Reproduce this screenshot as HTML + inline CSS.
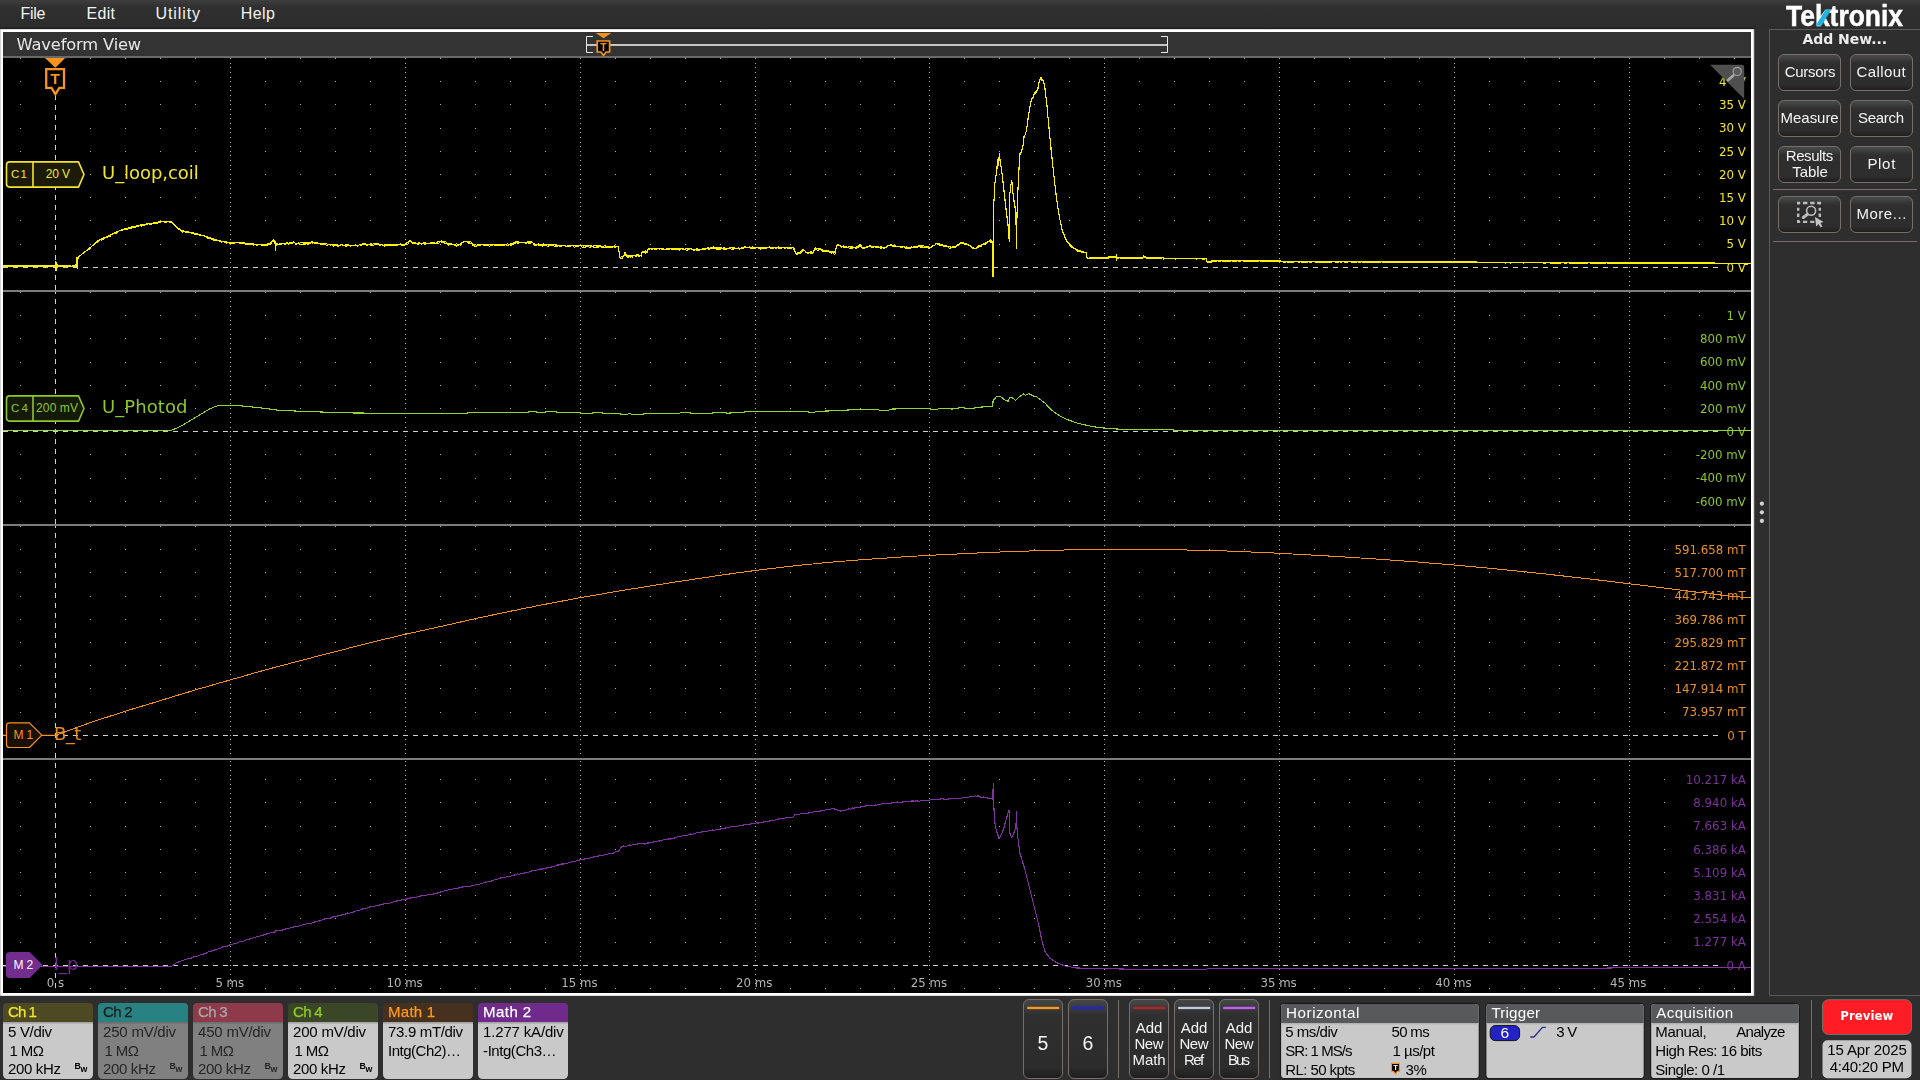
<!DOCTYPE html>
<html lang="en"><head><meta charset="utf-8"><title>Waveform View</title>
<style>
html,body{margin:0;padding:0;background:#2e2e2e;overflow:hidden}
body{width:1920px;height:1080px;font-family:"Liberation Sans",sans-serif}
svg{display:block;position:absolute;left:0;top:0}
text{white-space:pre}
</style></head><body>
<svg width="1920" height="1080" viewBox="0 0 1920 1080">
<defs>
<linearGradient id="menu" x1="0" y1="0" x2="0" y2="1"><stop offset="0" stop-color="#3e3e3e"/><stop offset="0.28" stop-color="#2f2f2f"/><stop offset="1" stop-color="#2d2d2d"/></linearGradient>
<linearGradient id="btn" x1="0" y1="0" x2="0" y2="1"><stop offset="0" stop-color="#474848"/><stop offset="0.08" stop-color="#424343"/><stop offset="0.24" stop-color="#2f2f2f"/><stop offset="0.84" stop-color="#2d2d2d"/><stop offset="1" stop-color="#1d1d1d"/></linearGradient>
<linearGradient id="tall" x1="0" y1="0" x2="0" y2="1"><stop offset="0" stop-color="#464747"/><stop offset="0.06" stop-color="#3f4040"/><stop offset="0.2" stop-color="#2f2f2f"/><stop offset="0.86" stop-color="#2c2c2c"/><stop offset="1" stop-color="#1d1d1d"/></linearGradient>
<filter id="gray" x="0" y="0" width="1920" height="1080" filterUnits="userSpaceOnUse" color-interpolation-filters="sRGB"><feOffset dx="0" dy="0"/></filter>
<clipPath id="grat"><rect x="3" y="58" width="1748" height="935"/></clipPath>
<clipPath id="s4"><rect x="3" y="760" width="1748" height="233"/></clipPath>
</defs>
<g filter="url(#gray)">
<rect x="0" y="0" width="1920" height="1080" fill="#2e2e2e"/>
<rect x="0" y="0" width="1920" height="28" fill="url(#menu)"/>
<rect x="0" y="27.6" width="1756" height="1.4" fill="#1f1f1f"/>
<text x="1786" y="25.6" font-size="29" font-weight="bold" fill="#ffffff" stroke="#ffffff" stroke-width="0.5" font-family='"Liberation Sans", sans-serif' textLength="117" lengthAdjust="spacingAndGlyphs">Tektronix</text>
<polygon points="1815.6,25.7 1821.6,25.7 1831.2,9.4 1825.6,9.4" fill="#1fb5e0"/>
<rect x="0" y="29" width="1754.3" height="967" fill="#b4b4b4"/>
<rect x="0.6" y="29.5" width="1752.8" height="966" fill="#ffffff"/>
<rect x="1753" y="32" width="0.9" height="961" fill="#dcdcdc"/>
<rect x="3" y="32" width="1748" height="24" fill="#333333"/>
<rect x="3" y="56" width="1748" height="2" fill="#696969"/>
<rect x="3" y="58" width="1748" height="935" fill="#000000"/>
<text x="16.6" y="49.8" font-size="16.3" fill="#e6e6e6" font-family='"DejaVu Sans", "Liberation Sans", sans-serif' textLength="124.6" lengthAdjust="spacing">Waveform View</text>
<path d="M593 36.5H586.5V52.5H593" fill="none" stroke="#e8e8e8" stroke-width="1"/>
<path d="M1161 36.5H1167.5V52.5H1161" fill="none" stroke="#e8e8e8" stroke-width="1"/>
<rect x="587" y="44" width="580" height="2" fill="#c4c4c4"/>
<polygon points="595.8,33 611.2,33 603.5,38.2" fill="#f7931e"/>
<path d="M597.2 41H609.6V52H606L603.5 55.4L601 52H597.2Z" fill="#000" stroke="#f7931e" stroke-width="1.7" stroke-linejoin="miter"/>
<text x="603.5" y="51.0" font-size="10.5" fill="#f7931e" font-family='"Liberation Sans", sans-serif' text-anchor="middle" font-weight="bold">T</text>
<g clip-path="url(#grat)" shape-rendering="crispEdges">
<path d="M20 58h1v1h-1zM20 81h1v1h-1zM20 104h1v1h-1zM20 128h1v1h-1zM20 151h1v1h-1zM20 174h1v1h-1zM20 197h1v1h-1zM20 220h1v1h-1zM20 244h1v1h-1zM20 292h1v1h-1zM20 315h1v1h-1zM20 338h1v1h-1zM20 362h1v1h-1zM20 385h1v1h-1zM20 408h1v1h-1zM20 454h1v1h-1zM20 478h1v1h-1zM20 501h1v1h-1zM20 526h1v1h-1zM20 549h1v1h-1zM20 572h1v1h-1zM20 596h1v1h-1zM20 619h1v1h-1zM20 642h1v1h-1zM20 665h1v1h-1zM20 688h1v1h-1zM20 712h1v1h-1zM20 779h1v1h-1zM20 802h1v1h-1zM20 826h1v1h-1zM20 849h1v1h-1zM20 872h1v1h-1zM20 895h1v1h-1zM20 918h1v1h-1zM20 942h1v1h-1zM20 988h1v1h-1zM90 58h1v1h-1zM90 81h1v1h-1zM90 104h1v1h-1zM90 128h1v1h-1zM90 151h1v1h-1zM90 174h1v1h-1zM90 197h1v1h-1zM90 220h1v1h-1zM90 244h1v1h-1zM90 292h1v1h-1zM90 315h1v1h-1zM90 338h1v1h-1zM90 362h1v1h-1zM90 385h1v1h-1zM90 408h1v1h-1zM90 454h1v1h-1zM90 478h1v1h-1zM90 501h1v1h-1zM90 526h1v1h-1zM90 549h1v1h-1zM90 572h1v1h-1zM90 596h1v1h-1zM90 619h1v1h-1zM90 642h1v1h-1zM90 665h1v1h-1zM90 688h1v1h-1zM90 712h1v1h-1zM90 779h1v1h-1zM90 802h1v1h-1zM90 826h1v1h-1zM90 849h1v1h-1zM90 872h1v1h-1zM90 895h1v1h-1zM90 918h1v1h-1zM90 942h1v1h-1zM90 988h1v1h-1zM125 58h1v1h-1zM125 81h1v1h-1zM125 104h1v1h-1zM125 128h1v1h-1zM125 151h1v1h-1zM125 174h1v1h-1zM125 197h1v1h-1zM125 220h1v1h-1zM125 244h1v1h-1zM125 292h1v1h-1zM125 315h1v1h-1zM125 338h1v1h-1zM125 362h1v1h-1zM125 385h1v1h-1zM125 408h1v1h-1zM125 454h1v1h-1zM125 478h1v1h-1zM125 501h1v1h-1zM125 526h1v1h-1zM125 549h1v1h-1zM125 572h1v1h-1zM125 596h1v1h-1zM125 619h1v1h-1zM125 642h1v1h-1zM125 665h1v1h-1zM125 688h1v1h-1zM125 712h1v1h-1zM125 779h1v1h-1zM125 802h1v1h-1zM125 826h1v1h-1zM125 849h1v1h-1zM125 872h1v1h-1zM125 895h1v1h-1zM125 918h1v1h-1zM125 942h1v1h-1zM125 988h1v1h-1zM160 58h1v1h-1zM160 81h1v1h-1zM160 104h1v1h-1zM160 128h1v1h-1zM160 151h1v1h-1zM160 174h1v1h-1zM160 197h1v1h-1zM160 220h1v1h-1zM160 244h1v1h-1zM160 292h1v1h-1zM160 315h1v1h-1zM160 338h1v1h-1zM160 362h1v1h-1zM160 385h1v1h-1zM160 408h1v1h-1zM160 454h1v1h-1zM160 478h1v1h-1zM160 501h1v1h-1zM160 526h1v1h-1zM160 549h1v1h-1zM160 572h1v1h-1zM160 596h1v1h-1zM160 619h1v1h-1zM160 642h1v1h-1zM160 665h1v1h-1zM160 688h1v1h-1zM160 712h1v1h-1zM160 779h1v1h-1zM160 802h1v1h-1zM160 826h1v1h-1zM160 849h1v1h-1zM160 872h1v1h-1zM160 895h1v1h-1zM160 918h1v1h-1zM160 942h1v1h-1zM160 988h1v1h-1zM195 58h1v1h-1zM195 81h1v1h-1zM195 104h1v1h-1zM195 128h1v1h-1zM195 151h1v1h-1zM195 174h1v1h-1zM195 197h1v1h-1zM195 220h1v1h-1zM195 244h1v1h-1zM195 292h1v1h-1zM195 315h1v1h-1zM195 338h1v1h-1zM195 362h1v1h-1zM195 385h1v1h-1zM195 408h1v1h-1zM195 454h1v1h-1zM195 478h1v1h-1zM195 501h1v1h-1zM195 526h1v1h-1zM195 549h1v1h-1zM195 572h1v1h-1zM195 596h1v1h-1zM195 619h1v1h-1zM195 642h1v1h-1zM195 665h1v1h-1zM195 688h1v1h-1zM195 712h1v1h-1zM195 779h1v1h-1zM195 802h1v1h-1zM195 826h1v1h-1zM195 849h1v1h-1zM195 872h1v1h-1zM195 895h1v1h-1zM195 918h1v1h-1zM195 942h1v1h-1zM195 988h1v1h-1zM230 58h1v1h-1zM230 63h1v1h-1zM230 67h1v1h-1zM230 72h1v1h-1zM230 77h1v1h-1zM230 81h1v1h-1zM230 86h1v1h-1zM230 90h1v1h-1zM230 95h1v1h-1zM230 100h1v1h-1zM230 104h1v1h-1zM230 109h1v1h-1zM230 114h1v1h-1zM230 118h1v1h-1zM230 123h1v1h-1zM230 128h1v1h-1zM230 132h1v1h-1zM230 137h1v1h-1zM230 142h1v1h-1zM230 146h1v1h-1zM230 151h1v1h-1zM230 155h1v1h-1zM230 160h1v1h-1zM230 165h1v1h-1zM230 169h1v1h-1zM230 174h1v1h-1zM230 179h1v1h-1zM230 183h1v1h-1zM230 188h1v1h-1zM230 193h1v1h-1zM230 197h1v1h-1zM230 202h1v1h-1zM230 206h1v1h-1zM230 211h1v1h-1zM230 216h1v1h-1zM230 220h1v1h-1zM230 225h1v1h-1zM230 230h1v1h-1zM230 234h1v1h-1zM230 239h1v1h-1zM230 244h1v1h-1zM230 248h1v1h-1zM230 253h1v1h-1zM230 258h1v1h-1zM230 262h1v1h-1zM230 267h1v1h-1zM230 271h1v1h-1zM230 276h1v1h-1zM230 281h1v1h-1zM230 285h1v1h-1zM230 292h1v1h-1zM230 297h1v1h-1zM230 301h1v1h-1zM230 306h1v1h-1zM230 311h1v1h-1zM230 315h1v1h-1zM230 320h1v1h-1zM230 324h1v1h-1zM230 329h1v1h-1zM230 334h1v1h-1zM230 338h1v1h-1zM230 343h1v1h-1zM230 348h1v1h-1zM230 352h1v1h-1zM230 357h1v1h-1zM230 362h1v1h-1zM230 366h1v1h-1zM230 371h1v1h-1zM230 376h1v1h-1zM230 380h1v1h-1zM230 385h1v1h-1zM230 389h1v1h-1zM230 394h1v1h-1zM230 399h1v1h-1zM230 403h1v1h-1zM230 408h1v1h-1zM230 413h1v1h-1zM230 417h1v1h-1zM230 422h1v1h-1zM230 427h1v1h-1zM230 431h1v1h-1zM230 436h1v1h-1zM230 440h1v1h-1zM230 445h1v1h-1zM230 450h1v1h-1zM230 454h1v1h-1zM230 459h1v1h-1zM230 464h1v1h-1zM230 468h1v1h-1zM230 473h1v1h-1zM230 478h1v1h-1zM230 482h1v1h-1zM230 487h1v1h-1zM230 492h1v1h-1zM230 496h1v1h-1zM230 501h1v1h-1zM230 505h1v1h-1zM230 510h1v1h-1zM230 515h1v1h-1zM230 519h1v1h-1zM230 526h1v1h-1zM230 531h1v1h-1zM230 535h1v1h-1zM230 540h1v1h-1zM230 545h1v1h-1zM230 549h1v1h-1zM230 554h1v1h-1zM230 558h1v1h-1zM230 563h1v1h-1zM230 568h1v1h-1zM230 572h1v1h-1zM230 577h1v1h-1zM230 582h1v1h-1zM230 586h1v1h-1zM230 591h1v1h-1zM230 596h1v1h-1zM230 600h1v1h-1zM230 605h1v1h-1zM230 610h1v1h-1zM230 614h1v1h-1zM230 619h1v1h-1zM230 623h1v1h-1zM230 628h1v1h-1zM230 633h1v1h-1zM230 637h1v1h-1zM230 642h1v1h-1zM230 647h1v1h-1zM230 651h1v1h-1zM230 656h1v1h-1zM230 661h1v1h-1zM230 665h1v1h-1zM230 670h1v1h-1zM230 674h1v1h-1zM230 679h1v1h-1zM230 684h1v1h-1zM230 688h1v1h-1zM230 693h1v1h-1zM230 698h1v1h-1zM230 702h1v1h-1zM230 707h1v1h-1zM230 712h1v1h-1zM230 716h1v1h-1zM230 721h1v1h-1zM230 726h1v1h-1zM230 730h1v1h-1zM230 735h1v1h-1zM230 739h1v1h-1zM230 744h1v1h-1zM230 749h1v1h-1zM230 753h1v1h-1zM230 761h1v1h-1zM230 765h1v1h-1zM230 770h1v1h-1zM230 775h1v1h-1zM230 779h1v1h-1zM230 784h1v1h-1zM230 788h1v1h-1zM230 793h1v1h-1zM230 798h1v1h-1zM230 802h1v1h-1zM230 807h1v1h-1zM230 812h1v1h-1zM230 816h1v1h-1zM230 821h1v1h-1zM230 826h1v1h-1zM230 830h1v1h-1zM230 835h1v1h-1zM230 840h1v1h-1zM230 844h1v1h-1zM230 849h1v1h-1zM230 853h1v1h-1zM230 858h1v1h-1zM230 863h1v1h-1zM230 867h1v1h-1zM230 872h1v1h-1zM230 877h1v1h-1zM230 881h1v1h-1zM230 886h1v1h-1zM230 891h1v1h-1zM230 895h1v1h-1zM230 900h1v1h-1zM230 904h1v1h-1zM230 909h1v1h-1zM230 914h1v1h-1zM230 918h1v1h-1zM230 923h1v1h-1zM230 928h1v1h-1zM230 932h1v1h-1zM230 937h1v1h-1zM230 942h1v1h-1zM230 946h1v1h-1zM230 951h1v1h-1zM230 956h1v1h-1zM230 960h1v1h-1zM230 965h1v1h-1zM230 969h1v1h-1zM230 974h1v1h-1zM230 979h1v1h-1zM230 983h1v1h-1zM230 988h1v1h-1zM265 58h1v1h-1zM265 81h1v1h-1zM265 104h1v1h-1zM265 128h1v1h-1zM265 151h1v1h-1zM265 174h1v1h-1zM265 197h1v1h-1zM265 220h1v1h-1zM265 244h1v1h-1zM265 292h1v1h-1zM265 315h1v1h-1zM265 338h1v1h-1zM265 362h1v1h-1zM265 385h1v1h-1zM265 408h1v1h-1zM265 454h1v1h-1zM265 478h1v1h-1zM265 501h1v1h-1zM265 526h1v1h-1zM265 549h1v1h-1zM265 572h1v1h-1zM265 596h1v1h-1zM265 619h1v1h-1zM265 642h1v1h-1zM265 665h1v1h-1zM265 688h1v1h-1zM265 712h1v1h-1zM265 779h1v1h-1zM265 802h1v1h-1zM265 826h1v1h-1zM265 849h1v1h-1zM265 872h1v1h-1zM265 895h1v1h-1zM265 918h1v1h-1zM265 942h1v1h-1zM265 988h1v1h-1zM300 58h1v1h-1zM300 81h1v1h-1zM300 104h1v1h-1zM300 128h1v1h-1zM300 151h1v1h-1zM300 174h1v1h-1zM300 197h1v1h-1zM300 220h1v1h-1zM300 244h1v1h-1zM300 292h1v1h-1zM300 315h1v1h-1zM300 338h1v1h-1zM300 362h1v1h-1zM300 385h1v1h-1zM300 408h1v1h-1zM300 454h1v1h-1zM300 478h1v1h-1zM300 501h1v1h-1zM300 526h1v1h-1zM300 549h1v1h-1zM300 572h1v1h-1zM300 596h1v1h-1zM300 619h1v1h-1zM300 642h1v1h-1zM300 665h1v1h-1zM300 688h1v1h-1zM300 712h1v1h-1zM300 779h1v1h-1zM300 802h1v1h-1zM300 826h1v1h-1zM300 849h1v1h-1zM300 872h1v1h-1zM300 895h1v1h-1zM300 918h1v1h-1zM300 942h1v1h-1zM300 988h1v1h-1zM335 58h1v1h-1zM335 81h1v1h-1zM335 104h1v1h-1zM335 128h1v1h-1zM335 151h1v1h-1zM335 174h1v1h-1zM335 197h1v1h-1zM335 220h1v1h-1zM335 244h1v1h-1zM335 292h1v1h-1zM335 315h1v1h-1zM335 338h1v1h-1zM335 362h1v1h-1zM335 385h1v1h-1zM335 408h1v1h-1zM335 454h1v1h-1zM335 478h1v1h-1zM335 501h1v1h-1zM335 526h1v1h-1zM335 549h1v1h-1zM335 572h1v1h-1zM335 596h1v1h-1zM335 619h1v1h-1zM335 642h1v1h-1zM335 665h1v1h-1zM335 688h1v1h-1zM335 712h1v1h-1zM335 779h1v1h-1zM335 802h1v1h-1zM335 826h1v1h-1zM335 849h1v1h-1zM335 872h1v1h-1zM335 895h1v1h-1zM335 918h1v1h-1zM335 942h1v1h-1zM335 988h1v1h-1zM370 58h1v1h-1zM370 81h1v1h-1zM370 104h1v1h-1zM370 128h1v1h-1zM370 151h1v1h-1zM370 174h1v1h-1zM370 197h1v1h-1zM370 220h1v1h-1zM370 244h1v1h-1zM370 292h1v1h-1zM370 315h1v1h-1zM370 338h1v1h-1zM370 362h1v1h-1zM370 385h1v1h-1zM370 408h1v1h-1zM370 454h1v1h-1zM370 478h1v1h-1zM370 501h1v1h-1zM370 526h1v1h-1zM370 549h1v1h-1zM370 572h1v1h-1zM370 596h1v1h-1zM370 619h1v1h-1zM370 642h1v1h-1zM370 665h1v1h-1zM370 688h1v1h-1zM370 712h1v1h-1zM370 779h1v1h-1zM370 802h1v1h-1zM370 826h1v1h-1zM370 849h1v1h-1zM370 872h1v1h-1zM370 895h1v1h-1zM370 918h1v1h-1zM370 942h1v1h-1zM370 988h1v1h-1zM405 58h1v1h-1zM405 63h1v1h-1zM405 67h1v1h-1zM405 72h1v1h-1zM405 77h1v1h-1zM405 81h1v1h-1zM405 86h1v1h-1zM405 90h1v1h-1zM405 95h1v1h-1zM405 100h1v1h-1zM405 104h1v1h-1zM405 109h1v1h-1zM405 114h1v1h-1zM405 118h1v1h-1zM405 123h1v1h-1zM405 128h1v1h-1zM405 132h1v1h-1zM405 137h1v1h-1zM405 142h1v1h-1zM405 146h1v1h-1zM405 151h1v1h-1zM405 155h1v1h-1zM405 160h1v1h-1zM405 165h1v1h-1zM405 169h1v1h-1zM405 174h1v1h-1zM405 179h1v1h-1zM405 183h1v1h-1zM405 188h1v1h-1zM405 193h1v1h-1zM405 197h1v1h-1zM405 202h1v1h-1zM405 206h1v1h-1zM405 211h1v1h-1zM405 216h1v1h-1zM405 220h1v1h-1zM405 225h1v1h-1zM405 230h1v1h-1zM405 234h1v1h-1zM405 239h1v1h-1zM405 244h1v1h-1zM405 248h1v1h-1zM405 253h1v1h-1zM405 258h1v1h-1zM405 262h1v1h-1zM405 267h1v1h-1zM405 271h1v1h-1zM405 276h1v1h-1zM405 281h1v1h-1zM405 285h1v1h-1zM405 292h1v1h-1zM405 297h1v1h-1zM405 301h1v1h-1zM405 306h1v1h-1zM405 311h1v1h-1zM405 315h1v1h-1zM405 320h1v1h-1zM405 324h1v1h-1zM405 329h1v1h-1zM405 334h1v1h-1zM405 338h1v1h-1zM405 343h1v1h-1zM405 348h1v1h-1zM405 352h1v1h-1zM405 357h1v1h-1zM405 362h1v1h-1zM405 366h1v1h-1zM405 371h1v1h-1zM405 376h1v1h-1zM405 380h1v1h-1zM405 385h1v1h-1zM405 389h1v1h-1zM405 394h1v1h-1zM405 399h1v1h-1zM405 403h1v1h-1zM405 408h1v1h-1zM405 413h1v1h-1zM405 417h1v1h-1zM405 422h1v1h-1zM405 427h1v1h-1zM405 431h1v1h-1zM405 436h1v1h-1zM405 440h1v1h-1zM405 445h1v1h-1zM405 450h1v1h-1zM405 454h1v1h-1zM405 459h1v1h-1zM405 464h1v1h-1zM405 468h1v1h-1zM405 473h1v1h-1zM405 478h1v1h-1zM405 482h1v1h-1zM405 487h1v1h-1zM405 492h1v1h-1zM405 496h1v1h-1zM405 501h1v1h-1zM405 505h1v1h-1zM405 510h1v1h-1zM405 515h1v1h-1zM405 519h1v1h-1zM405 526h1v1h-1zM405 531h1v1h-1zM405 535h1v1h-1zM405 540h1v1h-1zM405 545h1v1h-1zM405 549h1v1h-1zM405 554h1v1h-1zM405 558h1v1h-1zM405 563h1v1h-1zM405 568h1v1h-1zM405 572h1v1h-1zM405 577h1v1h-1zM405 582h1v1h-1zM405 586h1v1h-1zM405 591h1v1h-1zM405 596h1v1h-1zM405 600h1v1h-1zM405 605h1v1h-1zM405 610h1v1h-1zM405 614h1v1h-1zM405 619h1v1h-1zM405 623h1v1h-1zM405 628h1v1h-1zM405 633h1v1h-1zM405 637h1v1h-1zM405 642h1v1h-1zM405 647h1v1h-1zM405 651h1v1h-1zM405 656h1v1h-1zM405 661h1v1h-1zM405 665h1v1h-1zM405 670h1v1h-1zM405 674h1v1h-1zM405 679h1v1h-1zM405 684h1v1h-1zM405 688h1v1h-1zM405 693h1v1h-1zM405 698h1v1h-1zM405 702h1v1h-1zM405 707h1v1h-1zM405 712h1v1h-1zM405 716h1v1h-1zM405 721h1v1h-1zM405 726h1v1h-1zM405 730h1v1h-1zM405 735h1v1h-1zM405 739h1v1h-1zM405 744h1v1h-1zM405 749h1v1h-1zM405 753h1v1h-1zM405 761h1v1h-1zM405 765h1v1h-1zM405 770h1v1h-1zM405 775h1v1h-1zM405 779h1v1h-1zM405 784h1v1h-1zM405 788h1v1h-1zM405 793h1v1h-1zM405 798h1v1h-1zM405 802h1v1h-1zM405 807h1v1h-1zM405 812h1v1h-1zM405 816h1v1h-1zM405 821h1v1h-1zM405 826h1v1h-1zM405 830h1v1h-1zM405 835h1v1h-1zM405 840h1v1h-1zM405 844h1v1h-1zM405 849h1v1h-1zM405 853h1v1h-1zM405 858h1v1h-1zM405 863h1v1h-1zM405 867h1v1h-1zM405 872h1v1h-1zM405 877h1v1h-1zM405 881h1v1h-1zM405 886h1v1h-1zM405 891h1v1h-1zM405 895h1v1h-1zM405 900h1v1h-1zM405 904h1v1h-1zM405 909h1v1h-1zM405 914h1v1h-1zM405 918h1v1h-1zM405 923h1v1h-1zM405 928h1v1h-1zM405 932h1v1h-1zM405 937h1v1h-1zM405 942h1v1h-1zM405 946h1v1h-1zM405 951h1v1h-1zM405 956h1v1h-1zM405 960h1v1h-1zM405 965h1v1h-1zM405 969h1v1h-1zM405 974h1v1h-1zM405 979h1v1h-1zM405 983h1v1h-1zM405 988h1v1h-1zM440 58h1v1h-1zM440 81h1v1h-1zM440 104h1v1h-1zM440 128h1v1h-1zM440 151h1v1h-1zM440 174h1v1h-1zM440 197h1v1h-1zM440 220h1v1h-1zM440 244h1v1h-1zM440 292h1v1h-1zM440 315h1v1h-1zM440 338h1v1h-1zM440 362h1v1h-1zM440 385h1v1h-1zM440 408h1v1h-1zM440 454h1v1h-1zM440 478h1v1h-1zM440 501h1v1h-1zM440 526h1v1h-1zM440 549h1v1h-1zM440 572h1v1h-1zM440 596h1v1h-1zM440 619h1v1h-1zM440 642h1v1h-1zM440 665h1v1h-1zM440 688h1v1h-1zM440 712h1v1h-1zM440 779h1v1h-1zM440 802h1v1h-1zM440 826h1v1h-1zM440 849h1v1h-1zM440 872h1v1h-1zM440 895h1v1h-1zM440 918h1v1h-1zM440 942h1v1h-1zM440 988h1v1h-1zM475 58h1v1h-1zM475 81h1v1h-1zM475 104h1v1h-1zM475 128h1v1h-1zM475 151h1v1h-1zM475 174h1v1h-1zM475 197h1v1h-1zM475 220h1v1h-1zM475 244h1v1h-1zM475 292h1v1h-1zM475 315h1v1h-1zM475 338h1v1h-1zM475 362h1v1h-1zM475 385h1v1h-1zM475 408h1v1h-1zM475 454h1v1h-1zM475 478h1v1h-1zM475 501h1v1h-1zM475 526h1v1h-1zM475 549h1v1h-1zM475 572h1v1h-1zM475 596h1v1h-1zM475 619h1v1h-1zM475 642h1v1h-1zM475 665h1v1h-1zM475 688h1v1h-1zM475 712h1v1h-1zM475 779h1v1h-1zM475 802h1v1h-1zM475 826h1v1h-1zM475 849h1v1h-1zM475 872h1v1h-1zM475 895h1v1h-1zM475 918h1v1h-1zM475 942h1v1h-1zM475 988h1v1h-1zM510 58h1v1h-1zM510 81h1v1h-1zM510 104h1v1h-1zM510 128h1v1h-1zM510 151h1v1h-1zM510 174h1v1h-1zM510 197h1v1h-1zM510 220h1v1h-1zM510 244h1v1h-1zM510 292h1v1h-1zM510 315h1v1h-1zM510 338h1v1h-1zM510 362h1v1h-1zM510 385h1v1h-1zM510 408h1v1h-1zM510 454h1v1h-1zM510 478h1v1h-1zM510 501h1v1h-1zM510 526h1v1h-1zM510 549h1v1h-1zM510 572h1v1h-1zM510 596h1v1h-1zM510 619h1v1h-1zM510 642h1v1h-1zM510 665h1v1h-1zM510 688h1v1h-1zM510 712h1v1h-1zM510 779h1v1h-1zM510 802h1v1h-1zM510 826h1v1h-1zM510 849h1v1h-1zM510 872h1v1h-1zM510 895h1v1h-1zM510 918h1v1h-1zM510 942h1v1h-1zM510 988h1v1h-1zM545 58h1v1h-1zM545 81h1v1h-1zM545 104h1v1h-1zM545 128h1v1h-1zM545 151h1v1h-1zM545 174h1v1h-1zM545 197h1v1h-1zM545 220h1v1h-1zM545 244h1v1h-1zM545 292h1v1h-1zM545 315h1v1h-1zM545 338h1v1h-1zM545 362h1v1h-1zM545 385h1v1h-1zM545 408h1v1h-1zM545 454h1v1h-1zM545 478h1v1h-1zM545 501h1v1h-1zM545 526h1v1h-1zM545 549h1v1h-1zM545 572h1v1h-1zM545 596h1v1h-1zM545 619h1v1h-1zM545 642h1v1h-1zM545 665h1v1h-1zM545 688h1v1h-1zM545 712h1v1h-1zM545 779h1v1h-1zM545 802h1v1h-1zM545 826h1v1h-1zM545 849h1v1h-1zM545 872h1v1h-1zM545 895h1v1h-1zM545 918h1v1h-1zM545 942h1v1h-1zM545 988h1v1h-1zM580 58h1v1h-1zM580 63h1v1h-1zM580 67h1v1h-1zM580 72h1v1h-1zM580 77h1v1h-1zM580 81h1v1h-1zM580 86h1v1h-1zM580 90h1v1h-1zM580 95h1v1h-1zM580 100h1v1h-1zM580 104h1v1h-1zM580 109h1v1h-1zM580 114h1v1h-1zM580 118h1v1h-1zM580 123h1v1h-1zM580 128h1v1h-1zM580 132h1v1h-1zM580 137h1v1h-1zM580 142h1v1h-1zM580 146h1v1h-1zM580 151h1v1h-1zM580 155h1v1h-1zM580 160h1v1h-1zM580 165h1v1h-1zM580 169h1v1h-1zM580 174h1v1h-1zM580 179h1v1h-1zM580 183h1v1h-1zM580 188h1v1h-1zM580 193h1v1h-1zM580 197h1v1h-1zM580 202h1v1h-1zM580 206h1v1h-1zM580 211h1v1h-1zM580 216h1v1h-1zM580 220h1v1h-1zM580 225h1v1h-1zM580 230h1v1h-1zM580 234h1v1h-1zM580 239h1v1h-1zM580 244h1v1h-1zM580 248h1v1h-1zM580 253h1v1h-1zM580 258h1v1h-1zM580 262h1v1h-1zM580 267h1v1h-1zM580 271h1v1h-1zM580 276h1v1h-1zM580 281h1v1h-1zM580 285h1v1h-1zM580 292h1v1h-1zM580 297h1v1h-1zM580 301h1v1h-1zM580 306h1v1h-1zM580 311h1v1h-1zM580 315h1v1h-1zM580 320h1v1h-1zM580 324h1v1h-1zM580 329h1v1h-1zM580 334h1v1h-1zM580 338h1v1h-1zM580 343h1v1h-1zM580 348h1v1h-1zM580 352h1v1h-1zM580 357h1v1h-1zM580 362h1v1h-1zM580 366h1v1h-1zM580 371h1v1h-1zM580 376h1v1h-1zM580 380h1v1h-1zM580 385h1v1h-1zM580 389h1v1h-1zM580 394h1v1h-1zM580 399h1v1h-1zM580 403h1v1h-1zM580 408h1v1h-1zM580 413h1v1h-1zM580 417h1v1h-1zM580 422h1v1h-1zM580 427h1v1h-1zM580 431h1v1h-1zM580 436h1v1h-1zM580 440h1v1h-1zM580 445h1v1h-1zM580 450h1v1h-1zM580 454h1v1h-1zM580 459h1v1h-1zM580 464h1v1h-1zM580 468h1v1h-1zM580 473h1v1h-1zM580 478h1v1h-1zM580 482h1v1h-1zM580 487h1v1h-1zM580 492h1v1h-1zM580 496h1v1h-1zM580 501h1v1h-1zM580 505h1v1h-1zM580 510h1v1h-1zM580 515h1v1h-1zM580 519h1v1h-1zM580 526h1v1h-1zM580 531h1v1h-1zM580 535h1v1h-1zM580 540h1v1h-1zM580 545h1v1h-1zM580 549h1v1h-1zM580 554h1v1h-1zM580 558h1v1h-1zM580 563h1v1h-1zM580 568h1v1h-1zM580 572h1v1h-1zM580 577h1v1h-1zM580 582h1v1h-1zM580 586h1v1h-1zM580 591h1v1h-1zM580 596h1v1h-1zM580 600h1v1h-1zM580 605h1v1h-1zM580 610h1v1h-1zM580 614h1v1h-1zM580 619h1v1h-1zM580 623h1v1h-1zM580 628h1v1h-1zM580 633h1v1h-1zM580 637h1v1h-1zM580 642h1v1h-1zM580 647h1v1h-1zM580 651h1v1h-1zM580 656h1v1h-1zM580 661h1v1h-1zM580 665h1v1h-1zM580 670h1v1h-1zM580 674h1v1h-1zM580 679h1v1h-1zM580 684h1v1h-1zM580 688h1v1h-1zM580 693h1v1h-1zM580 698h1v1h-1zM580 702h1v1h-1zM580 707h1v1h-1zM580 712h1v1h-1zM580 716h1v1h-1zM580 721h1v1h-1zM580 726h1v1h-1zM580 730h1v1h-1zM580 735h1v1h-1zM580 739h1v1h-1zM580 744h1v1h-1zM580 749h1v1h-1zM580 753h1v1h-1zM580 761h1v1h-1zM580 765h1v1h-1zM580 770h1v1h-1zM580 775h1v1h-1zM580 779h1v1h-1zM580 784h1v1h-1zM580 788h1v1h-1zM580 793h1v1h-1zM580 798h1v1h-1zM580 802h1v1h-1zM580 807h1v1h-1zM580 812h1v1h-1zM580 816h1v1h-1zM580 821h1v1h-1zM580 826h1v1h-1zM580 830h1v1h-1zM580 835h1v1h-1zM580 840h1v1h-1zM580 844h1v1h-1zM580 849h1v1h-1zM580 853h1v1h-1zM580 858h1v1h-1zM580 863h1v1h-1zM580 867h1v1h-1zM580 872h1v1h-1zM580 877h1v1h-1zM580 881h1v1h-1zM580 886h1v1h-1zM580 891h1v1h-1zM580 895h1v1h-1zM580 900h1v1h-1zM580 904h1v1h-1zM580 909h1v1h-1zM580 914h1v1h-1zM580 918h1v1h-1zM580 923h1v1h-1zM580 928h1v1h-1zM580 932h1v1h-1zM580 937h1v1h-1zM580 942h1v1h-1zM580 946h1v1h-1zM580 951h1v1h-1zM580 956h1v1h-1zM580 960h1v1h-1zM580 965h1v1h-1zM580 969h1v1h-1zM580 974h1v1h-1zM580 979h1v1h-1zM580 983h1v1h-1zM580 988h1v1h-1zM615 58h1v1h-1zM615 81h1v1h-1zM615 104h1v1h-1zM615 128h1v1h-1zM615 151h1v1h-1zM615 174h1v1h-1zM615 197h1v1h-1zM615 220h1v1h-1zM615 244h1v1h-1zM615 292h1v1h-1zM615 315h1v1h-1zM615 338h1v1h-1zM615 362h1v1h-1zM615 385h1v1h-1zM615 408h1v1h-1zM615 454h1v1h-1zM615 478h1v1h-1zM615 501h1v1h-1zM615 526h1v1h-1zM615 549h1v1h-1zM615 572h1v1h-1zM615 596h1v1h-1zM615 619h1v1h-1zM615 642h1v1h-1zM615 665h1v1h-1zM615 688h1v1h-1zM615 712h1v1h-1zM615 779h1v1h-1zM615 802h1v1h-1zM615 826h1v1h-1zM615 849h1v1h-1zM615 872h1v1h-1zM615 895h1v1h-1zM615 918h1v1h-1zM615 942h1v1h-1zM615 988h1v1h-1zM650 58h1v1h-1zM650 81h1v1h-1zM650 104h1v1h-1zM650 128h1v1h-1zM650 151h1v1h-1zM650 174h1v1h-1zM650 197h1v1h-1zM650 220h1v1h-1zM650 244h1v1h-1zM650 292h1v1h-1zM650 315h1v1h-1zM650 338h1v1h-1zM650 362h1v1h-1zM650 385h1v1h-1zM650 408h1v1h-1zM650 454h1v1h-1zM650 478h1v1h-1zM650 501h1v1h-1zM650 526h1v1h-1zM650 549h1v1h-1zM650 572h1v1h-1zM650 596h1v1h-1zM650 619h1v1h-1zM650 642h1v1h-1zM650 665h1v1h-1zM650 688h1v1h-1zM650 712h1v1h-1zM650 779h1v1h-1zM650 802h1v1h-1zM650 826h1v1h-1zM650 849h1v1h-1zM650 872h1v1h-1zM650 895h1v1h-1zM650 918h1v1h-1zM650 942h1v1h-1zM650 988h1v1h-1zM685 58h1v1h-1zM685 81h1v1h-1zM685 104h1v1h-1zM685 128h1v1h-1zM685 151h1v1h-1zM685 174h1v1h-1zM685 197h1v1h-1zM685 220h1v1h-1zM685 244h1v1h-1zM685 292h1v1h-1zM685 315h1v1h-1zM685 338h1v1h-1zM685 362h1v1h-1zM685 385h1v1h-1zM685 408h1v1h-1zM685 454h1v1h-1zM685 478h1v1h-1zM685 501h1v1h-1zM685 526h1v1h-1zM685 549h1v1h-1zM685 572h1v1h-1zM685 596h1v1h-1zM685 619h1v1h-1zM685 642h1v1h-1zM685 665h1v1h-1zM685 688h1v1h-1zM685 712h1v1h-1zM685 779h1v1h-1zM685 802h1v1h-1zM685 826h1v1h-1zM685 849h1v1h-1zM685 872h1v1h-1zM685 895h1v1h-1zM685 918h1v1h-1zM685 942h1v1h-1zM685 988h1v1h-1zM720 58h1v1h-1zM720 81h1v1h-1zM720 104h1v1h-1zM720 128h1v1h-1zM720 151h1v1h-1zM720 174h1v1h-1zM720 197h1v1h-1zM720 220h1v1h-1zM720 244h1v1h-1zM720 292h1v1h-1zM720 315h1v1h-1zM720 338h1v1h-1zM720 362h1v1h-1zM720 385h1v1h-1zM720 408h1v1h-1zM720 454h1v1h-1zM720 478h1v1h-1zM720 501h1v1h-1zM720 526h1v1h-1zM720 549h1v1h-1zM720 572h1v1h-1zM720 596h1v1h-1zM720 619h1v1h-1zM720 642h1v1h-1zM720 665h1v1h-1zM720 688h1v1h-1zM720 712h1v1h-1zM720 779h1v1h-1zM720 802h1v1h-1zM720 826h1v1h-1zM720 849h1v1h-1zM720 872h1v1h-1zM720 895h1v1h-1zM720 918h1v1h-1zM720 942h1v1h-1zM720 988h1v1h-1zM755 58h1v1h-1zM755 63h1v1h-1zM755 67h1v1h-1zM755 72h1v1h-1zM755 77h1v1h-1zM755 81h1v1h-1zM755 86h1v1h-1zM755 90h1v1h-1zM755 95h1v1h-1zM755 100h1v1h-1zM755 104h1v1h-1zM755 109h1v1h-1zM755 114h1v1h-1zM755 118h1v1h-1zM755 123h1v1h-1zM755 128h1v1h-1zM755 132h1v1h-1zM755 137h1v1h-1zM755 142h1v1h-1zM755 146h1v1h-1zM755 151h1v1h-1zM755 155h1v1h-1zM755 160h1v1h-1zM755 165h1v1h-1zM755 169h1v1h-1zM755 174h1v1h-1zM755 179h1v1h-1zM755 183h1v1h-1zM755 188h1v1h-1zM755 193h1v1h-1zM755 197h1v1h-1zM755 202h1v1h-1zM755 206h1v1h-1zM755 211h1v1h-1zM755 216h1v1h-1zM755 220h1v1h-1zM755 225h1v1h-1zM755 230h1v1h-1zM755 234h1v1h-1zM755 239h1v1h-1zM755 244h1v1h-1zM755 248h1v1h-1zM755 253h1v1h-1zM755 258h1v1h-1zM755 262h1v1h-1zM755 267h1v1h-1zM755 271h1v1h-1zM755 276h1v1h-1zM755 281h1v1h-1zM755 285h1v1h-1zM755 292h1v1h-1zM755 297h1v1h-1zM755 301h1v1h-1zM755 306h1v1h-1zM755 311h1v1h-1zM755 315h1v1h-1zM755 320h1v1h-1zM755 324h1v1h-1zM755 329h1v1h-1zM755 334h1v1h-1zM755 338h1v1h-1zM755 343h1v1h-1zM755 348h1v1h-1zM755 352h1v1h-1zM755 357h1v1h-1zM755 362h1v1h-1zM755 366h1v1h-1zM755 371h1v1h-1zM755 376h1v1h-1zM755 380h1v1h-1zM755 385h1v1h-1zM755 389h1v1h-1zM755 394h1v1h-1zM755 399h1v1h-1zM755 403h1v1h-1zM755 408h1v1h-1zM755 413h1v1h-1zM755 417h1v1h-1zM755 422h1v1h-1zM755 427h1v1h-1zM755 431h1v1h-1zM755 436h1v1h-1zM755 440h1v1h-1zM755 445h1v1h-1zM755 450h1v1h-1zM755 454h1v1h-1zM755 459h1v1h-1zM755 464h1v1h-1zM755 468h1v1h-1zM755 473h1v1h-1zM755 478h1v1h-1zM755 482h1v1h-1zM755 487h1v1h-1zM755 492h1v1h-1zM755 496h1v1h-1zM755 501h1v1h-1zM755 505h1v1h-1zM755 510h1v1h-1zM755 515h1v1h-1zM755 519h1v1h-1zM755 526h1v1h-1zM755 531h1v1h-1zM755 535h1v1h-1zM755 540h1v1h-1zM755 545h1v1h-1zM755 549h1v1h-1zM755 554h1v1h-1zM755 558h1v1h-1zM755 563h1v1h-1zM755 568h1v1h-1zM755 572h1v1h-1zM755 577h1v1h-1zM755 582h1v1h-1zM755 586h1v1h-1zM755 591h1v1h-1zM755 596h1v1h-1zM755 600h1v1h-1zM755 605h1v1h-1zM755 610h1v1h-1zM755 614h1v1h-1zM755 619h1v1h-1zM755 623h1v1h-1zM755 628h1v1h-1zM755 633h1v1h-1zM755 637h1v1h-1zM755 642h1v1h-1zM755 647h1v1h-1zM755 651h1v1h-1zM755 656h1v1h-1zM755 661h1v1h-1zM755 665h1v1h-1zM755 670h1v1h-1zM755 674h1v1h-1zM755 679h1v1h-1zM755 684h1v1h-1zM755 688h1v1h-1zM755 693h1v1h-1zM755 698h1v1h-1zM755 702h1v1h-1zM755 707h1v1h-1zM755 712h1v1h-1zM755 716h1v1h-1zM755 721h1v1h-1zM755 726h1v1h-1zM755 730h1v1h-1zM755 735h1v1h-1zM755 739h1v1h-1zM755 744h1v1h-1zM755 749h1v1h-1zM755 753h1v1h-1zM755 761h1v1h-1zM755 765h1v1h-1zM755 770h1v1h-1zM755 775h1v1h-1zM755 779h1v1h-1zM755 784h1v1h-1zM755 788h1v1h-1zM755 793h1v1h-1zM755 798h1v1h-1zM755 802h1v1h-1zM755 807h1v1h-1zM755 812h1v1h-1zM755 816h1v1h-1zM755 821h1v1h-1zM755 826h1v1h-1zM755 830h1v1h-1zM755 835h1v1h-1zM755 840h1v1h-1zM755 844h1v1h-1zM755 849h1v1h-1zM755 853h1v1h-1zM755 858h1v1h-1zM755 863h1v1h-1zM755 867h1v1h-1zM755 872h1v1h-1zM755 877h1v1h-1zM755 881h1v1h-1zM755 886h1v1h-1zM755 891h1v1h-1zM755 895h1v1h-1zM755 900h1v1h-1zM755 904h1v1h-1zM755 909h1v1h-1zM755 914h1v1h-1zM755 918h1v1h-1zM755 923h1v1h-1zM755 928h1v1h-1zM755 932h1v1h-1zM755 937h1v1h-1zM755 942h1v1h-1zM755 946h1v1h-1zM755 951h1v1h-1zM755 956h1v1h-1zM755 960h1v1h-1zM755 965h1v1h-1zM755 969h1v1h-1zM755 974h1v1h-1zM755 979h1v1h-1zM755 983h1v1h-1zM755 988h1v1h-1zM790 58h1v1h-1zM790 81h1v1h-1zM790 104h1v1h-1zM790 128h1v1h-1zM790 151h1v1h-1zM790 174h1v1h-1zM790 197h1v1h-1zM790 220h1v1h-1zM790 244h1v1h-1zM790 292h1v1h-1zM790 315h1v1h-1zM790 338h1v1h-1zM790 362h1v1h-1zM790 385h1v1h-1zM790 408h1v1h-1zM790 454h1v1h-1zM790 478h1v1h-1zM790 501h1v1h-1zM790 526h1v1h-1zM790 549h1v1h-1zM790 572h1v1h-1zM790 596h1v1h-1zM790 619h1v1h-1zM790 642h1v1h-1zM790 665h1v1h-1zM790 688h1v1h-1zM790 712h1v1h-1zM790 779h1v1h-1zM790 802h1v1h-1zM790 826h1v1h-1zM790 849h1v1h-1zM790 872h1v1h-1zM790 895h1v1h-1zM790 918h1v1h-1zM790 942h1v1h-1zM790 988h1v1h-1zM825 58h1v1h-1zM825 81h1v1h-1zM825 104h1v1h-1zM825 128h1v1h-1zM825 151h1v1h-1zM825 174h1v1h-1zM825 197h1v1h-1zM825 220h1v1h-1zM825 244h1v1h-1zM825 292h1v1h-1zM825 315h1v1h-1zM825 338h1v1h-1zM825 362h1v1h-1zM825 385h1v1h-1zM825 408h1v1h-1zM825 454h1v1h-1zM825 478h1v1h-1zM825 501h1v1h-1zM825 526h1v1h-1zM825 549h1v1h-1zM825 572h1v1h-1zM825 596h1v1h-1zM825 619h1v1h-1zM825 642h1v1h-1zM825 665h1v1h-1zM825 688h1v1h-1zM825 712h1v1h-1zM825 779h1v1h-1zM825 802h1v1h-1zM825 826h1v1h-1zM825 849h1v1h-1zM825 872h1v1h-1zM825 895h1v1h-1zM825 918h1v1h-1zM825 942h1v1h-1zM825 988h1v1h-1zM860 58h1v1h-1zM860 81h1v1h-1zM860 104h1v1h-1zM860 128h1v1h-1zM860 151h1v1h-1zM860 174h1v1h-1zM860 197h1v1h-1zM860 220h1v1h-1zM860 244h1v1h-1zM860 292h1v1h-1zM860 315h1v1h-1zM860 338h1v1h-1zM860 362h1v1h-1zM860 385h1v1h-1zM860 408h1v1h-1zM860 454h1v1h-1zM860 478h1v1h-1zM860 501h1v1h-1zM860 526h1v1h-1zM860 549h1v1h-1zM860 572h1v1h-1zM860 596h1v1h-1zM860 619h1v1h-1zM860 642h1v1h-1zM860 665h1v1h-1zM860 688h1v1h-1zM860 712h1v1h-1zM860 779h1v1h-1zM860 802h1v1h-1zM860 826h1v1h-1zM860 849h1v1h-1zM860 872h1v1h-1zM860 895h1v1h-1zM860 918h1v1h-1zM860 942h1v1h-1zM860 988h1v1h-1zM894 58h1v1h-1zM894 81h1v1h-1zM894 104h1v1h-1zM894 128h1v1h-1zM894 151h1v1h-1zM894 174h1v1h-1zM894 197h1v1h-1zM894 220h1v1h-1zM894 244h1v1h-1zM894 292h1v1h-1zM894 315h1v1h-1zM894 338h1v1h-1zM894 362h1v1h-1zM894 385h1v1h-1zM894 408h1v1h-1zM894 454h1v1h-1zM894 478h1v1h-1zM894 501h1v1h-1zM894 526h1v1h-1zM894 549h1v1h-1zM894 572h1v1h-1zM894 596h1v1h-1zM894 619h1v1h-1zM894 642h1v1h-1zM894 665h1v1h-1zM894 688h1v1h-1zM894 712h1v1h-1zM894 779h1v1h-1zM894 802h1v1h-1zM894 826h1v1h-1zM894 849h1v1h-1zM894 872h1v1h-1zM894 895h1v1h-1zM894 918h1v1h-1zM894 942h1v1h-1zM894 988h1v1h-1zM929 58h1v1h-1zM929 63h1v1h-1zM929 67h1v1h-1zM929 72h1v1h-1zM929 77h1v1h-1zM929 81h1v1h-1zM929 86h1v1h-1zM929 90h1v1h-1zM929 95h1v1h-1zM929 100h1v1h-1zM929 104h1v1h-1zM929 109h1v1h-1zM929 114h1v1h-1zM929 118h1v1h-1zM929 123h1v1h-1zM929 128h1v1h-1zM929 132h1v1h-1zM929 137h1v1h-1zM929 142h1v1h-1zM929 146h1v1h-1zM929 151h1v1h-1zM929 155h1v1h-1zM929 160h1v1h-1zM929 165h1v1h-1zM929 169h1v1h-1zM929 174h1v1h-1zM929 179h1v1h-1zM929 183h1v1h-1zM929 188h1v1h-1zM929 193h1v1h-1zM929 197h1v1h-1zM929 202h1v1h-1zM929 206h1v1h-1zM929 211h1v1h-1zM929 216h1v1h-1zM929 220h1v1h-1zM929 225h1v1h-1zM929 230h1v1h-1zM929 234h1v1h-1zM929 239h1v1h-1zM929 244h1v1h-1zM929 248h1v1h-1zM929 253h1v1h-1zM929 258h1v1h-1zM929 262h1v1h-1zM929 267h1v1h-1zM929 271h1v1h-1zM929 276h1v1h-1zM929 281h1v1h-1zM929 285h1v1h-1zM929 292h1v1h-1zM929 297h1v1h-1zM929 301h1v1h-1zM929 306h1v1h-1zM929 311h1v1h-1zM929 315h1v1h-1zM929 320h1v1h-1zM929 324h1v1h-1zM929 329h1v1h-1zM929 334h1v1h-1zM929 338h1v1h-1zM929 343h1v1h-1zM929 348h1v1h-1zM929 352h1v1h-1zM929 357h1v1h-1zM929 362h1v1h-1zM929 366h1v1h-1zM929 371h1v1h-1zM929 376h1v1h-1zM929 380h1v1h-1zM929 385h1v1h-1zM929 389h1v1h-1zM929 394h1v1h-1zM929 399h1v1h-1zM929 403h1v1h-1zM929 408h1v1h-1zM929 413h1v1h-1zM929 417h1v1h-1zM929 422h1v1h-1zM929 427h1v1h-1zM929 431h1v1h-1zM929 436h1v1h-1zM929 440h1v1h-1zM929 445h1v1h-1zM929 450h1v1h-1zM929 454h1v1h-1zM929 459h1v1h-1zM929 464h1v1h-1zM929 468h1v1h-1zM929 473h1v1h-1zM929 478h1v1h-1zM929 482h1v1h-1zM929 487h1v1h-1zM929 492h1v1h-1zM929 496h1v1h-1zM929 501h1v1h-1zM929 505h1v1h-1zM929 510h1v1h-1zM929 515h1v1h-1zM929 519h1v1h-1zM929 526h1v1h-1zM929 531h1v1h-1zM929 535h1v1h-1zM929 540h1v1h-1zM929 545h1v1h-1zM929 549h1v1h-1zM929 554h1v1h-1zM929 558h1v1h-1zM929 563h1v1h-1zM929 568h1v1h-1zM929 572h1v1h-1zM929 577h1v1h-1zM929 582h1v1h-1zM929 586h1v1h-1zM929 591h1v1h-1zM929 596h1v1h-1zM929 600h1v1h-1zM929 605h1v1h-1zM929 610h1v1h-1zM929 614h1v1h-1zM929 619h1v1h-1zM929 623h1v1h-1zM929 628h1v1h-1zM929 633h1v1h-1zM929 637h1v1h-1zM929 642h1v1h-1zM929 647h1v1h-1zM929 651h1v1h-1zM929 656h1v1h-1zM929 661h1v1h-1zM929 665h1v1h-1zM929 670h1v1h-1zM929 674h1v1h-1zM929 679h1v1h-1zM929 684h1v1h-1zM929 688h1v1h-1zM929 693h1v1h-1zM929 698h1v1h-1zM929 702h1v1h-1zM929 707h1v1h-1zM929 712h1v1h-1zM929 716h1v1h-1zM929 721h1v1h-1zM929 726h1v1h-1zM929 730h1v1h-1zM929 735h1v1h-1zM929 739h1v1h-1zM929 744h1v1h-1zM929 749h1v1h-1zM929 753h1v1h-1zM929 761h1v1h-1zM929 765h1v1h-1zM929 770h1v1h-1zM929 775h1v1h-1zM929 779h1v1h-1zM929 784h1v1h-1zM929 788h1v1h-1zM929 793h1v1h-1zM929 798h1v1h-1zM929 802h1v1h-1zM929 807h1v1h-1zM929 812h1v1h-1zM929 816h1v1h-1zM929 821h1v1h-1zM929 826h1v1h-1zM929 830h1v1h-1zM929 835h1v1h-1zM929 840h1v1h-1zM929 844h1v1h-1zM929 849h1v1h-1zM929 853h1v1h-1zM929 858h1v1h-1zM929 863h1v1h-1zM929 867h1v1h-1zM929 872h1v1h-1zM929 877h1v1h-1zM929 881h1v1h-1zM929 886h1v1h-1zM929 891h1v1h-1zM929 895h1v1h-1zM929 900h1v1h-1zM929 904h1v1h-1zM929 909h1v1h-1zM929 914h1v1h-1zM929 918h1v1h-1zM929 923h1v1h-1zM929 928h1v1h-1zM929 932h1v1h-1zM929 937h1v1h-1zM929 942h1v1h-1zM929 946h1v1h-1zM929 951h1v1h-1zM929 956h1v1h-1zM929 960h1v1h-1zM929 965h1v1h-1zM929 969h1v1h-1zM929 974h1v1h-1zM929 979h1v1h-1zM929 983h1v1h-1zM929 988h1v1h-1zM964 58h1v1h-1zM964 81h1v1h-1zM964 104h1v1h-1zM964 128h1v1h-1zM964 151h1v1h-1zM964 174h1v1h-1zM964 197h1v1h-1zM964 220h1v1h-1zM964 244h1v1h-1zM964 292h1v1h-1zM964 315h1v1h-1zM964 338h1v1h-1zM964 362h1v1h-1zM964 385h1v1h-1zM964 408h1v1h-1zM964 454h1v1h-1zM964 478h1v1h-1zM964 501h1v1h-1zM964 526h1v1h-1zM964 549h1v1h-1zM964 572h1v1h-1zM964 596h1v1h-1zM964 619h1v1h-1zM964 642h1v1h-1zM964 665h1v1h-1zM964 688h1v1h-1zM964 712h1v1h-1zM964 779h1v1h-1zM964 802h1v1h-1zM964 826h1v1h-1zM964 849h1v1h-1zM964 872h1v1h-1zM964 895h1v1h-1zM964 918h1v1h-1zM964 942h1v1h-1zM964 988h1v1h-1zM999 58h1v1h-1zM999 81h1v1h-1zM999 104h1v1h-1zM999 128h1v1h-1zM999 151h1v1h-1zM999 174h1v1h-1zM999 197h1v1h-1zM999 220h1v1h-1zM999 244h1v1h-1zM999 292h1v1h-1zM999 315h1v1h-1zM999 338h1v1h-1zM999 362h1v1h-1zM999 385h1v1h-1zM999 408h1v1h-1zM999 454h1v1h-1zM999 478h1v1h-1zM999 501h1v1h-1zM999 526h1v1h-1zM999 549h1v1h-1zM999 572h1v1h-1zM999 596h1v1h-1zM999 619h1v1h-1zM999 642h1v1h-1zM999 665h1v1h-1zM999 688h1v1h-1zM999 712h1v1h-1zM999 779h1v1h-1zM999 802h1v1h-1zM999 826h1v1h-1zM999 849h1v1h-1zM999 872h1v1h-1zM999 895h1v1h-1zM999 918h1v1h-1zM999 942h1v1h-1zM999 988h1v1h-1zM1034 58h1v1h-1zM1034 81h1v1h-1zM1034 104h1v1h-1zM1034 128h1v1h-1zM1034 151h1v1h-1zM1034 174h1v1h-1zM1034 197h1v1h-1zM1034 220h1v1h-1zM1034 244h1v1h-1zM1034 292h1v1h-1zM1034 315h1v1h-1zM1034 338h1v1h-1zM1034 362h1v1h-1zM1034 385h1v1h-1zM1034 408h1v1h-1zM1034 454h1v1h-1zM1034 478h1v1h-1zM1034 501h1v1h-1zM1034 526h1v1h-1zM1034 549h1v1h-1zM1034 572h1v1h-1zM1034 596h1v1h-1zM1034 619h1v1h-1zM1034 642h1v1h-1zM1034 665h1v1h-1zM1034 688h1v1h-1zM1034 712h1v1h-1zM1034 779h1v1h-1zM1034 802h1v1h-1zM1034 826h1v1h-1zM1034 849h1v1h-1zM1034 872h1v1h-1zM1034 895h1v1h-1zM1034 918h1v1h-1zM1034 942h1v1h-1zM1034 988h1v1h-1zM1069 58h1v1h-1zM1069 81h1v1h-1zM1069 104h1v1h-1zM1069 128h1v1h-1zM1069 151h1v1h-1zM1069 174h1v1h-1zM1069 197h1v1h-1zM1069 220h1v1h-1zM1069 244h1v1h-1zM1069 292h1v1h-1zM1069 315h1v1h-1zM1069 338h1v1h-1zM1069 362h1v1h-1zM1069 385h1v1h-1zM1069 408h1v1h-1zM1069 454h1v1h-1zM1069 478h1v1h-1zM1069 501h1v1h-1zM1069 526h1v1h-1zM1069 549h1v1h-1zM1069 572h1v1h-1zM1069 596h1v1h-1zM1069 619h1v1h-1zM1069 642h1v1h-1zM1069 665h1v1h-1zM1069 688h1v1h-1zM1069 712h1v1h-1zM1069 779h1v1h-1zM1069 802h1v1h-1zM1069 826h1v1h-1zM1069 849h1v1h-1zM1069 872h1v1h-1zM1069 895h1v1h-1zM1069 918h1v1h-1zM1069 942h1v1h-1zM1069 988h1v1h-1zM1104 58h1v1h-1zM1104 63h1v1h-1zM1104 67h1v1h-1zM1104 72h1v1h-1zM1104 77h1v1h-1zM1104 81h1v1h-1zM1104 86h1v1h-1zM1104 90h1v1h-1zM1104 95h1v1h-1zM1104 100h1v1h-1zM1104 104h1v1h-1zM1104 109h1v1h-1zM1104 114h1v1h-1zM1104 118h1v1h-1zM1104 123h1v1h-1zM1104 128h1v1h-1zM1104 132h1v1h-1zM1104 137h1v1h-1zM1104 142h1v1h-1zM1104 146h1v1h-1zM1104 151h1v1h-1zM1104 155h1v1h-1zM1104 160h1v1h-1zM1104 165h1v1h-1zM1104 169h1v1h-1zM1104 174h1v1h-1zM1104 179h1v1h-1zM1104 183h1v1h-1zM1104 188h1v1h-1zM1104 193h1v1h-1zM1104 197h1v1h-1zM1104 202h1v1h-1zM1104 206h1v1h-1zM1104 211h1v1h-1zM1104 216h1v1h-1zM1104 220h1v1h-1zM1104 225h1v1h-1zM1104 230h1v1h-1zM1104 234h1v1h-1zM1104 239h1v1h-1zM1104 244h1v1h-1zM1104 248h1v1h-1zM1104 253h1v1h-1zM1104 258h1v1h-1zM1104 262h1v1h-1zM1104 267h1v1h-1zM1104 271h1v1h-1zM1104 276h1v1h-1zM1104 281h1v1h-1zM1104 285h1v1h-1zM1104 292h1v1h-1zM1104 297h1v1h-1zM1104 301h1v1h-1zM1104 306h1v1h-1zM1104 311h1v1h-1zM1104 315h1v1h-1zM1104 320h1v1h-1zM1104 324h1v1h-1zM1104 329h1v1h-1zM1104 334h1v1h-1zM1104 338h1v1h-1zM1104 343h1v1h-1zM1104 348h1v1h-1zM1104 352h1v1h-1zM1104 357h1v1h-1zM1104 362h1v1h-1zM1104 366h1v1h-1zM1104 371h1v1h-1zM1104 376h1v1h-1zM1104 380h1v1h-1zM1104 385h1v1h-1zM1104 389h1v1h-1zM1104 394h1v1h-1zM1104 399h1v1h-1zM1104 403h1v1h-1zM1104 408h1v1h-1zM1104 413h1v1h-1zM1104 417h1v1h-1zM1104 422h1v1h-1zM1104 427h1v1h-1zM1104 431h1v1h-1zM1104 436h1v1h-1zM1104 440h1v1h-1zM1104 445h1v1h-1zM1104 450h1v1h-1zM1104 454h1v1h-1zM1104 459h1v1h-1zM1104 464h1v1h-1zM1104 468h1v1h-1zM1104 473h1v1h-1zM1104 478h1v1h-1zM1104 482h1v1h-1zM1104 487h1v1h-1zM1104 492h1v1h-1zM1104 496h1v1h-1zM1104 501h1v1h-1zM1104 505h1v1h-1zM1104 510h1v1h-1zM1104 515h1v1h-1zM1104 519h1v1h-1zM1104 526h1v1h-1zM1104 531h1v1h-1zM1104 535h1v1h-1zM1104 540h1v1h-1zM1104 545h1v1h-1zM1104 549h1v1h-1zM1104 554h1v1h-1zM1104 558h1v1h-1zM1104 563h1v1h-1zM1104 568h1v1h-1zM1104 572h1v1h-1zM1104 577h1v1h-1zM1104 582h1v1h-1zM1104 586h1v1h-1zM1104 591h1v1h-1zM1104 596h1v1h-1zM1104 600h1v1h-1zM1104 605h1v1h-1zM1104 610h1v1h-1zM1104 614h1v1h-1zM1104 619h1v1h-1zM1104 623h1v1h-1zM1104 628h1v1h-1zM1104 633h1v1h-1zM1104 637h1v1h-1zM1104 642h1v1h-1zM1104 647h1v1h-1zM1104 651h1v1h-1zM1104 656h1v1h-1zM1104 661h1v1h-1zM1104 665h1v1h-1zM1104 670h1v1h-1zM1104 674h1v1h-1zM1104 679h1v1h-1zM1104 684h1v1h-1zM1104 688h1v1h-1zM1104 693h1v1h-1zM1104 698h1v1h-1zM1104 702h1v1h-1zM1104 707h1v1h-1zM1104 712h1v1h-1zM1104 716h1v1h-1zM1104 721h1v1h-1zM1104 726h1v1h-1zM1104 730h1v1h-1zM1104 735h1v1h-1zM1104 739h1v1h-1zM1104 744h1v1h-1zM1104 749h1v1h-1zM1104 753h1v1h-1zM1104 761h1v1h-1zM1104 765h1v1h-1zM1104 770h1v1h-1zM1104 775h1v1h-1zM1104 779h1v1h-1zM1104 784h1v1h-1zM1104 788h1v1h-1zM1104 793h1v1h-1zM1104 798h1v1h-1zM1104 802h1v1h-1zM1104 807h1v1h-1zM1104 812h1v1h-1zM1104 816h1v1h-1zM1104 821h1v1h-1zM1104 826h1v1h-1zM1104 830h1v1h-1zM1104 835h1v1h-1zM1104 840h1v1h-1zM1104 844h1v1h-1zM1104 849h1v1h-1zM1104 853h1v1h-1zM1104 858h1v1h-1zM1104 863h1v1h-1zM1104 867h1v1h-1zM1104 872h1v1h-1zM1104 877h1v1h-1zM1104 881h1v1h-1zM1104 886h1v1h-1zM1104 891h1v1h-1zM1104 895h1v1h-1zM1104 900h1v1h-1zM1104 904h1v1h-1zM1104 909h1v1h-1zM1104 914h1v1h-1zM1104 918h1v1h-1zM1104 923h1v1h-1zM1104 928h1v1h-1zM1104 932h1v1h-1zM1104 937h1v1h-1zM1104 942h1v1h-1zM1104 946h1v1h-1zM1104 951h1v1h-1zM1104 956h1v1h-1zM1104 960h1v1h-1zM1104 965h1v1h-1zM1104 969h1v1h-1zM1104 974h1v1h-1zM1104 979h1v1h-1zM1104 983h1v1h-1zM1104 988h1v1h-1zM1139 58h1v1h-1zM1139 81h1v1h-1zM1139 104h1v1h-1zM1139 128h1v1h-1zM1139 151h1v1h-1zM1139 174h1v1h-1zM1139 197h1v1h-1zM1139 220h1v1h-1zM1139 244h1v1h-1zM1139 292h1v1h-1zM1139 315h1v1h-1zM1139 338h1v1h-1zM1139 362h1v1h-1zM1139 385h1v1h-1zM1139 408h1v1h-1zM1139 454h1v1h-1zM1139 478h1v1h-1zM1139 501h1v1h-1zM1139 526h1v1h-1zM1139 549h1v1h-1zM1139 572h1v1h-1zM1139 596h1v1h-1zM1139 619h1v1h-1zM1139 642h1v1h-1zM1139 665h1v1h-1zM1139 688h1v1h-1zM1139 712h1v1h-1zM1139 779h1v1h-1zM1139 802h1v1h-1zM1139 826h1v1h-1zM1139 849h1v1h-1zM1139 872h1v1h-1zM1139 895h1v1h-1zM1139 918h1v1h-1zM1139 942h1v1h-1zM1139 988h1v1h-1zM1174 58h1v1h-1zM1174 81h1v1h-1zM1174 104h1v1h-1zM1174 128h1v1h-1zM1174 151h1v1h-1zM1174 174h1v1h-1zM1174 197h1v1h-1zM1174 220h1v1h-1zM1174 244h1v1h-1zM1174 292h1v1h-1zM1174 315h1v1h-1zM1174 338h1v1h-1zM1174 362h1v1h-1zM1174 385h1v1h-1zM1174 408h1v1h-1zM1174 454h1v1h-1zM1174 478h1v1h-1zM1174 501h1v1h-1zM1174 526h1v1h-1zM1174 549h1v1h-1zM1174 572h1v1h-1zM1174 596h1v1h-1zM1174 619h1v1h-1zM1174 642h1v1h-1zM1174 665h1v1h-1zM1174 688h1v1h-1zM1174 712h1v1h-1zM1174 779h1v1h-1zM1174 802h1v1h-1zM1174 826h1v1h-1zM1174 849h1v1h-1zM1174 872h1v1h-1zM1174 895h1v1h-1zM1174 918h1v1h-1zM1174 942h1v1h-1zM1174 988h1v1h-1zM1209 58h1v1h-1zM1209 81h1v1h-1zM1209 104h1v1h-1zM1209 128h1v1h-1zM1209 151h1v1h-1zM1209 174h1v1h-1zM1209 197h1v1h-1zM1209 220h1v1h-1zM1209 244h1v1h-1zM1209 292h1v1h-1zM1209 315h1v1h-1zM1209 338h1v1h-1zM1209 362h1v1h-1zM1209 385h1v1h-1zM1209 408h1v1h-1zM1209 454h1v1h-1zM1209 478h1v1h-1zM1209 501h1v1h-1zM1209 526h1v1h-1zM1209 549h1v1h-1zM1209 572h1v1h-1zM1209 596h1v1h-1zM1209 619h1v1h-1zM1209 642h1v1h-1zM1209 665h1v1h-1zM1209 688h1v1h-1zM1209 712h1v1h-1zM1209 779h1v1h-1zM1209 802h1v1h-1zM1209 826h1v1h-1zM1209 849h1v1h-1zM1209 872h1v1h-1zM1209 895h1v1h-1zM1209 918h1v1h-1zM1209 942h1v1h-1zM1209 988h1v1h-1zM1244 58h1v1h-1zM1244 81h1v1h-1zM1244 104h1v1h-1zM1244 128h1v1h-1zM1244 151h1v1h-1zM1244 174h1v1h-1zM1244 197h1v1h-1zM1244 220h1v1h-1zM1244 244h1v1h-1zM1244 292h1v1h-1zM1244 315h1v1h-1zM1244 338h1v1h-1zM1244 362h1v1h-1zM1244 385h1v1h-1zM1244 408h1v1h-1zM1244 454h1v1h-1zM1244 478h1v1h-1zM1244 501h1v1h-1zM1244 526h1v1h-1zM1244 549h1v1h-1zM1244 572h1v1h-1zM1244 596h1v1h-1zM1244 619h1v1h-1zM1244 642h1v1h-1zM1244 665h1v1h-1zM1244 688h1v1h-1zM1244 712h1v1h-1zM1244 779h1v1h-1zM1244 802h1v1h-1zM1244 826h1v1h-1zM1244 849h1v1h-1zM1244 872h1v1h-1zM1244 895h1v1h-1zM1244 918h1v1h-1zM1244 942h1v1h-1zM1244 988h1v1h-1zM1279 58h1v1h-1zM1279 63h1v1h-1zM1279 67h1v1h-1zM1279 72h1v1h-1zM1279 77h1v1h-1zM1279 81h1v1h-1zM1279 86h1v1h-1zM1279 90h1v1h-1zM1279 95h1v1h-1zM1279 100h1v1h-1zM1279 104h1v1h-1zM1279 109h1v1h-1zM1279 114h1v1h-1zM1279 118h1v1h-1zM1279 123h1v1h-1zM1279 128h1v1h-1zM1279 132h1v1h-1zM1279 137h1v1h-1zM1279 142h1v1h-1zM1279 146h1v1h-1zM1279 151h1v1h-1zM1279 155h1v1h-1zM1279 160h1v1h-1zM1279 165h1v1h-1zM1279 169h1v1h-1zM1279 174h1v1h-1zM1279 179h1v1h-1zM1279 183h1v1h-1zM1279 188h1v1h-1zM1279 193h1v1h-1zM1279 197h1v1h-1zM1279 202h1v1h-1zM1279 206h1v1h-1zM1279 211h1v1h-1zM1279 216h1v1h-1zM1279 220h1v1h-1zM1279 225h1v1h-1zM1279 230h1v1h-1zM1279 234h1v1h-1zM1279 239h1v1h-1zM1279 244h1v1h-1zM1279 248h1v1h-1zM1279 253h1v1h-1zM1279 258h1v1h-1zM1279 262h1v1h-1zM1279 267h1v1h-1zM1279 271h1v1h-1zM1279 276h1v1h-1zM1279 281h1v1h-1zM1279 285h1v1h-1zM1279 292h1v1h-1zM1279 297h1v1h-1zM1279 301h1v1h-1zM1279 306h1v1h-1zM1279 311h1v1h-1zM1279 315h1v1h-1zM1279 320h1v1h-1zM1279 324h1v1h-1zM1279 329h1v1h-1zM1279 334h1v1h-1zM1279 338h1v1h-1zM1279 343h1v1h-1zM1279 348h1v1h-1zM1279 352h1v1h-1zM1279 357h1v1h-1zM1279 362h1v1h-1zM1279 366h1v1h-1zM1279 371h1v1h-1zM1279 376h1v1h-1zM1279 380h1v1h-1zM1279 385h1v1h-1zM1279 389h1v1h-1zM1279 394h1v1h-1zM1279 399h1v1h-1zM1279 403h1v1h-1zM1279 408h1v1h-1zM1279 413h1v1h-1zM1279 417h1v1h-1zM1279 422h1v1h-1zM1279 427h1v1h-1zM1279 431h1v1h-1zM1279 436h1v1h-1zM1279 440h1v1h-1zM1279 445h1v1h-1zM1279 450h1v1h-1zM1279 454h1v1h-1zM1279 459h1v1h-1zM1279 464h1v1h-1zM1279 468h1v1h-1zM1279 473h1v1h-1zM1279 478h1v1h-1zM1279 482h1v1h-1zM1279 487h1v1h-1zM1279 492h1v1h-1zM1279 496h1v1h-1zM1279 501h1v1h-1zM1279 505h1v1h-1zM1279 510h1v1h-1zM1279 515h1v1h-1zM1279 519h1v1h-1zM1279 526h1v1h-1zM1279 531h1v1h-1zM1279 535h1v1h-1zM1279 540h1v1h-1zM1279 545h1v1h-1zM1279 549h1v1h-1zM1279 554h1v1h-1zM1279 558h1v1h-1zM1279 563h1v1h-1zM1279 568h1v1h-1zM1279 572h1v1h-1zM1279 577h1v1h-1zM1279 582h1v1h-1zM1279 586h1v1h-1zM1279 591h1v1h-1zM1279 596h1v1h-1zM1279 600h1v1h-1zM1279 605h1v1h-1zM1279 610h1v1h-1zM1279 614h1v1h-1zM1279 619h1v1h-1zM1279 623h1v1h-1zM1279 628h1v1h-1zM1279 633h1v1h-1zM1279 637h1v1h-1zM1279 642h1v1h-1zM1279 647h1v1h-1zM1279 651h1v1h-1zM1279 656h1v1h-1zM1279 661h1v1h-1zM1279 665h1v1h-1zM1279 670h1v1h-1zM1279 674h1v1h-1zM1279 679h1v1h-1zM1279 684h1v1h-1zM1279 688h1v1h-1zM1279 693h1v1h-1zM1279 698h1v1h-1zM1279 702h1v1h-1zM1279 707h1v1h-1zM1279 712h1v1h-1zM1279 716h1v1h-1zM1279 721h1v1h-1zM1279 726h1v1h-1zM1279 730h1v1h-1zM1279 735h1v1h-1zM1279 739h1v1h-1zM1279 744h1v1h-1zM1279 749h1v1h-1zM1279 753h1v1h-1zM1279 761h1v1h-1zM1279 765h1v1h-1zM1279 770h1v1h-1zM1279 775h1v1h-1zM1279 779h1v1h-1zM1279 784h1v1h-1zM1279 788h1v1h-1zM1279 793h1v1h-1zM1279 798h1v1h-1zM1279 802h1v1h-1zM1279 807h1v1h-1zM1279 812h1v1h-1zM1279 816h1v1h-1zM1279 821h1v1h-1zM1279 826h1v1h-1zM1279 830h1v1h-1zM1279 835h1v1h-1zM1279 840h1v1h-1zM1279 844h1v1h-1zM1279 849h1v1h-1zM1279 853h1v1h-1zM1279 858h1v1h-1zM1279 863h1v1h-1zM1279 867h1v1h-1zM1279 872h1v1h-1zM1279 877h1v1h-1zM1279 881h1v1h-1zM1279 886h1v1h-1zM1279 891h1v1h-1zM1279 895h1v1h-1zM1279 900h1v1h-1zM1279 904h1v1h-1zM1279 909h1v1h-1zM1279 914h1v1h-1zM1279 918h1v1h-1zM1279 923h1v1h-1zM1279 928h1v1h-1zM1279 932h1v1h-1zM1279 937h1v1h-1zM1279 942h1v1h-1zM1279 946h1v1h-1zM1279 951h1v1h-1zM1279 956h1v1h-1zM1279 960h1v1h-1zM1279 965h1v1h-1zM1279 969h1v1h-1zM1279 974h1v1h-1zM1279 979h1v1h-1zM1279 983h1v1h-1zM1279 988h1v1h-1zM1314 58h1v1h-1zM1314 81h1v1h-1zM1314 104h1v1h-1zM1314 128h1v1h-1zM1314 151h1v1h-1zM1314 174h1v1h-1zM1314 197h1v1h-1zM1314 220h1v1h-1zM1314 244h1v1h-1zM1314 292h1v1h-1zM1314 315h1v1h-1zM1314 338h1v1h-1zM1314 362h1v1h-1zM1314 385h1v1h-1zM1314 408h1v1h-1zM1314 454h1v1h-1zM1314 478h1v1h-1zM1314 501h1v1h-1zM1314 526h1v1h-1zM1314 549h1v1h-1zM1314 572h1v1h-1zM1314 596h1v1h-1zM1314 619h1v1h-1zM1314 642h1v1h-1zM1314 665h1v1h-1zM1314 688h1v1h-1zM1314 712h1v1h-1zM1314 779h1v1h-1zM1314 802h1v1h-1zM1314 826h1v1h-1zM1314 849h1v1h-1zM1314 872h1v1h-1zM1314 895h1v1h-1zM1314 918h1v1h-1zM1314 942h1v1h-1zM1314 988h1v1h-1zM1349 58h1v1h-1zM1349 81h1v1h-1zM1349 104h1v1h-1zM1349 128h1v1h-1zM1349 151h1v1h-1zM1349 174h1v1h-1zM1349 197h1v1h-1zM1349 220h1v1h-1zM1349 244h1v1h-1zM1349 292h1v1h-1zM1349 315h1v1h-1zM1349 338h1v1h-1zM1349 362h1v1h-1zM1349 385h1v1h-1zM1349 408h1v1h-1zM1349 454h1v1h-1zM1349 478h1v1h-1zM1349 501h1v1h-1zM1349 526h1v1h-1zM1349 549h1v1h-1zM1349 572h1v1h-1zM1349 596h1v1h-1zM1349 619h1v1h-1zM1349 642h1v1h-1zM1349 665h1v1h-1zM1349 688h1v1h-1zM1349 712h1v1h-1zM1349 779h1v1h-1zM1349 802h1v1h-1zM1349 826h1v1h-1zM1349 849h1v1h-1zM1349 872h1v1h-1zM1349 895h1v1h-1zM1349 918h1v1h-1zM1349 942h1v1h-1zM1349 988h1v1h-1zM1384 58h1v1h-1zM1384 81h1v1h-1zM1384 104h1v1h-1zM1384 128h1v1h-1zM1384 151h1v1h-1zM1384 174h1v1h-1zM1384 197h1v1h-1zM1384 220h1v1h-1zM1384 244h1v1h-1zM1384 292h1v1h-1zM1384 315h1v1h-1zM1384 338h1v1h-1zM1384 362h1v1h-1zM1384 385h1v1h-1zM1384 408h1v1h-1zM1384 454h1v1h-1zM1384 478h1v1h-1zM1384 501h1v1h-1zM1384 526h1v1h-1zM1384 549h1v1h-1zM1384 572h1v1h-1zM1384 596h1v1h-1zM1384 619h1v1h-1zM1384 642h1v1h-1zM1384 665h1v1h-1zM1384 688h1v1h-1zM1384 712h1v1h-1zM1384 779h1v1h-1zM1384 802h1v1h-1zM1384 826h1v1h-1zM1384 849h1v1h-1zM1384 872h1v1h-1zM1384 895h1v1h-1zM1384 918h1v1h-1zM1384 942h1v1h-1zM1384 988h1v1h-1zM1419 58h1v1h-1zM1419 81h1v1h-1zM1419 104h1v1h-1zM1419 128h1v1h-1zM1419 151h1v1h-1zM1419 174h1v1h-1zM1419 197h1v1h-1zM1419 220h1v1h-1zM1419 244h1v1h-1zM1419 292h1v1h-1zM1419 315h1v1h-1zM1419 338h1v1h-1zM1419 362h1v1h-1zM1419 385h1v1h-1zM1419 408h1v1h-1zM1419 454h1v1h-1zM1419 478h1v1h-1zM1419 501h1v1h-1zM1419 526h1v1h-1zM1419 549h1v1h-1zM1419 572h1v1h-1zM1419 596h1v1h-1zM1419 619h1v1h-1zM1419 642h1v1h-1zM1419 665h1v1h-1zM1419 688h1v1h-1zM1419 712h1v1h-1zM1419 779h1v1h-1zM1419 802h1v1h-1zM1419 826h1v1h-1zM1419 849h1v1h-1zM1419 872h1v1h-1zM1419 895h1v1h-1zM1419 918h1v1h-1zM1419 942h1v1h-1zM1419 988h1v1h-1zM1454 58h1v1h-1zM1454 63h1v1h-1zM1454 67h1v1h-1zM1454 72h1v1h-1zM1454 77h1v1h-1zM1454 81h1v1h-1zM1454 86h1v1h-1zM1454 90h1v1h-1zM1454 95h1v1h-1zM1454 100h1v1h-1zM1454 104h1v1h-1zM1454 109h1v1h-1zM1454 114h1v1h-1zM1454 118h1v1h-1zM1454 123h1v1h-1zM1454 128h1v1h-1zM1454 132h1v1h-1zM1454 137h1v1h-1zM1454 142h1v1h-1zM1454 146h1v1h-1zM1454 151h1v1h-1zM1454 155h1v1h-1zM1454 160h1v1h-1zM1454 165h1v1h-1zM1454 169h1v1h-1zM1454 174h1v1h-1zM1454 179h1v1h-1zM1454 183h1v1h-1zM1454 188h1v1h-1zM1454 193h1v1h-1zM1454 197h1v1h-1zM1454 202h1v1h-1zM1454 206h1v1h-1zM1454 211h1v1h-1zM1454 216h1v1h-1zM1454 220h1v1h-1zM1454 225h1v1h-1zM1454 230h1v1h-1zM1454 234h1v1h-1zM1454 239h1v1h-1zM1454 244h1v1h-1zM1454 248h1v1h-1zM1454 253h1v1h-1zM1454 258h1v1h-1zM1454 262h1v1h-1zM1454 267h1v1h-1zM1454 271h1v1h-1zM1454 276h1v1h-1zM1454 281h1v1h-1zM1454 285h1v1h-1zM1454 292h1v1h-1zM1454 297h1v1h-1zM1454 301h1v1h-1zM1454 306h1v1h-1zM1454 311h1v1h-1zM1454 315h1v1h-1zM1454 320h1v1h-1zM1454 324h1v1h-1zM1454 329h1v1h-1zM1454 334h1v1h-1zM1454 338h1v1h-1zM1454 343h1v1h-1zM1454 348h1v1h-1zM1454 352h1v1h-1zM1454 357h1v1h-1zM1454 362h1v1h-1zM1454 366h1v1h-1zM1454 371h1v1h-1zM1454 376h1v1h-1zM1454 380h1v1h-1zM1454 385h1v1h-1zM1454 389h1v1h-1zM1454 394h1v1h-1zM1454 399h1v1h-1zM1454 403h1v1h-1zM1454 408h1v1h-1zM1454 413h1v1h-1zM1454 417h1v1h-1zM1454 422h1v1h-1zM1454 427h1v1h-1zM1454 431h1v1h-1zM1454 436h1v1h-1zM1454 440h1v1h-1zM1454 445h1v1h-1zM1454 450h1v1h-1zM1454 454h1v1h-1zM1454 459h1v1h-1zM1454 464h1v1h-1zM1454 468h1v1h-1zM1454 473h1v1h-1zM1454 478h1v1h-1zM1454 482h1v1h-1zM1454 487h1v1h-1zM1454 492h1v1h-1zM1454 496h1v1h-1zM1454 501h1v1h-1zM1454 505h1v1h-1zM1454 510h1v1h-1zM1454 515h1v1h-1zM1454 519h1v1h-1zM1454 526h1v1h-1zM1454 531h1v1h-1zM1454 535h1v1h-1zM1454 540h1v1h-1zM1454 545h1v1h-1zM1454 549h1v1h-1zM1454 554h1v1h-1zM1454 558h1v1h-1zM1454 563h1v1h-1zM1454 568h1v1h-1zM1454 572h1v1h-1zM1454 577h1v1h-1zM1454 582h1v1h-1zM1454 586h1v1h-1zM1454 591h1v1h-1zM1454 596h1v1h-1zM1454 600h1v1h-1zM1454 605h1v1h-1zM1454 610h1v1h-1zM1454 614h1v1h-1zM1454 619h1v1h-1zM1454 623h1v1h-1zM1454 628h1v1h-1zM1454 633h1v1h-1zM1454 637h1v1h-1zM1454 642h1v1h-1zM1454 647h1v1h-1zM1454 651h1v1h-1zM1454 656h1v1h-1zM1454 661h1v1h-1zM1454 665h1v1h-1zM1454 670h1v1h-1zM1454 674h1v1h-1zM1454 679h1v1h-1zM1454 684h1v1h-1zM1454 688h1v1h-1zM1454 693h1v1h-1zM1454 698h1v1h-1zM1454 702h1v1h-1zM1454 707h1v1h-1zM1454 712h1v1h-1zM1454 716h1v1h-1zM1454 721h1v1h-1zM1454 726h1v1h-1zM1454 730h1v1h-1zM1454 735h1v1h-1zM1454 739h1v1h-1zM1454 744h1v1h-1zM1454 749h1v1h-1zM1454 753h1v1h-1zM1454 761h1v1h-1zM1454 765h1v1h-1zM1454 770h1v1h-1zM1454 775h1v1h-1zM1454 779h1v1h-1zM1454 784h1v1h-1zM1454 788h1v1h-1zM1454 793h1v1h-1zM1454 798h1v1h-1zM1454 802h1v1h-1zM1454 807h1v1h-1zM1454 812h1v1h-1zM1454 816h1v1h-1zM1454 821h1v1h-1zM1454 826h1v1h-1zM1454 830h1v1h-1zM1454 835h1v1h-1zM1454 840h1v1h-1zM1454 844h1v1h-1zM1454 849h1v1h-1zM1454 853h1v1h-1zM1454 858h1v1h-1zM1454 863h1v1h-1zM1454 867h1v1h-1zM1454 872h1v1h-1zM1454 877h1v1h-1zM1454 881h1v1h-1zM1454 886h1v1h-1zM1454 891h1v1h-1zM1454 895h1v1h-1zM1454 900h1v1h-1zM1454 904h1v1h-1zM1454 909h1v1h-1zM1454 914h1v1h-1zM1454 918h1v1h-1zM1454 923h1v1h-1zM1454 928h1v1h-1zM1454 932h1v1h-1zM1454 937h1v1h-1zM1454 942h1v1h-1zM1454 946h1v1h-1zM1454 951h1v1h-1zM1454 956h1v1h-1zM1454 960h1v1h-1zM1454 965h1v1h-1zM1454 969h1v1h-1zM1454 974h1v1h-1zM1454 979h1v1h-1zM1454 983h1v1h-1zM1454 988h1v1h-1zM1489 58h1v1h-1zM1489 81h1v1h-1zM1489 104h1v1h-1zM1489 128h1v1h-1zM1489 151h1v1h-1zM1489 174h1v1h-1zM1489 197h1v1h-1zM1489 220h1v1h-1zM1489 244h1v1h-1zM1489 292h1v1h-1zM1489 315h1v1h-1zM1489 338h1v1h-1zM1489 362h1v1h-1zM1489 385h1v1h-1zM1489 408h1v1h-1zM1489 454h1v1h-1zM1489 478h1v1h-1zM1489 501h1v1h-1zM1489 526h1v1h-1zM1489 549h1v1h-1zM1489 572h1v1h-1zM1489 596h1v1h-1zM1489 619h1v1h-1zM1489 642h1v1h-1zM1489 665h1v1h-1zM1489 688h1v1h-1zM1489 712h1v1h-1zM1489 779h1v1h-1zM1489 802h1v1h-1zM1489 826h1v1h-1zM1489 849h1v1h-1zM1489 872h1v1h-1zM1489 895h1v1h-1zM1489 918h1v1h-1zM1489 942h1v1h-1zM1489 988h1v1h-1zM1524 58h1v1h-1zM1524 81h1v1h-1zM1524 104h1v1h-1zM1524 128h1v1h-1zM1524 151h1v1h-1zM1524 174h1v1h-1zM1524 197h1v1h-1zM1524 220h1v1h-1zM1524 244h1v1h-1zM1524 292h1v1h-1zM1524 315h1v1h-1zM1524 338h1v1h-1zM1524 362h1v1h-1zM1524 385h1v1h-1zM1524 408h1v1h-1zM1524 454h1v1h-1zM1524 478h1v1h-1zM1524 501h1v1h-1zM1524 526h1v1h-1zM1524 549h1v1h-1zM1524 572h1v1h-1zM1524 596h1v1h-1zM1524 619h1v1h-1zM1524 642h1v1h-1zM1524 665h1v1h-1zM1524 688h1v1h-1zM1524 712h1v1h-1zM1524 779h1v1h-1zM1524 802h1v1h-1zM1524 826h1v1h-1zM1524 849h1v1h-1zM1524 872h1v1h-1zM1524 895h1v1h-1zM1524 918h1v1h-1zM1524 942h1v1h-1zM1524 988h1v1h-1zM1559 58h1v1h-1zM1559 81h1v1h-1zM1559 104h1v1h-1zM1559 128h1v1h-1zM1559 151h1v1h-1zM1559 174h1v1h-1zM1559 197h1v1h-1zM1559 220h1v1h-1zM1559 244h1v1h-1zM1559 292h1v1h-1zM1559 315h1v1h-1zM1559 338h1v1h-1zM1559 362h1v1h-1zM1559 385h1v1h-1zM1559 408h1v1h-1zM1559 454h1v1h-1zM1559 478h1v1h-1zM1559 501h1v1h-1zM1559 526h1v1h-1zM1559 549h1v1h-1zM1559 572h1v1h-1zM1559 596h1v1h-1zM1559 619h1v1h-1zM1559 642h1v1h-1zM1559 665h1v1h-1zM1559 688h1v1h-1zM1559 712h1v1h-1zM1559 779h1v1h-1zM1559 802h1v1h-1zM1559 826h1v1h-1zM1559 849h1v1h-1zM1559 872h1v1h-1zM1559 895h1v1h-1zM1559 918h1v1h-1zM1559 942h1v1h-1zM1559 988h1v1h-1zM1594 58h1v1h-1zM1594 81h1v1h-1zM1594 104h1v1h-1zM1594 128h1v1h-1zM1594 151h1v1h-1zM1594 174h1v1h-1zM1594 197h1v1h-1zM1594 220h1v1h-1zM1594 244h1v1h-1zM1594 292h1v1h-1zM1594 315h1v1h-1zM1594 338h1v1h-1zM1594 362h1v1h-1zM1594 385h1v1h-1zM1594 408h1v1h-1zM1594 454h1v1h-1zM1594 478h1v1h-1zM1594 501h1v1h-1zM1594 526h1v1h-1zM1594 549h1v1h-1zM1594 572h1v1h-1zM1594 596h1v1h-1zM1594 619h1v1h-1zM1594 642h1v1h-1zM1594 665h1v1h-1zM1594 688h1v1h-1zM1594 712h1v1h-1zM1594 779h1v1h-1zM1594 802h1v1h-1zM1594 826h1v1h-1zM1594 849h1v1h-1zM1594 872h1v1h-1zM1594 895h1v1h-1zM1594 918h1v1h-1zM1594 942h1v1h-1zM1594 988h1v1h-1zM1629 58h1v1h-1zM1629 63h1v1h-1zM1629 67h1v1h-1zM1629 72h1v1h-1zM1629 77h1v1h-1zM1629 81h1v1h-1zM1629 86h1v1h-1zM1629 90h1v1h-1zM1629 95h1v1h-1zM1629 100h1v1h-1zM1629 104h1v1h-1zM1629 109h1v1h-1zM1629 114h1v1h-1zM1629 118h1v1h-1zM1629 123h1v1h-1zM1629 128h1v1h-1zM1629 132h1v1h-1zM1629 137h1v1h-1zM1629 142h1v1h-1zM1629 146h1v1h-1zM1629 151h1v1h-1zM1629 155h1v1h-1zM1629 160h1v1h-1zM1629 165h1v1h-1zM1629 169h1v1h-1zM1629 174h1v1h-1zM1629 179h1v1h-1zM1629 183h1v1h-1zM1629 188h1v1h-1zM1629 193h1v1h-1zM1629 197h1v1h-1zM1629 202h1v1h-1zM1629 206h1v1h-1zM1629 211h1v1h-1zM1629 216h1v1h-1zM1629 220h1v1h-1zM1629 225h1v1h-1zM1629 230h1v1h-1zM1629 234h1v1h-1zM1629 239h1v1h-1zM1629 244h1v1h-1zM1629 248h1v1h-1zM1629 253h1v1h-1zM1629 258h1v1h-1zM1629 262h1v1h-1zM1629 267h1v1h-1zM1629 271h1v1h-1zM1629 276h1v1h-1zM1629 281h1v1h-1zM1629 285h1v1h-1zM1629 292h1v1h-1zM1629 297h1v1h-1zM1629 301h1v1h-1zM1629 306h1v1h-1zM1629 311h1v1h-1zM1629 315h1v1h-1zM1629 320h1v1h-1zM1629 324h1v1h-1zM1629 329h1v1h-1zM1629 334h1v1h-1zM1629 338h1v1h-1zM1629 343h1v1h-1zM1629 348h1v1h-1zM1629 352h1v1h-1zM1629 357h1v1h-1zM1629 362h1v1h-1zM1629 366h1v1h-1zM1629 371h1v1h-1zM1629 376h1v1h-1zM1629 380h1v1h-1zM1629 385h1v1h-1zM1629 389h1v1h-1zM1629 394h1v1h-1zM1629 399h1v1h-1zM1629 403h1v1h-1zM1629 408h1v1h-1zM1629 413h1v1h-1zM1629 417h1v1h-1zM1629 422h1v1h-1zM1629 427h1v1h-1zM1629 431h1v1h-1zM1629 436h1v1h-1zM1629 440h1v1h-1zM1629 445h1v1h-1zM1629 450h1v1h-1zM1629 454h1v1h-1zM1629 459h1v1h-1zM1629 464h1v1h-1zM1629 468h1v1h-1zM1629 473h1v1h-1zM1629 478h1v1h-1zM1629 482h1v1h-1zM1629 487h1v1h-1zM1629 492h1v1h-1zM1629 496h1v1h-1zM1629 501h1v1h-1zM1629 505h1v1h-1zM1629 510h1v1h-1zM1629 515h1v1h-1zM1629 519h1v1h-1zM1629 526h1v1h-1zM1629 531h1v1h-1zM1629 535h1v1h-1zM1629 540h1v1h-1zM1629 545h1v1h-1zM1629 549h1v1h-1zM1629 554h1v1h-1zM1629 558h1v1h-1zM1629 563h1v1h-1zM1629 568h1v1h-1zM1629 572h1v1h-1zM1629 577h1v1h-1zM1629 582h1v1h-1zM1629 586h1v1h-1zM1629 591h1v1h-1zM1629 596h1v1h-1zM1629 600h1v1h-1zM1629 605h1v1h-1zM1629 610h1v1h-1zM1629 614h1v1h-1zM1629 619h1v1h-1zM1629 623h1v1h-1zM1629 628h1v1h-1zM1629 633h1v1h-1zM1629 637h1v1h-1zM1629 642h1v1h-1zM1629 647h1v1h-1zM1629 651h1v1h-1zM1629 656h1v1h-1zM1629 661h1v1h-1zM1629 665h1v1h-1zM1629 670h1v1h-1zM1629 674h1v1h-1zM1629 679h1v1h-1zM1629 684h1v1h-1zM1629 688h1v1h-1zM1629 693h1v1h-1zM1629 698h1v1h-1zM1629 702h1v1h-1zM1629 707h1v1h-1zM1629 712h1v1h-1zM1629 716h1v1h-1zM1629 721h1v1h-1zM1629 726h1v1h-1zM1629 730h1v1h-1zM1629 735h1v1h-1zM1629 739h1v1h-1zM1629 744h1v1h-1zM1629 749h1v1h-1zM1629 753h1v1h-1zM1629 761h1v1h-1zM1629 765h1v1h-1zM1629 770h1v1h-1zM1629 775h1v1h-1zM1629 779h1v1h-1zM1629 784h1v1h-1zM1629 788h1v1h-1zM1629 793h1v1h-1zM1629 798h1v1h-1zM1629 802h1v1h-1zM1629 807h1v1h-1zM1629 812h1v1h-1zM1629 816h1v1h-1zM1629 821h1v1h-1zM1629 826h1v1h-1zM1629 830h1v1h-1zM1629 835h1v1h-1zM1629 840h1v1h-1zM1629 844h1v1h-1zM1629 849h1v1h-1zM1629 853h1v1h-1zM1629 858h1v1h-1zM1629 863h1v1h-1zM1629 867h1v1h-1zM1629 872h1v1h-1zM1629 877h1v1h-1zM1629 881h1v1h-1zM1629 886h1v1h-1zM1629 891h1v1h-1zM1629 895h1v1h-1zM1629 900h1v1h-1zM1629 904h1v1h-1zM1629 909h1v1h-1zM1629 914h1v1h-1zM1629 918h1v1h-1zM1629 923h1v1h-1zM1629 928h1v1h-1zM1629 932h1v1h-1zM1629 937h1v1h-1zM1629 942h1v1h-1zM1629 946h1v1h-1zM1629 951h1v1h-1zM1629 956h1v1h-1zM1629 960h1v1h-1zM1629 965h1v1h-1zM1629 969h1v1h-1zM1629 974h1v1h-1zM1629 979h1v1h-1zM1629 983h1v1h-1zM1629 988h1v1h-1zM1664 58h1v1h-1zM1664 81h1v1h-1zM1664 104h1v1h-1zM1664 128h1v1h-1zM1664 151h1v1h-1zM1664 174h1v1h-1zM1664 197h1v1h-1zM1664 220h1v1h-1zM1664 244h1v1h-1zM1664 292h1v1h-1zM1664 315h1v1h-1zM1664 338h1v1h-1zM1664 362h1v1h-1zM1664 385h1v1h-1zM1664 408h1v1h-1zM1664 454h1v1h-1zM1664 478h1v1h-1zM1664 501h1v1h-1zM1664 526h1v1h-1zM1664 549h1v1h-1zM1664 572h1v1h-1zM1664 596h1v1h-1zM1664 619h1v1h-1zM1664 642h1v1h-1zM1664 665h1v1h-1zM1664 688h1v1h-1zM1664 712h1v1h-1zM1664 779h1v1h-1zM1664 802h1v1h-1zM1664 826h1v1h-1zM1664 849h1v1h-1zM1664 872h1v1h-1zM1664 895h1v1h-1zM1664 918h1v1h-1zM1664 942h1v1h-1zM1664 988h1v1h-1zM1699 58h1v1h-1zM1699 81h1v1h-1zM1699 104h1v1h-1zM1699 128h1v1h-1zM1699 151h1v1h-1zM1699 174h1v1h-1zM1699 197h1v1h-1zM1699 220h1v1h-1zM1699 244h1v1h-1zM1699 292h1v1h-1zM1699 315h1v1h-1zM1699 338h1v1h-1zM1699 362h1v1h-1zM1699 385h1v1h-1zM1699 408h1v1h-1zM1699 454h1v1h-1zM1699 478h1v1h-1zM1699 501h1v1h-1zM1699 526h1v1h-1zM1699 549h1v1h-1zM1699 572h1v1h-1zM1699 596h1v1h-1zM1699 619h1v1h-1zM1699 642h1v1h-1zM1699 665h1v1h-1zM1699 688h1v1h-1zM1699 712h1v1h-1zM1699 779h1v1h-1zM1699 802h1v1h-1zM1699 826h1v1h-1zM1699 849h1v1h-1zM1699 872h1v1h-1zM1699 895h1v1h-1zM1699 918h1v1h-1zM1699 942h1v1h-1zM1699 988h1v1h-1zM1734 58h1v1h-1zM1734 81h1v1h-1zM1734 104h1v1h-1zM1734 128h1v1h-1zM1734 151h1v1h-1zM1734 174h1v1h-1zM1734 197h1v1h-1zM1734 220h1v1h-1zM1734 244h1v1h-1zM1734 292h1v1h-1zM1734 315h1v1h-1zM1734 338h1v1h-1zM1734 362h1v1h-1zM1734 385h1v1h-1zM1734 408h1v1h-1zM1734 454h1v1h-1zM1734 478h1v1h-1zM1734 501h1v1h-1zM1734 526h1v1h-1zM1734 549h1v1h-1zM1734 572h1v1h-1zM1734 596h1v1h-1zM1734 619h1v1h-1zM1734 642h1v1h-1zM1734 665h1v1h-1zM1734 688h1v1h-1zM1734 712h1v1h-1zM1734 779h1v1h-1zM1734 802h1v1h-1zM1734 826h1v1h-1zM1734 849h1v1h-1zM1734 872h1v1h-1zM1734 895h1v1h-1zM1734 918h1v1h-1zM1734 942h1v1h-1zM1734 988h1v1h-1z" fill="#b4b4b4"/>
<rect x="3" y="290" width="1748" height="2" fill="#7c7c7c"/>
<rect x="3" y="524" width="1748" height="2" fill="#7c7c7c"/>
<rect x="3" y="758" width="1748" height="2" fill="#7c7c7c"/>
</g>
<rect x="1717" y="75" width="32" height="14" fill="#000000"/>
<rect x="1717" y="98" width="32" height="14" fill="#000000"/>
<rect x="1717" y="121" width="32" height="14" fill="#000000"/>
<rect x="1717" y="144" width="32" height="14" fill="#000000"/>
<rect x="1717" y="168" width="32" height="14" fill="#000000"/>
<rect x="1717" y="191" width="32" height="14" fill="#000000"/>
<rect x="1717" y="214" width="32" height="14" fill="#000000"/>
<rect x="1724" y="237" width="24" height="14" fill="#000000"/>
<rect x="1724" y="260" width="24" height="14" fill="#000000"/>
<rect x="1724" y="309" width="24" height="14" fill="#000000"/>
<rect x="1698" y="332" width="51" height="14" fill="#000000"/>
<rect x="1698" y="355" width="51" height="14" fill="#000000"/>
<rect x="1698" y="378" width="51" height="14" fill="#000000"/>
<rect x="1698" y="402" width="51" height="14" fill="#000000"/>
<rect x="1724" y="425" width="24" height="14" fill="#000000"/>
<rect x="1693" y="448" width="55" height="14" fill="#000000"/>
<rect x="1693" y="471" width="55" height="14" fill="#000000"/>
<rect x="1693" y="494" width="55" height="14" fill="#000000"/>
<rect x="1672" y="543" width="76" height="14" fill="#000000"/>
<rect x="1672" y="566" width="76" height="14" fill="#000000"/>
<rect x="1672" y="589" width="76" height="14" fill="#000000"/>
<rect x="1672" y="612" width="76" height="14" fill="#000000"/>
<rect x="1672" y="636" width="76" height="14" fill="#000000"/>
<rect x="1672" y="659" width="76" height="14" fill="#000000"/>
<rect x="1672" y="682" width="76" height="14" fill="#000000"/>
<rect x="1680" y="705" width="69" height="14" fill="#000000"/>
<rect x="1725" y="728" width="23" height="14" fill="#000000"/>
<rect x="1684" y="773" width="65" height="14" fill="#000000"/>
<rect x="1691" y="796" width="57" height="14" fill="#000000"/>
<rect x="1691" y="819" width="57" height="14" fill="#000000"/>
<rect x="1691" y="842" width="57" height="14" fill="#000000"/>
<rect x="1691" y="866" width="57" height="14" fill="#000000"/>
<rect x="1691" y="889" width="57" height="14" fill="#000000"/>
<rect x="1691" y="912" width="57" height="14" fill="#000000"/>
<rect x="1691" y="935" width="57" height="14" fill="#000000"/>
<rect x="1724" y="958" width="24" height="14" fill="#000000"/>
<path d="M55 95h1v5h-1zM55 105h1v5h-1zM55 115h1v5h-1zM55 125h1v5h-1zM55 135h1v5h-1zM55 145h1v5h-1zM55 155h1v5h-1zM55 165h1v5h-1zM55 175h1v5h-1zM55 185h1v5h-1zM55 195h1v5h-1zM55 205h1v5h-1zM55 215h1v5h-1zM55 225h1v5h-1zM55 235h1v5h-1zM55 245h1v5h-1zM55 255h1v5h-1zM55 265h1v5h-1zM55 275h1v5h-1zM55 285h1v5h-1zM55 292h1v2h-1zM55 299h1v5h-1zM55 309h1v5h-1zM55 319h1v5h-1zM55 329h1v5h-1zM55 339h1v5h-1zM55 349h1v5h-1zM55 359h1v5h-1zM55 369h1v5h-1zM55 379h1v5h-1zM55 389h1v5h-1zM55 399h1v5h-1zM55 409h1v5h-1zM55 419h1v5h-1zM55 429h1v5h-1zM55 439h1v5h-1zM55 449h1v5h-1zM55 459h1v5h-1zM55 469h1v5h-1zM55 479h1v5h-1zM55 489h1v5h-1zM55 499h1v5h-1zM55 509h1v5h-1zM55 519h1v5h-1zM55 526h1v2h-1zM55 533h1v5h-1zM55 543h1v5h-1zM55 553h1v5h-1zM55 563h1v5h-1zM55 573h1v5h-1zM55 583h1v5h-1zM55 593h1v5h-1zM55 603h1v5h-1zM55 613h1v5h-1zM55 623h1v5h-1zM55 633h1v5h-1zM55 643h1v5h-1zM55 653h1v5h-1zM55 663h1v5h-1zM55 673h1v5h-1zM55 683h1v5h-1zM55 693h1v5h-1zM55 703h1v5h-1zM55 713h1v5h-1zM55 723h1v5h-1zM55 733h1v5h-1zM55 743h1v5h-1zM55 753h1v5h-1zM55 763h1v5h-1zM55 773h1v5h-1zM55 783h1v5h-1zM55 793h1v5h-1zM55 803h1v5h-1zM55 813h1v5h-1zM55 823h1v5h-1zM55 833h1v5h-1zM55 843h1v5h-1zM55 853h1v5h-1zM55 863h1v5h-1zM55 873h1v5h-1zM55 883h1v5h-1zM55 893h1v5h-1zM55 903h1v5h-1zM55 913h1v5h-1zM55 923h1v5h-1zM55 933h1v5h-1zM55 943h1v5h-1zM55 953h1v5h-1zM55 963h1v5h-1zM55 973h1v5h-1zM55 983h1v5h-1z" fill="#d0d0d0" shape-rendering="crispEdges"/>
<path d="M3 267.5H1719" stroke="#d0d0d0" stroke-width="1" stroke-dasharray="5 5" fill="none" shape-rendering="crispEdges"/>
<path d="M3 431.5H1719" stroke="#d0d0d0" stroke-width="1" stroke-dasharray="5 5" fill="none" shape-rendering="crispEdges"/>
<path d="M3 735.5H1719" stroke="#d0d0d0" stroke-width="1" stroke-dasharray="5 5" fill="none" shape-rendering="crispEdges"/>
<path d="M3 965.5H1718" stroke="#d0d0d0" stroke-width="1" stroke-dasharray="5 5" fill="none" shape-rendering="crispEdges"/>
<text x="1745.8" y="86.0" font-size="11.8" fill="#f3e62c" font-family='"DejaVu Sans", "Liberation Sans", sans-serif' text-anchor="end">4  V</text>
<text x="1745.8" y="109.2" font-size="11.8" fill="#f3e62c" font-family='"DejaVu Sans", "Liberation Sans", sans-serif' text-anchor="end">35 V</text>
<text x="1745.8" y="132.4" font-size="11.8" fill="#f3e62c" font-family='"DejaVu Sans", "Liberation Sans", sans-serif' text-anchor="end">30 V</text>
<text x="1745.8" y="155.6" font-size="11.8" fill="#f3e62c" font-family='"DejaVu Sans", "Liberation Sans", sans-serif' text-anchor="end">25 V</text>
<text x="1745.8" y="178.8" font-size="11.8" fill="#f3e62c" font-family='"DejaVu Sans", "Liberation Sans", sans-serif' text-anchor="end">20 V</text>
<text x="1745.8" y="202.0" font-size="11.8" fill="#f3e62c" font-family='"DejaVu Sans", "Liberation Sans", sans-serif' text-anchor="end">15 V</text>
<text x="1745.8" y="225.2" font-size="11.8" fill="#f3e62c" font-family='"DejaVu Sans", "Liberation Sans", sans-serif' text-anchor="end">10 V</text>
<text x="1745.8" y="248.4" font-size="11.8" fill="#f3e62c" font-family='"DejaVu Sans", "Liberation Sans", sans-serif' text-anchor="end">5 V</text>
<text x="1745.8" y="271.6" font-size="11.8" fill="#f3e62c" font-family='"DejaVu Sans", "Liberation Sans", sans-serif' text-anchor="end">0 V</text>
<text x="1745.8" y="320.0" font-size="11.8" fill="#8fc62e" font-family='"DejaVu Sans", "Liberation Sans", sans-serif' text-anchor="end">1 V</text>
<text x="1745.8" y="343.2" font-size="11.8" fill="#8fc62e" font-family='"DejaVu Sans", "Liberation Sans", sans-serif' text-anchor="end">800 mV</text>
<text x="1745.8" y="366.4" font-size="11.8" fill="#8fc62e" font-family='"DejaVu Sans", "Liberation Sans", sans-serif' text-anchor="end">600 mV</text>
<text x="1745.8" y="389.6" font-size="11.8" fill="#8fc62e" font-family='"DejaVu Sans", "Liberation Sans", sans-serif' text-anchor="end">400 mV</text>
<text x="1745.8" y="412.8" font-size="11.8" fill="#8fc62e" font-family='"DejaVu Sans", "Liberation Sans", sans-serif' text-anchor="end">200 mV</text>
<text x="1745.8" y="436.0" font-size="11.8" fill="#8fc62e" font-family='"DejaVu Sans", "Liberation Sans", sans-serif' text-anchor="end">0 V</text>
<text x="1745.8" y="459.2" font-size="11.8" fill="#8fc62e" font-family='"DejaVu Sans", "Liberation Sans", sans-serif' text-anchor="end">-200 mV</text>
<text x="1745.8" y="482.4" font-size="11.8" fill="#8fc62e" font-family='"DejaVu Sans", "Liberation Sans", sans-serif' text-anchor="end">-400 mV</text>
<text x="1745.8" y="505.6" font-size="11.8" fill="#8fc62e" font-family='"DejaVu Sans", "Liberation Sans", sans-serif' text-anchor="end">-600 mV</text>
<text x="1745.8" y="554.0" font-size="11.8" fill="#e8912a" font-family='"DejaVu Sans", "Liberation Sans", sans-serif' text-anchor="end">591.658 mT</text>
<text x="1745.8" y="577.2" font-size="11.8" fill="#e8912a" font-family='"DejaVu Sans", "Liberation Sans", sans-serif' text-anchor="end">517.700 mT</text>
<text x="1745.8" y="600.4" font-size="11.8" fill="#e8912a" font-family='"DejaVu Sans", "Liberation Sans", sans-serif' text-anchor="end">443.743 mT</text>
<text x="1745.8" y="623.6" font-size="11.8" fill="#e8912a" font-family='"DejaVu Sans", "Liberation Sans", sans-serif' text-anchor="end">369.786 mT</text>
<text x="1745.8" y="646.8" font-size="11.8" fill="#e8912a" font-family='"DejaVu Sans", "Liberation Sans", sans-serif' text-anchor="end">295.829 mT</text>
<text x="1745.8" y="670.0" font-size="11.8" fill="#e8912a" font-family='"DejaVu Sans", "Liberation Sans", sans-serif' text-anchor="end">221.872 mT</text>
<text x="1745.8" y="693.2" font-size="11.8" fill="#e8912a" font-family='"DejaVu Sans", "Liberation Sans", sans-serif' text-anchor="end">147.914 mT</text>
<text x="1745.8" y="716.4" font-size="11.8" fill="#e8912a" font-family='"DejaVu Sans", "Liberation Sans", sans-serif' text-anchor="end">73.957 mT</text>
<text x="1745.8" y="739.6" font-size="11.8" fill="#e8912a" font-family='"DejaVu Sans", "Liberation Sans", sans-serif' text-anchor="end">0 T</text>
<text x="1745.8" y="784.0" font-size="11.8" fill="#7d3399" font-family='"DejaVu Sans", "Liberation Sans", sans-serif' text-anchor="end">10.217 kA</text>
<text x="1745.8" y="807.2" font-size="11.8" fill="#7d3399" font-family='"DejaVu Sans", "Liberation Sans", sans-serif' text-anchor="end">8.940 kA</text>
<text x="1745.8" y="830.4" font-size="11.8" fill="#7d3399" font-family='"DejaVu Sans", "Liberation Sans", sans-serif' text-anchor="end">7.663 kA</text>
<text x="1745.8" y="853.6" font-size="11.8" fill="#7d3399" font-family='"DejaVu Sans", "Liberation Sans", sans-serif' text-anchor="end">6.386 kA</text>
<text x="1745.8" y="876.8" font-size="11.8" fill="#7d3399" font-family='"DejaVu Sans", "Liberation Sans", sans-serif' text-anchor="end">5.109 kA</text>
<text x="1745.8" y="900.0" font-size="11.8" fill="#7d3399" font-family='"DejaVu Sans", "Liberation Sans", sans-serif' text-anchor="end">3.831 kA</text>
<text x="1745.8" y="923.2" font-size="11.8" fill="#7d3399" font-family='"DejaVu Sans", "Liberation Sans", sans-serif' text-anchor="end">2.554 kA</text>
<text x="1745.8" y="946.4" font-size="11.8" fill="#7d3399" font-family='"DejaVu Sans", "Liberation Sans", sans-serif' text-anchor="end">1.277 kA</text>
<text x="1745.8" y="969.6" font-size="11.8" fill="#7d3399" font-family='"DejaVu Sans", "Liberation Sans", sans-serif' text-anchor="end">0 A</text>
<g clip-path="url(#grat)" fill="none" stroke-linejoin="round" shape-rendering="crispEdges">
<path d="M3.0 735.5 L5.0 735.5 L7.0 735.5 L9.0 735.5 L11.0 735.5 L13.0 735.5 L15.0 735.5 L17.0 735.5 L19.0 735.5 L21.0 735.5 L23.0 735.5 L25.0 735.5 L27.0 735.5 L29.0 735.5 L31.0 735.5 L33.0 735.5 L35.0 735.5 L37.0 735.5 L39.0 735.5 L41.0 735.5 L43.0 735.5 L45.0 735.5 L47.0 735.5 L49.0 735.5 L51.0 735.5 L53.0 735.5 L55.0 735.5 L57.1 734.7 L59.1 734.0 L61.2 733.2 L63.2 732.5 L65.3 731.7 L67.4 731.0 L69.4 730.2 L71.5 729.5 L73.5 728.7 L75.6 728.0 L77.6 727.2 L79.7 726.5 L81.8 725.7 L83.8 725.0 L85.9 724.2 L87.9 723.5 L90.0 722.7 L92.1 722.0 L94.1 721.4 L96.2 720.7 L98.2 720.0 L100.3 719.3 L102.4 718.7 L104.4 718.0 L106.5 717.3 L108.5 716.7 L110.6 716.0 L112.6 715.3 L114.7 714.7 L116.8 714.0 L118.8 713.3 L120.9 712.6 L122.9 712.0 L125.0 711.3 L127.1 710.7 L129.1 710.1 L131.2 709.4 L133.2 708.8 L135.3 708.2 L137.4 707.6 L139.4 706.9 L141.5 706.3 L143.5 705.7 L145.6 705.1 L147.6 704.4 L149.7 703.8 L151.8 703.2 L153.8 702.6 L155.9 701.9 L157.9 701.3 L160.0 700.7 L162.1 700.1 L164.1 699.4 L166.2 698.8 L168.2 698.2 L170.3 697.6 L172.4 696.9 L174.4 696.3 L176.5 695.7 L178.5 695.0 L180.6 694.4 L182.6 693.8 L184.7 693.1 L186.8 692.5 L188.8 691.9 L190.9 691.3 L192.9 690.6 L195.0 690.0 L197.1 689.4 L199.1 688.8 L201.2 688.2 L203.2 687.6 L205.3 687.1 L207.4 686.5 L209.4 685.9 L211.5 685.3 L213.5 684.7 L215.6 684.1 L217.6 683.5 L219.7 682.9 L221.8 682.4 L223.8 681.8 L225.9 681.2 L227.9 680.6 L230.0 680.0 L232.1 679.4 L234.1 678.8 L236.2 678.2 L238.2 677.6 L240.3 677.1 L242.4 676.5 L244.4 675.9 L246.5 675.3 L248.5 674.7 L250.6 674.1 L252.6 673.5 L254.7 672.9 L256.8 672.4 L258.8 671.8 L260.9 671.2 L262.9 670.6 L265.0 670.0 L267.1 669.5 L269.1 668.9 L271.2 668.4 L273.2 667.8 L275.3 667.3 L277.4 666.7 L279.4 666.2 L281.5 665.6 L283.5 665.1 L285.6 664.5 L287.6 664.0 L289.7 663.4 L291.8 662.9 L293.8 662.3 L295.9 661.8 L297.9 661.2 L300.0 660.7 L302.1 660.2 L304.1 659.6 L306.2 659.1 L308.2 658.6 L310.3 658.1 L312.4 657.5 L314.4 657.0 L316.5 656.5 L318.5 655.9 L320.6 655.4 L322.6 654.9 L324.7 654.3 L326.8 653.8 L328.8 653.3 L330.9 652.8 L332.9 652.2 L335.0 651.7 L337.1 651.2 L339.1 650.6 L341.2 650.1 L343.2 649.6 L345.3 649.1 L347.4 648.5 L349.4 648.0 L351.5 647.5 L353.5 646.9 L355.6 646.4 L357.6 645.9 L359.7 645.3 L361.8 644.8 L363.8 644.3 L365.9 643.8 L367.9 643.2 L370.0 642.7 L372.1 642.2 L374.1 641.7 L376.2 641.2 L378.2 640.7 L380.3 640.2 L382.4 639.7 L384.4 639.2 L386.5 638.7 L388.5 638.3 L390.6 637.8 L392.6 637.3 L394.7 636.8 L396.8 636.3 L398.8 635.8 L400.9 635.3 L402.9 634.8 L405.0 634.3 L407.1 633.9 L409.1 633.4 L411.2 633.0 L413.2 632.5 L415.3 632.1 L417.4 631.6 L419.4 631.2 L421.5 630.7 L423.5 630.3 L425.6 629.8 L427.6 629.4 L429.7 628.9 L431.8 628.5 L433.8 628.0 L435.9 627.6 L437.9 627.1 L440.0 626.7 L442.1 626.2 L444.1 625.8 L446.2 625.3 L448.2 624.8 L450.3 624.3 L452.4 623.9 L454.4 623.4 L456.5 622.9 L458.5 622.5 L460.6 622.0 L462.6 621.5 L464.7 621.1 L466.8 620.6 L468.8 620.1 L470.9 619.6 L472.9 619.2 L475.0 618.7 L477.1 618.3 L479.1 617.8 L481.2 617.4 L483.2 617.0 L485.3 616.5 L487.4 616.1 L489.4 615.7 L491.5 615.2 L493.5 614.8 L495.6 614.3 L497.6 613.9 L499.7 613.5 L501.8 613.0 L503.8 612.6 L505.9 612.2 L507.9 611.7 L510.0 611.3 L512.1 610.9 L514.1 610.5 L516.2 610.1 L518.2 609.7 L520.3 609.2 L522.4 608.8 L524.4 608.4 L526.5 608.0 L528.5 607.6 L530.6 607.2 L532.6 606.8 L534.7 606.4 L536.8 605.9 L538.8 605.5 L540.9 605.1 L542.9 604.7 L545.0 604.3 L547.1 603.9 L549.1 603.5 L551.2 603.1 L553.2 602.7 L555.3 602.4 L557.4 602.0 L559.4 601.6 L561.5 601.2 L563.5 600.8 L565.6 600.4 L567.6 600.0 L569.7 599.6 L571.8 599.3 L573.8 598.9 L575.9 598.5 L577.9 598.1 L580.0 597.7 L582.1 597.3 L584.1 597.0 L586.2 596.6 L588.2 596.3 L590.3 595.9 L592.4 595.6 L594.4 595.2 L596.5 594.9 L598.5 594.5 L600.6 594.2 L602.6 593.8 L604.7 593.5 L606.8 593.1 L608.8 592.8 L610.9 592.4 L612.9 592.1 L615.0 591.7 L617.1 591.4 L619.1 591.0 L621.2 590.7 L623.2 590.4 L625.3 590.0 L627.4 589.7 L629.4 589.4 L631.5 589.0 L633.5 588.7 L635.6 588.3 L637.6 588.0 L639.7 587.7 L641.8 587.3 L643.8 587.0 L645.9 586.7 L647.9 586.3 L650.0 586.0 L652.0 585.7 L654.0 585.4 L656.0 585.1 L658.0 584.7 L660.0 584.4 L662.0 584.1 L664.0 583.8 L666.0 583.5 L668.0 583.2 L670.0 582.9 L672.0 582.6 L674.0 582.2 L676.0 581.9 L678.0 581.6 L680.0 581.3 L682.0 581.0 L684.0 580.7 L686.0 580.4 L688.0 580.1 L690.0 579.8 L692.0 579.5 L694.0 579.2 L696.0 578.9 L698.0 578.6 L700.0 578.3 L702.0 578.0 L704.0 577.7 L706.0 577.4 L708.0 577.1 L710.0 576.8 L712.0 576.5 L714.0 576.2 L716.0 575.9 L718.0 575.6 L720.0 575.3 L722.1 575.0 L724.1 574.7 L726.2 574.5 L728.2 574.2 L730.3 573.9 L732.4 573.6 L734.4 573.3 L736.5 573.0 L738.5 572.8 L740.6 572.5 L742.6 572.2 L744.7 571.9 L746.8 571.6 L748.8 571.3 L750.9 571.1 L752.9 570.8 L755.0 570.5 L757.1 570.3 L759.1 570.0 L761.2 569.8 L763.2 569.5 L765.3 569.3 L767.4 569.0 L769.4 568.8 L771.5 568.5 L773.5 568.3 L775.6 568.0 L777.6 567.8 L779.7 567.5 L781.8 567.3 L783.8 567.0 L785.9 566.8 L787.9 566.5 L790.0 566.3 L792.1 566.1 L794.1 565.9 L796.2 565.7 L798.2 565.5 L800.3 565.2 L802.4 565.0 L804.4 564.8 L806.5 564.6 L808.5 564.4 L810.6 564.2 L812.6 564.0 L814.7 563.8 L816.8 563.5 L818.8 563.3 L820.9 563.1 L822.9 562.9 L825.0 562.7 L827.1 562.5 L829.1 562.4 L831.2 562.2 L833.2 562.0 L835.3 561.8 L837.4 561.7 L839.4 561.5 L841.5 561.3 L843.5 561.2 L845.6 561.0 L847.6 560.8 L849.7 560.7 L851.8 560.5 L853.8 560.3 L855.9 560.1 L857.9 560.0 L860.0 559.8 L862.1 559.7 L864.1 559.5 L866.2 559.4 L868.2 559.2 L870.3 559.1 L872.4 559.0 L874.4 558.8 L876.5 558.7 L878.5 558.5 L880.6 558.4 L882.6 558.2 L884.7 558.1 L886.8 558.0 L888.8 557.8 L890.9 557.7 L892.9 557.5 L895.0 557.4 L897.1 557.3 L899.1 557.2 L901.2 557.0 L903.2 556.9 L905.3 556.8 L907.4 556.7 L909.4 556.5 L911.5 556.4 L913.5 556.3 L915.6 556.2 L917.6 556.0 L919.7 555.9 L921.8 555.8 L923.8 555.7 L925.9 555.5 L927.9 555.4 L930.0 555.3 L932.1 555.2 L934.1 555.1 L936.2 555.0 L938.2 554.9 L940.3 554.8 L942.4 554.7 L944.4 554.6 L946.5 554.5 L948.5 554.4 L950.6 554.3 L952.6 554.2 L954.7 554.1 L956.8 554.0 L958.8 553.9 L960.9 553.8 L962.9 553.7 L965.0 553.6 L967.1 553.5 L969.1 553.4 L971.2 553.3 L973.2 553.2 L975.3 553.1 L977.4 553.0 L979.4 552.9 L981.5 552.8 L983.5 552.8 L985.6 552.7 L987.6 552.6 L989.7 552.5 L991.8 552.4 L993.8 552.3 L995.9 552.2 L997.9 552.1 L1000.0 552.0 L1002.1 551.9 L1004.1 551.9 L1006.2 551.8 L1008.2 551.7 L1010.3 551.6 L1012.4 551.6 L1014.4 551.5 L1016.5 551.4 L1018.5 551.4 L1020.6 551.3 L1022.6 551.2 L1024.7 551.2 L1026.8 551.1 L1028.8 551.0 L1030.9 550.9 L1032.9 550.9 L1035.0 550.8 L1037.1 550.7 L1039.1 550.7 L1041.2 550.6 L1043.2 550.6 L1045.3 550.5 L1047.4 550.4 L1049.4 550.4 L1051.5 550.3 L1053.5 550.3 L1055.6 550.2 L1057.6 550.2 L1059.7 550.1 L1061.8 550.0 L1063.8 550.0 L1065.9 549.9 L1067.9 549.9 L1070.0 549.8 L1072.1 549.8 L1074.1 549.7 L1076.2 549.7 L1078.2 549.7 L1080.3 549.7 L1082.4 549.6 L1084.4 549.6 L1086.5 549.6 L1088.5 549.5 L1090.6 549.5 L1092.6 549.5 L1094.7 549.4 L1096.8 549.4 L1098.8 549.4 L1100.9 549.4 L1102.9 549.3 L1105.0 549.3 L1107.1 549.3 L1109.1 549.3 L1111.2 549.3 L1113.2 549.3 L1115.3 549.3 L1117.4 549.3 L1119.4 549.3 L1121.5 549.3 L1123.5 549.3 L1125.6 549.3 L1127.6 549.3 L1129.7 549.3 L1131.8 549.3 L1133.8 549.3 L1135.9 549.3 L1137.9 549.3 L1140.0 549.3 L1142.1 549.3 L1144.1 549.3 L1146.2 549.4 L1148.2 549.4 L1150.3 549.4 L1152.4 549.5 L1154.4 549.5 L1156.5 549.5 L1158.6 549.5 L1160.6 549.5 L1162.7 549.6 L1164.8 549.6 L1166.8 549.6 L1168.9 549.7 L1170.9 549.7 L1173.0 549.7 L1175.1 549.7 L1177.1 549.8 L1179.2 549.8 L1181.2 549.9 L1183.3 549.9 L1185.3 549.9 L1187.4 550.0 L1189.4 550.0 L1191.5 550.0 L1193.6 550.1 L1195.6 550.1 L1197.7 550.2 L1199.7 550.2 L1201.8 550.2 L1203.8 550.3 L1205.9 550.3 L1207.9 550.4 L1210.0 550.4 L1212.1 550.5 L1214.1 550.6 L1216.2 550.6 L1218.2 550.7 L1220.3 550.8 L1222.4 550.9 L1224.4 550.9 L1226.5 551.0 L1228.5 551.1 L1230.6 551.2 L1232.6 551.2 L1234.7 551.3 L1236.8 551.4 L1238.8 551.5 L1240.9 551.5 L1242.9 551.6 L1245.0 551.7 L1247.1 551.8 L1249.1 551.9 L1251.2 552.0 L1253.2 552.1 L1255.3 552.2 L1257.4 552.3 L1259.4 552.4 L1261.5 552.5 L1263.5 552.5 L1265.6 552.6 L1267.6 552.7 L1269.7 552.8 L1271.8 552.9 L1273.8 553.0 L1275.9 553.1 L1277.9 553.2 L1280.0 553.3 L1282.1 553.4 L1284.1 553.5 L1286.2 553.6 L1288.2 553.7 L1290.3 553.9 L1292.4 554.0 L1294.4 554.1 L1296.5 554.2 L1298.5 554.3 L1300.6 554.4 L1302.6 554.5 L1304.7 554.6 L1306.8 554.8 L1308.8 554.9 L1310.9 555.0 L1312.9 555.1 L1315.0 555.2 L1317.1 555.3 L1319.1 555.4 L1321.2 555.6 L1323.2 555.7 L1325.3 555.8 L1327.4 555.9 L1329.4 556.1 L1331.5 556.2 L1333.5 556.3 L1335.6 556.4 L1337.6 556.6 L1339.7 556.7 L1341.8 556.8 L1343.8 556.9 L1345.9 557.1 L1347.9 557.2 L1350.0 557.3 L1352.1 557.4 L1354.1 557.6 L1356.2 557.7 L1358.2 557.8 L1360.3 558.0 L1362.4 558.1 L1364.4 558.2 L1366.5 558.4 L1368.5 558.5 L1370.6 558.7 L1372.6 558.8 L1374.7 558.9 L1376.8 559.1 L1378.8 559.2 L1380.9 559.3 L1382.9 559.5 L1385.0 559.6 L1387.1 559.8 L1389.1 559.9 L1391.2 560.1 L1393.2 560.2 L1395.3 560.4 L1397.4 560.5 L1399.4 560.7 L1401.5 560.8 L1403.5 561.0 L1405.6 561.1 L1407.6 561.3 L1409.7 561.4 L1411.8 561.6 L1413.8 561.7 L1415.9 561.9 L1417.9 562.0 L1420.0 562.2 L1422.1 562.4 L1424.1 562.5 L1426.2 562.7 L1428.2 562.9 L1430.3 563.1 L1432.4 563.2 L1434.4 563.4 L1436.5 563.6 L1438.5 563.7 L1440.6 563.9 L1442.6 564.1 L1444.7 564.2 L1446.8 564.4 L1448.8 564.6 L1450.9 564.8 L1452.9 564.9 L1455.0 565.1 L1457.1 565.3 L1459.1 565.5 L1461.2 565.7 L1463.2 565.9 L1465.3 566.0 L1467.4 566.2 L1469.4 566.4 L1471.5 566.6 L1473.5 566.8 L1475.6 567.0 L1477.6 567.2 L1479.7 567.4 L1481.8 567.5 L1483.8 567.7 L1485.9 567.9 L1487.9 568.1 L1490.0 568.3 L1492.1 568.5 L1494.1 568.7 L1496.2 568.9 L1498.2 569.1 L1500.3 569.3 L1502.4 569.5 L1504.4 569.7 L1506.5 569.9 L1508.5 570.2 L1510.6 570.4 L1512.6 570.6 L1514.7 570.8 L1516.8 571.0 L1518.8 571.2 L1520.9 571.4 L1522.9 571.6 L1525.0 571.8 L1527.1 572.0 L1529.1 572.2 L1531.2 572.5 L1533.2 572.7 L1535.3 572.9 L1537.4 573.1 L1539.4 573.4 L1541.5 573.6 L1543.5 573.8 L1545.6 574.0 L1547.6 574.3 L1549.7 574.5 L1551.8 574.7 L1553.8 574.9 L1555.9 575.2 L1557.9 575.4 L1560.0 575.6 L1562.1 575.8 L1564.1 576.1 L1566.2 576.3 L1568.2 576.5 L1570.3 576.8 L1572.4 577.0 L1574.4 577.2 L1576.5 577.5 L1578.5 577.7 L1580.6 578.0 L1582.6 578.2 L1584.7 578.4 L1586.8 578.7 L1588.8 578.9 L1590.9 579.1 L1592.9 579.4 L1595.0 579.6 L1597.1 579.8 L1599.1 580.1 L1601.2 580.3 L1603.2 580.6 L1605.3 580.8 L1607.4 581.1 L1609.4 581.3 L1611.5 581.6 L1613.5 581.8 L1615.6 582.1 L1617.6 582.3 L1619.7 582.6 L1621.8 582.8 L1623.8 583.1 L1625.9 583.3 L1627.9 583.6 L1630.0 583.8 L1632.1 584.1 L1634.1 584.3 L1636.2 584.6 L1638.2 584.8 L1640.3 585.1 L1642.4 585.3 L1644.4 585.6 L1646.5 585.8 L1648.5 586.1 L1650.6 586.3 L1652.6 586.6 L1654.7 586.8 L1656.8 587.1 L1658.8 587.3 L1660.9 587.6 L1662.9 587.8 L1665.0 588.1 L1667.1 588.4 L1669.1 588.6 L1671.2 588.9 L1673.2 589.1 L1675.3 589.4 L1677.4 589.7 L1679.4 589.9 L1681.5 590.2 L1683.5 590.4 L1685.6 590.7 L1687.6 590.9 L1689.7 591.2 L1691.8 591.5 L1693.8 591.7 L1695.9 592.0 L1697.9 592.2 L1700.0 592.5 L1702.1 592.8 L1704.2 593.0 L1706.2 593.3 L1708.3 593.5 L1710.4 593.8 L1712.5 594.0 L1714.6 594.3 L1716.7 594.6 L1718.8 594.8 L1720.8 595.1 L1722.9 595.3 L1725.0 595.6 L1727.0 595.8 L1729.0 596.0 L1731.0 596.2 L1733.0 596.3 L1735.0 596.5 L1737.0 596.7 L1739.0 596.9 L1741.0 597.1 L1743.0 597.3 L1745.0 597.4 L1747.0 597.6 L1749.0 597.8 L1751.0 598.0" stroke="#f3901f" stroke-width="1.0"/>
<path d="M3.0 966.5 L171.7 966.5 L171.7 966.3 L173.4 964.9 L175.0 964.1 L176.7 962.3 L178.2 962.2 L179.8 961.6 L181.3 960.8 L182.8 960.7 L184.3 959.8 L185.8 959.6 L187.4 958.8 L188.9 958.3 L190.4 958.1 L191.9 958.0 L193.5 956.9 L195.0 956.5 L196.5 956.3 L198.0 956.1 L199.6 955.2 L201.1 954.6 L202.6 954.6 L204.1 953.2 L205.7 953.5 L207.2 952.4 L208.7 951.8 L210.2 951.3 L211.7 950.9 L213.3 950.9 L214.8 949.8 L216.3 949.7 L217.8 949.2 L219.3 948.4 L220.9 948.1 L222.4 947.1 L223.9 946.6 L225.4 946.3 L227.0 946.2 L228.5 945.4 L230.0 944.8 L231.5 944.6 L233.0 944.0 L234.6 943.4 L236.1 943.4 L237.6 942.9 L239.1 942.0 L240.7 941.8 L242.2 941.3 L243.7 941.2 L245.2 940.6 L246.7 939.7 L248.3 939.8 L249.8 938.6 L251.3 938.4 L252.8 938.3 L254.3 937.2 L255.9 937.1 L257.4 936.2 L258.9 936.3 L260.4 935.9 L262.0 935.3 L263.5 935.1 L265.0 934.1 L266.7 934.0 L268.3 933.5 L270.0 933.0 L271.7 932.4 L273.3 932.3 L275.0 931.9 L276.0 930.2 L277.0 931.1 L278.5 930.3 L280.1 930.5 L281.6 930.1 L283.1 930.0 L284.7 929.5 L286.2 928.7 L287.7 928.4 L289.3 928.3 L290.8 927.4 L292.3 927.4 L293.9 926.8 L295.4 926.4 L296.9 926.0 L298.5 926.3 L300.0 925.4 L301.5 925.1 L303.0 924.8 L304.6 924.9 L306.1 923.8 L307.6 923.7 L309.1 923.4 L310.7 923.3 L312.2 922.9 L313.7 922.5 L315.2 921.6 L316.7 921.3 L318.3 920.9 L319.8 921.0 L321.3 920.6 L322.8 919.5 L324.3 919.1 L325.9 918.8 L327.4 918.4 L328.9 918.3 L330.4 918.0 L332.0 917.3 L333.5 916.6 L335.0 916.6 L336.5 916.2 L338.0 915.9 L339.6 915.9 L341.1 915.2 L342.6 914.7 L344.1 914.4 L345.7 914.0 L347.2 913.0 L348.7 913.4 L350.2 912.9 L351.7 912.5 L353.3 912.1 L354.8 911.3 L356.3 910.9 L357.8 910.2 L359.3 910.3 L360.9 909.4 L362.4 909.0 L363.9 908.7 L365.4 908.2 L367.0 908.0 L368.5 907.3 L370.0 906.9 L371.5 906.6 L373.0 906.2 L374.6 906.1 L376.1 905.5 L377.6 905.9 L379.1 905.3 L380.7 904.5 L382.2 904.3 L383.7 904.0 L385.2 903.7 L386.7 903.1 L388.3 903.4 L389.8 903.2 L391.3 902.4 L392.8 902.1 L394.3 901.4 L395.9 901.0 L397.4 900.9 L398.9 900.5 L400.4 900.6 L402.0 899.7 L403.5 899.2 L405.0 899.7 L406.5 899.0 L408.0 898.4 L409.6 898.4 L411.1 897.7 L412.6 897.8 L414.1 897.9 L415.7 897.5 L417.2 897.0 L418.7 896.3 L420.2 896.1 L421.7 895.7 L423.3 895.9 L424.8 895.4 L426.3 895.3 L427.8 894.6 L429.3 894.2 L430.9 894.4 L432.4 894.3 L433.9 893.8 L435.4 893.5 L437.0 893.2 L438.5 892.8 L440.0 892.1 L441.5 891.9 L443.0 891.4 L444.5 890.7 L446.0 890.3 L447.5 890.1 L449.0 889.7 L450.5 889.7 L452.0 889.5 L453.5 888.7 L455.0 888.7 L456.5 888.5 L458.0 888.3 L459.5 887.5 L461.0 887.2 L462.5 887.0 L464.0 886.8 L465.5 886.6 L467.0 886.7 L468.5 886.8 L470.0 886.5 L471.5 885.8 L473.1 885.6 L474.6 885.3 L476.2 884.3 L477.7 884.4 L479.2 884.2 L480.8 883.7 L482.3 883.3 L483.8 882.6 L485.4 882.0 L486.9 882.1 L488.5 881.3 L490.0 881.4 L491.5 881.1 L493.1 880.2 L494.6 879.8 L496.2 879.9 L497.7 879.3 L499.2 878.4 L500.8 878.0 L502.3 877.6 L503.8 877.9 L505.4 877.5 L506.9 876.5 L508.5 876.7 L510.0 876.4 L511.5 875.8 L513.0 875.2 L514.6 875.0 L516.1 874.3 L517.6 873.9 L519.1 874.4 L520.7 873.8 L522.2 873.3 L523.7 873.4 L525.2 872.6 L526.7 872.7 L528.3 872.3 L529.8 871.4 L531.3 871.1 L532.8 870.8 L534.3 870.4 L535.9 870.4 L537.4 869.8 L538.9 869.6 L540.4 869.0 L542.0 869.3 L543.5 868.5 L545.0 868.3 L546.5 868.0 L548.0 867.9 L549.6 867.1 L551.1 867.2 L552.6 866.5 L554.1 866.2 L555.7 865.8 L557.2 865.0 L558.7 865.0 L560.2 864.4 L561.7 863.9 L563.3 864.2 L564.8 863.3 L566.3 863.2 L567.8 863.1 L569.3 862.6 L570.9 862.0 L572.4 861.8 L573.9 861.5 L575.4 861.3 L577.0 860.4 L578.5 860.4 L580.0 859.8 L581.5 859.5 L583.1 859.6 L584.6 859.0 L586.1 858.7 L587.7 858.6 L589.2 858.4 L590.7 857.6 L592.3 857.4 L593.8 857.0 L595.3 856.7 L596.9 856.5 L598.4 856.0 L599.9 855.7 L601.4 855.3 L603.0 855.4 L604.5 854.9 L606.0 854.7 L607.6 854.4 L609.1 853.5 L610.6 853.4 L612.2 853.4 L613.7 853.0 L615.2 852.0 L616.8 851.7 L618.3 851.6 L620.0 848.8 L621.7 846.5 L623.2 846.0 L624.8 846.3 L626.3 846.1 L627.8 845.9 L629.3 845.0 L630.9 845.2 L632.4 844.9 L633.9 844.1 L635.4 844.5 L637.0 844.3 L638.5 843.3 L640.0 843.7 L641.5 843.3 L643.0 843.4 L644.5 844.0 L646.0 843.9 L647.6 843.0 L649.1 843.0 L650.7 842.7 L652.2 842.3 L653.8 841.9 L655.3 841.7 L656.9 841.8 L658.4 840.9 L660.0 841.0 L661.5 840.6 L663.1 839.9 L664.6 839.8 L666.2 839.8 L667.7 839.3 L669.2 838.6 L670.8 839.1 L672.3 838.6 L673.8 838.4 L675.4 837.3 L676.9 837.1 L678.5 836.6 L680.0 836.9 L681.5 836.1 L683.1 835.6 L684.6 835.6 L686.2 835.7 L687.7 835.3 L689.2 834.4 L690.8 834.0 L692.3 834.4 L693.8 833.7 L695.4 833.5 L696.9 832.6 L698.5 832.2 L700.0 832.5 L701.5 832.0 L703.1 831.4 L704.6 831.9 L706.1 831.4 L707.6 831.3 L709.2 830.4 L710.7 830.9 L712.2 829.9 L713.8 830.4 L715.3 829.8 L716.8 829.4 L718.3 829.3 L719.9 829.4 L721.4 828.6 L722.9 828.2 L724.4 828.3 L726.0 827.8 L727.5 827.4 L729.0 827.2 L730.6 826.9 L732.1 826.8 L733.6 826.6 L735.1 826.4 L736.7 826.5 L738.2 825.9 L739.7 825.8 L741.2 825.3 L742.8 825.2 L744.3 824.6 L745.8 824.6 L747.4 824.1 L748.9 824.5 L750.4 824.1 L751.9 823.5 L753.5 823.5 L755.0 823.7 L756.5 822.7 L758.1 823.1 L759.6 822.4 L761.1 822.2 L762.7 822.3 L764.2 821.6 L765.7 821.5 L767.3 821.4 L768.8 821.4 L770.3 820.5 L771.9 820.7 L773.4 820.3 L774.9 820.0 L776.4 819.5 L778.0 819.2 L779.5 818.7 L781.0 818.5 L782.6 818.2 L784.1 818.5 L785.6 817.8 L787.2 817.5 L788.7 817.1 L790.2 817.5 L791.8 817.3 L793.3 816.9 L795.0 814.6 L796.5 814.3 L798.1 814.1 L799.6 814.1 L801.1 813.6 L802.7 813.6 L804.2 813.2 L805.7 813.6 L807.3 813.4 L808.8 812.8 L810.3 812.3 L811.9 812.7 L813.4 811.8 L814.9 811.7 L816.4 811.1 L818.0 811.2 L819.5 811.1 L821.0 810.9 L822.6 810.4 L824.1 810.4 L825.6 809.7 L827.2 809.7 L828.7 809.3 L830.2 809.4 L831.8 808.8 L833.3 808.6 L835.0 809.3 L836.6 809.8 L838.3 810.6 L840.0 811.0 L841.5 810.9 L843.1 810.5 L844.6 810.2 L846.2 810.0 L847.7 809.2 L849.2 808.9 L850.8 809.1 L852.3 808.0 L853.8 808.2 L855.4 807.8 L856.9 807.0 L858.5 807.3 L860.0 807.1 L861.5 806.6 L863.0 806.5 L864.5 806.4 L866.1 805.6 L867.6 805.8 L869.1 805.6 L870.6 805.7 L872.1 805.5 L873.6 805.4 L875.1 805.0 L876.6 805.1 L878.2 804.7 L879.7 804.5 L881.2 803.9 L882.7 803.6 L884.2 803.5 L885.7 803.5 L887.2 803.1 L888.8 803.5 L890.3 803.1 L891.8 803.0 L893.3 802.8 L894.8 802.8 L896.4 802.5 L897.9 801.9 L899.4 802.5 L900.9 802.4 L902.5 802.0 L904.0 801.9 L905.5 801.9 L907.1 801.3 L908.6 801.8 L910.1 801.2 L911.6 801.0 L913.2 801.0 L914.7 801.3 L916.2 800.7 L917.8 801.1 L919.3 801.2 L920.8 800.7 L922.4 800.5 L923.9 800.4 L925.4 800.5 L926.9 800.5 L928.5 800.2 L930.0 800.1 L931.5 799.5 L933.0 799.5 L934.5 799.5 L936.0 799.9 L937.5 799.4 L939.0 799.6 L940.5 799.0 L942.0 798.9 L943.5 799.0 L945.0 799.3 L946.5 799.2 L948.0 799.1 L949.5 798.7 L951.0 798.8 L952.5 798.7 L954.0 798.6 L955.5 798.2 L957.0 798.8 L958.5 798.1 L960.0 798.7 L961.5 798.5 L963.0 797.4 L964.6 797.6 L966.1 797.8 L967.6 797.7 L969.1 797.0 L970.6 796.6 L972.1 796.4 L973.7 796.8 L975.2 795.9 L976.7 796.1 L978.4 796.0 L980.0 796.7 L981.7 797.4 L983.3 796.9 L985.0 797.9 L986.7 797.8 L988.4 798.3 L990.0 798.3 L991.7 798.1 L992.6 799.0 L993.3 783.3 L994.3 820.0 L996.0 829.0 L999.0 839.0 L1001.0 835.0 L1003.3 830.0 L1006.0 820.0 L1008.5 811.0 L1009.0 810.0 L1009.6 826.0 L1010.0 833.3 L1011.7 837.7 L1013.5 834.0 L1015.0 830.0 L1016.0 826.0 L1016.3 811.7 L1016.8 826.0 L1017.7 836.7 L1020.0 853.3 L1025.0 870.0 L1030.0 890.0 L1035.0 910.0 L1038.3 923.3 L1041.7 940.0 L1045.0 951.7 L1050.0 958.3 L1056.7 962.7 L1065.0 966.0 L1076.7 968.0 L1100.0 968.5 L1143.0 969.5 L1206.7 969.5 L1207.5 968.5 L1300.0 968.5 L1590.0 968.5 L1630.0 967.5 L1751.0 967.5" stroke="#8233a3" stroke-width="1.1"/>
<path d="M3.0 430.5 L170.8 430.5 L176.1 428.4 L183.2 424.8 L192.1 419.5 L200.9 414.2 L209.8 408.9 L215.1 406.6 L218.6 405.5 L238.1 405.5 L250.5 406.8 L266.5 408.6 L277.1 410.1 L294.8 411.0 L317.8 411.9 L355.0 413.0 L401.0 413.3 L418.7 413.9 L425.0 413.9 L430.0 413.3 L440.0 413.3 L467.0 413.3 L467.5 412.6 L528.0 412.6 L529.0 411.8 L536.0 411.8 L537.0 412.6 L545.0 412.6 L546.0 411.6 L556.0 411.6 L557.0 412.7 L580.0 412.7 L581.0 413.4 L592.0 413.4 L593.0 412.4 L602.0 412.4 L603.0 413.2 L620.0 413.4 L621.0 414.2 L628.0 414.2 L629.0 413.4 L632.0 414.3 L643.0 414.3 L644.0 413.2 L680.0 413.2 L681.0 412.3 L690.0 412.3 L691.0 413.3 L712.0 413.3 L713.0 412.4 L726.0 412.4 L727.0 413.2 L744.0 412.2 L745.0 411.6 L780.0 411.6 L808.0 411.6 L809.0 412.6 L815.0 412.2 L816.0 411.3 L838.4 410.7 L857.9 409.3 L878.0 409.2 L879.0 410.2 L889.0 410.2 L890.0 409.1 L921.7 408.4 L930.0 408.4 L931.0 409.2 L938.0 409.2 L939.0 408.2 L950.0 408.3 L952.0 409.2 L955.0 408.3 L963.0 407.6 L968.0 408.6 L974.8 408.0 L977.0 407.2 L987.2 406.8 L992.9 406.3 L993.0 401.0 L993.7 400.0 L996.0 397.0 L1000.5 396.5 L1004.9 400.0 L1008.4 401.3 L1009.2 398.0 L1010.2 397.8 L1012.0 397.4 L1015.5 400.4 L1019.0 397.0 L1023.5 393.9 L1025.3 395.3 L1028.8 393.5 L1033.2 396.0 L1036.8 396.9 L1042.1 400.9 L1045.6 403.6 L1049.2 408.0 L1054.5 412.4 L1059.8 416.0 L1066.9 419.5 L1077.5 423.1 L1088.1 425.7 L1098.7 427.5 L1107.6 428.4 L1120.0 429.2 L1172.0 429.9 L1180.0 430.5 L1751.0 430.5" stroke="#92d632" stroke-width="1.1"/>
<path d="M3.0 265.5 L54.0 265.5 L55.0 265.5 L55.5 261.3 L56.0 270.0 L56.5 263.0 L57.5 265.8 L58.0 265.4 L60.0 266.1 L62.0 266.1 L64.0 265.6 L66.0 265.8 L68.0 265.7 L70.0 266.0 L72.0 266.1 L74.0 265.4 L76.0 265.3 L76.5 257.5 L77.5 268.3 L78.0 257.5 L81.7 254.2 L88.3 249.2 L95.0 243.3 L98.3 240.3 L106.7 236.7 L115.0 232.5 L123.3 229.2 L131.7 227.0 L140.0 225.0 L148.3 223.7 L156.7 222.5 L161.7 221.3 L170.8 221.3 L178.3 228.3 L182.5 230.8 L190.0 232.2 L198.3 234.2 L206.7 236.7 L215.0 239.5 L223.3 241.7 L231.7 242.5 L240.0 242.2 L248.3 243.7 L256.7 244.2 L265.0 244.2 L270.0 243.8 L270.0 244.4 L271.6 242.8 L273.3 239.9 L275.0 241.4 L275.5 249.7 L276.2 243.3 L278.3 244.4 L280.0 243.8 L281.6 244.0 L283.3 243.8 L285.0 243.6 L286.7 242.9 L288.3 243.1 L290.0 242.9 L291.6 242.7 L293.3 242.4 L295.1 243.1 L297.0 243.4 L298.5 243.2 L300.0 243.0 L301.6 242.6 L303.2 242.5 L304.8 243.1 L306.4 242.8 L308.0 242.8 L309.9 242.9 L311.7 241.7 L313.4 242.5 L315.0 242.8 L316.7 242.6 L318.3 243.2 L320.0 243.0 L321.6 243.6 L323.3 244.4 L324.8 244.1 L326.3 243.5 L327.9 244.6 L329.4 244.6 L330.9 244.6 L332.4 245.0 L333.9 244.9 L335.4 245.1 L337.0 244.6 L338.5 245.6 L340.0 245.6 L341.5 244.5 L343.0 245.4 L344.6 245.3 L346.1 244.9 L347.6 245.0 L349.1 245.0 L350.6 245.6 L352.1 245.0 L353.7 245.5 L355.2 244.8 L356.7 245.5 L358.4 245.3 L360.0 244.4 L362.0 244.1 L364.0 244.2 L366.0 244.5 L368.0 244.8 L369.6 244.1 L371.2 243.9 L372.8 244.1 L374.4 243.1 L376.0 243.8 L378.0 243.6 L380.0 245.2 L381.6 244.3 L383.1 245.2 L384.7 244.9 L386.2 244.6 L387.8 244.6 L389.4 244.8 L390.9 244.7 L392.5 244.3 L394.1 244.1 L395.6 244.6 L397.2 245.1 L398.8 244.7 L400.3 243.9 L401.9 245.0 L403.4 244.8 L405.0 245.1 L406.7 242.9 L408.3 242.5 L410.0 240.4 L412.0 242.2 L414.0 242.7 L415.6 242.6 L417.1 243.6 L418.7 242.5 L420.3 243.1 L421.9 243.6 L423.4 242.8 L425.0 242.7 L426.6 243.7 L428.1 243.1 L429.7 243.5 L431.3 242.6 L432.9 243.1 L434.4 242.8 L436.0 243.5 L438.0 241.8 L440.0 242.1 L441.7 241.0 L443.3 242.2 L445.0 241.3 L446.7 242.5 L448.3 244.0 L450.0 243.9 L451.7 244.0 L453.3 244.7 L455.0 244.3 L456.7 243.9 L458.3 245.3 L460.0 244.1 L461.7 242.8 L463.3 242.0 L465.0 241.2 L466.5 241.7 L468.0 241.2 L469.5 241.9 L471.0 241.8 L472.5 243.5 L474.0 245.0 L475.5 244.9 L477.0 245.2 L478.6 244.9 L480.1 245.1 L481.6 244.9 L483.1 244.5 L484.6 244.2 L486.2 244.8 L487.7 244.3 L489.2 244.0 L490.7 244.5 L492.2 245.1 L493.8 244.0 L495.3 244.7 L496.8 244.4 L498.3 244.6 L499.8 244.0 L501.4 245.2 L502.9 244.2 L504.4 244.7 L505.9 244.4 L507.4 243.8 L509.0 244.6 L510.5 244.0 L512.0 243.9 L514.0 242.6 L516.0 241.5 L517.6 241.5 L519.2 242.2 L520.8 242.1 L522.4 242.8 L524.0 242.7 L525.6 242.8 L527.2 241.8 L528.8 242.1 L530.4 241.8 L532.0 242.3 L533.5 243.3 L535.0 244.4 L536.6 244.4 L538.2 243.9 L539.9 244.3 L541.5 244.5 L543.1 243.9 L544.8 244.1 L546.4 244.7 L548.0 244.5 L549.5 245.4 L551.0 244.8 L552.5 244.6 L554.0 244.8 L555.5 244.9 L557.0 245.0 L558.5 245.5 L560.0 245.5 L561.5 245.3 L563.1 245.7 L564.6 245.2 L566.2 246.1 L567.7 246.2 L569.2 245.9 L570.8 245.5 L572.3 245.7 L573.8 245.8 L575.4 245.1 L576.9 245.6 L578.5 245.8 L580.0 245.3 L581.5 245.2 L583.1 246.2 L584.6 245.6 L586.2 245.9 L587.7 246.4 L589.2 246.0 L590.8 245.6 L592.3 246.6 L593.8 245.7 L595.4 245.3 L596.9 246.2 L598.5 245.4 L600.0 245.7 L601.6 246.5 L603.2 246.4 L604.8 245.5 L606.4 246.2 L608.0 246.2 L609.6 246.3 L611.2 246.0 L612.8 246.6 L614.4 245.9 L616.0 246.3 L618.3 246.8 L620.0 258.1 L621.5 256.5 L623.0 257.0 L625.0 252.6 L627.0 256.1 L628.6 255.8 L630.3 255.8 L631.9 256.1 L633.5 255.5 L635.2 255.1 L636.8 255.0 L638.4 254.9 L640.1 255.9 L641.7 255.5 L642.0 252.3 L643.8 252.0 L645.7 251.0 L647.5 251.9 L648.0 248.7 L649.5 248.7 L651.0 248.4 L652.5 248.2 L654.0 248.4 L655.5 248.9 L657.0 248.2 L658.5 248.6 L660.0 248.6 L661.5 249.2 L663.1 249.0 L664.6 249.2 L666.2 249.1 L667.7 248.4 L669.2 248.3 L670.8 248.6 L672.3 248.3 L673.8 248.6 L675.4 248.9 L676.9 249.3 L678.5 248.8 L680.0 249.1 L681.5 248.2 L683.1 248.6 L684.6 249.6 L686.2 248.5 L687.7 248.9 L689.2 248.5 L690.8 248.6 L692.3 249.7 L693.8 249.9 L695.4 249.5 L696.9 248.9 L698.5 249.2 L700.0 249.1 L701.5 249.5 L703.0 249.3 L704.5 248.7 L706.0 248.5 L707.5 247.7 L709.0 248.1 L710.5 248.4 L712.0 247.9 L713.6 247.0 L715.1 247.6 L716.7 248.0 L718.2 247.4 L719.8 248.3 L721.3 247.8 L722.9 248.2 L724.4 247.8 L726.0 248.7 L727.6 248.5 L729.1 248.2 L730.7 247.7 L732.2 248.1 L733.8 247.6 L735.3 248.5 L736.9 248.9 L738.4 248.0 L740.0 248.5 L741.7 247.9 L743.3 247.2 L745.0 247.1 L746.5 247.5 L748.0 247.2 L749.5 247.0 L751.0 247.8 L752.5 247.0 L754.0 247.6 L755.5 247.6 L757.0 247.8 L758.5 248.0 L760.0 247.2 L761.5 247.8 L763.0 247.5 L764.5 247.8 L766.1 248.2 L767.6 247.8 L769.1 246.9 L770.6 247.5 L772.1 247.9 L773.6 248.1 L775.1 247.8 L776.6 248.0 L778.2 246.9 L779.7 248.2 L781.2 247.9 L782.7 247.7 L784.2 248.1 L785.7 248.1 L787.2 247.0 L788.8 248.0 L790.3 247.9 L791.8 247.1 L793.3 247.8 L796.0 253.4 L798.0 252.5 L800.0 252.9 L801.5 250.2 L803.0 249.2 L804.5 250.7 L806.0 252.2 L807.8 252.5 L809.5 252.3 L811.2 251.9 L813.0 252.9 L815.0 247.9 L816.8 248.1 L818.5 249.0 L820.2 249.7 L822.0 249.7 L823.6 250.3 L825.2 250.3 L826.9 251.0 L828.5 250.9 L830.1 251.2 L831.8 252.0 L833.4 251.7 L835.0 252.2 L837.0 245.1 L838.6 244.6 L840.2 245.8 L841.8 246.2 L843.4 246.0 L845.0 246.7 L846.5 247.0 L848.0 247.3 L849.5 246.4 L851.0 246.5 L852.5 247.0 L854.0 247.2 L855.5 247.1 L857.0 246.8 L858.5 246.1 L860.0 245.3 L861.5 246.1 L863.0 248.1 L864.8 247.3 L866.5 246.9 L868.2 247.0 L870.0 245.7 L871.6 246.4 L873.2 246.3 L874.8 246.5 L876.4 247.2 L878.0 246.2 L879.6 247.4 L881.2 246.8 L882.8 247.4 L884.4 247.8 L886.0 247.7 L888.0 244.9 L889.5 245.7 L891.0 244.8 L892.5 245.7 L894.0 245.6 L895.5 246.0 L897.0 246.6 L898.5 246.7 L900.0 246.7 L901.7 246.4 L903.3 246.6 L905.0 247.1 L906.7 247.0 L908.3 247.3 L910.0 248.4 L911.7 246.9 L913.3 247.6 L915.0 246.6 L916.7 246.3 L918.3 245.9 L920.0 245.2 L921.7 246.0 L923.3 245.8 L925.0 246.5 L926.7 246.5 L928.3 247.6 L930.0 247.9 L931.7 246.3 L933.4 245.7 L935.0 245.2 L936.7 243.5 L938.4 243.5 L940.0 244.1 L941.7 244.3 L943.3 245.4 L945.0 245.3 L946.7 245.8 L948.3 246.9 L950.0 246.6 L951.5 247.2 L953.0 246.7 L954.5 246.1 L956.0 246.5 L957.9 244.6 L959.8 244.2 L961.7 243.1 L963.3 242.9 L964.9 243.6 L966.4 244.4 L968.0 244.5 L969.8 245.5 L971.5 246.6 L973.2 247.7 L975.0 248.4 L976.7 247.8 L978.3 246.0 L980.0 245.7 L981.5 245.1 L983.0 244.1 L984.5 243.5 L986.0 242.5 L988.0 242.1 L990.0 239.8 L992.5 242.0 L993.0 276.9 L993.7 204.9 L995.2 179.3 L996.6 173.0 L997.5 160.0 L998.3 166.0 L999.4 153.7 L1000.3 162.0 L1001.5 168.7 L1003.7 187.8 L1005.8 207.0 L1008.0 224.0 L1009.2 240.7 L1009.6 196.3 L1010.7 185.7 L1011.8 180.4 L1013.3 196.3 L1015.8 211.3 L1016.5 247.5 L1017.0 213.4 L1018.0 187.8 L1019.0 168.7 L1019.7 153.7 L1021.0 152.0 L1022.8 147.3 L1023.9 136.7 L1025.0 135.0 L1026.5 130.3 L1027.7 120.7 L1029.9 106.9 L1031.4 99.4 L1033.0 97.5 L1034.6 93.0 L1036.2 91.5 L1037.8 88.8 L1039.2 81.3 L1040.0 79.5 L1041.0 77.5 L1042.0 79.8 L1043.5 80.2 L1045.2 89.8 L1046.9 104.7 L1048.4 121.8 L1050.5 143.1 L1052.7 164.4 L1054.8 183.6 L1056.9 200.6 L1059.1 215.5 L1061.8 228.3 L1064.4 235.8 L1067.6 242.1 L1071.8 246.4 L1076.1 249.6 L1081.4 251.3 L1086.1 252.8 L1087.2 258.1 L1096.3 257.8 L1108.3 258.0 L1108.6 256.6 L1116.0 256.8 L1116.3 254.0 L1116.6 259.7 L1117.0 257.3 L1122.0 257.9 L1142.5 257.9 L1143.7 256.0 L1147.0 257.4 L1163.0 257.5 L1163.3 258.1 L1206.6 258.1 L1207.0 261.5 L1211.0 261.5 L1211.4 260.5 L1280.0 260.6 L1280.4 261.3 L1420.0 261.8 L1600.0 262.6 L1751.0 263.2" stroke="#fdf000" stroke-width="1.1"/>
<path d="M3.0 265.5 L54.0 265.5 L55.0 265.5 L55.5 261.3 L56.0 270.0 L56.5 263.0 L57.5 265.8 L58.0 265.6 L60.0 265.4 L62.0 265.3 L64.0 266.4 L66.0 265.9 L68.0 266.1 L70.0 265.9 L72.0 265.6 L74.0 266.1 L76.0 265.9 L76.5 257.2 L77.5 268.3 L78.0 256.9 L79.8 255.6 L81.7 253.6 L83.3 252.2 L85.0 251.4 L86.7 249.9 L88.3 248.9 L90.0 248.1 L91.7 245.6 L93.3 245.0 L95.0 242.8 L96.7 242.2 L98.3 240.7 L100.0 239.1 L101.7 239.4 L103.3 238.5 L105.0 236.8 L106.7 236.6 L108.4 236.2 L110.0 235.7 L111.7 233.7 L113.3 233.0 L115.0 232.9 L116.7 232.5 L118.3 230.6 L120.0 229.9 L121.6 230.2 L123.3 228.9 L125.0 228.6 L126.7 228.9 L128.3 228.2 L130.0 227.7 L131.7 227.6 L133.4 226.9 L135.0 226.7 L136.7 226.0 L138.3 225.5 L140.0 224.3 L141.7 225.4 L143.3 225.1 L145.0 224.0 L146.6 224.1 L148.3 223.0 L150.0 223.5 L151.7 223.4 L153.3 222.7 L155.0 222.6 L156.7 223.0 L158.4 221.6 L160.0 221.6 L161.7 220.7 L163.2 221.1 L164.7 221.9 L166.2 221.5 L167.8 220.6 L169.3 221.8 L170.8 221.5 L172.3 222.7 L173.8 223.8 L175.3 225.2 L176.8 226.4 L178.3 228.5 L180.4 228.9 L182.5 231.5 L184.0 230.5 L185.5 231.5 L187.0 231.8 L188.5 231.7 L190.0 231.9 L191.7 232.5 L193.3 232.7 L195.0 234.1 L196.6 234.0 L198.3 234.2 L200.0 234.9 L201.7 235.2 L203.3 235.2 L205.0 235.5 L206.7 237.4 L208.4 237.8 L210.0 237.2 L211.7 238.5 L213.3 239.4 L215.0 240.1 L216.7 239.3 L218.3 239.8 L220.0 240.7 L221.6 241.4 L223.3 241.1 L225.0 242.2 L226.7 242.4 L228.3 242.1 L230.0 242.9 L231.7 242.3 L233.4 242.9 L235.0 242.2 L236.7 242.2 L238.3 242.1 L240.0 242.5 L241.7 243.1 L243.3 242.2 L245.0 243.2 L246.6 243.9 L248.3 244.0 L250.0 243.4 L251.7 243.7 L253.3 244.6 L255.0 243.7 L256.7 244.9 L258.4 244.0 L260.0 244.2 L261.7 244.5 L263.3 244.5 L265.0 244.3 L266.7 244.6 L268.3 244.1 L270.0 244.4 L270.0 244.1 L271.1 241.7 L272.2 241.1 L273.3 239.9 L275.0 242.5 L275.5 249.6 L276.2 243.8 L277.2 242.7 L278.3 244.0 L279.4 243.1 L280.4 243.4 L281.5 243.9 L282.6 242.8 L283.6 243.0 L284.7 243.9 L285.7 243.5 L286.8 242.7 L287.9 243.4 L288.9 243.8 L290.0 242.0 L291.1 243.2 L292.2 242.5 L293.3 241.4 L294.5 241.5 L295.8 243.7 L297.0 243.0 L298.0 242.4 L299.0 242.5 L300.0 244.0 L301.0 243.5 L302.0 243.9 L303.0 243.7 L304.0 243.2 L305.0 244.1 L306.0 242.8 L307.0 243.1 L308.0 243.7 L309.2 242.8 L310.5 242.9 L311.7 241.9 L312.8 242.6 L313.9 241.7 L315.0 242.6 L316.0 242.8 L317.1 242.4 L318.1 242.8 L319.1 242.6 L320.2 243.0 L321.2 243.9 L322.3 243.4 L323.3 243.4 L324.3 243.2 L325.4 243.4 L326.4 244.9 L327.5 244.3 L328.5 244.3 L329.6 243.5 L330.6 244.7 L331.6 243.6 L332.7 244.2 L333.7 245.5 L334.8 244.9 L335.8 244.8 L336.9 245.1 L337.9 245.6 L339.0 245.5 L340.0 244.4 L341.0 244.0 L342.1 244.6 L343.1 244.5 L344.2 244.4 L345.2 245.9 L346.3 245.8 L347.3 244.6 L348.4 245.3 L349.4 244.8 L350.4 245.9 L351.5 244.9 L352.5 244.5 L353.6 244.5 L354.6 245.1 L355.7 244.5 L356.7 245.2 L357.8 245.7 L358.9 244.5 L360.0 243.9 L361.0 245.3 L362.0 244.1 L363.0 243.0 L364.0 242.6 L365.0 243.1 L366.0 244.5 L367.0 245.1 L368.0 244.6 L369.0 243.7 L370.0 244.2 L371.0 245.2 L372.0 244.1 L373.0 244.8 L374.0 244.4 L375.0 242.4 L376.0 243.7 L377.0 243.9 L378.0 244.0 L379.0 243.8 L380.0 244.9 L381.0 243.8 L382.0 244.5 L383.0 244.5 L384.0 245.5 L385.0 245.4 L386.0 244.1 L387.0 244.6 L388.0 243.9 L389.0 245.4 L390.0 245.3 L391.0 244.1 L392.0 244.8 L393.0 244.8 L394.0 243.8 L395.0 245.1 L396.0 244.6 L397.0 245.1 L398.0 244.6 L399.0 243.5 L400.0 244.2 L401.0 243.5 L402.0 245.4 L403.0 245.3 L404.0 245.2 L405.0 244.1 L406.0 242.9 L407.0 243.9 L408.0 243.3 L409.0 240.8 L410.0 241.0 L411.0 240.6 L412.0 242.5 L413.0 243.1 L414.0 242.2 L415.0 243.0 L416.0 243.1 L417.0 242.5 L418.0 243.8 L419.0 242.9 L420.0 242.5 L421.0 243.2 L422.0 243.6 L423.0 242.5 L424.0 242.7 L425.0 244.2 L426.0 243.5 L427.0 243.0 L428.0 243.2 L429.0 242.4 L430.0 242.6 L431.0 242.9 L432.0 243.4 L433.0 242.7 L434.0 242.7 L435.0 242.4 L436.0 243.6 L437.0 242.3 L438.0 243.3 L439.0 242.7 L440.0 240.6 L441.0 241.0 L442.0 242.1 L443.0 241.2 L444.0 241.1 L445.0 242.9 L446.0 242.6 L447.0 242.9 L448.0 244.0 L449.0 244.6 L450.0 243.7 L451.0 243.6 L452.0 244.3 L453.0 244.3 L454.0 244.4 L455.0 245.0 L456.0 244.9 L457.0 245.6 L458.0 243.7 L459.0 244.4 L460.0 244.3 L461.0 244.6 L462.0 242.6 L463.0 241.8 L464.0 241.6 L465.0 240.8 L466.0 240.8 L467.0 241.0 L468.0 242.6 L469.0 241.9 L470.0 243.0 L471.0 242.6 L472.0 242.3 L473.0 244.9 L474.0 245.3 L475.0 245.6 L476.0 245.5 L477.0 245.3 L478.0 243.9 L479.0 244.6 L480.0 244.0 L481.0 244.4 L482.0 243.7 L483.0 244.3 L484.0 245.6 L485.0 244.1 L486.0 245.2 L487.0 244.5 L488.0 244.4 L489.0 245.5 L490.0 245.6 L491.0 244.7 L492.0 245.0 L493.0 243.8 L494.0 244.1 L495.0 245.5 L496.0 244.7 L497.0 244.6 L498.0 245.1 L499.0 243.6 L500.0 244.7 L501.0 244.5 L502.0 245.3 L503.0 243.8 L504.0 245.5 L505.0 243.6 L506.0 243.9 L507.0 244.7 L508.0 244.9 L509.0 244.0 L510.0 243.7 L511.0 245.3 L512.0 244.0 L513.0 244.1 L514.0 243.5 L515.0 242.5 L516.0 242.2 L517.0 242.1 L518.0 242.9 L519.0 241.4 L520.0 242.5 L521.0 241.5 L522.0 241.9 L523.0 242.4 L524.0 241.7 L525.0 241.7 L526.0 242.7 L527.0 241.2 L528.0 242.1 L529.0 243.2 L530.0 243.2 L531.0 241.3 L532.0 241.6 L533.0 242.3 L534.0 244.3 L535.0 244.8 L536.0 244.9 L537.0 243.9 L538.0 243.5 L539.0 245.0 L540.0 244.8 L541.0 244.7 L542.0 245.6 L543.0 244.9 L544.0 243.7 L545.0 245.4 L546.0 244.4 L547.0 245.3 L548.0 245.9 L549.0 244.3 L550.0 244.3 L551.0 244.3 L552.0 245.3 L553.0 244.7 L554.0 245.5 L555.0 245.7 L556.0 244.7 L557.0 245.7 L558.0 244.9 L559.0 245.4 L560.0 246.4 L561.0 246.2 L562.0 244.7 L563.0 245.4 L564.0 245.1 L565.0 244.5 L566.0 246.1 L567.0 245.9 L568.0 245.1 L569.0 246.1 L570.0 245.7 L571.0 245.5 L572.0 244.6 L573.0 244.8 L574.0 246.5 L575.0 246.5 L576.0 245.8 L577.0 246.4 L578.0 245.9 L579.0 245.0 L580.0 245.0 L581.0 245.4 L582.0 246.6 L583.0 246.4 L584.0 246.6 L585.0 246.7 L586.0 245.2 L587.0 245.3 L588.0 245.0 L589.0 246.5 L590.0 246.7 L591.0 245.7 L592.0 246.2 L593.0 245.2 L594.0 246.8 L595.0 246.7 L596.0 247.0 L597.0 246.6 L598.0 246.8 L599.0 245.0 L600.0 246.5 L601.0 245.7 L602.0 247.0 L603.0 246.7 L604.0 246.9 L605.0 246.8 L606.0 245.7 L607.0 246.9 L608.0 245.5 L609.0 247.1 L610.0 247.1 L611.0 245.8 L612.0 247.1 L613.0 246.4 L614.0 246.1 L615.0 247.2 L616.0 246.0 L617.1 245.8 L618.3 246.4 L620.0 257.1 L621.0 258.0 L622.0 257.9 L623.0 256.1 L624.0 255.1 L625.0 252.8 L626.0 255.5 L627.0 256.1 L628.0 256.9 L629.1 255.1 L630.1 256.8 L631.2 255.1 L632.2 256.7 L633.3 255.2 L634.4 254.8 L635.4 255.5 L636.5 256.0 L637.5 255.1 L638.6 255.7 L639.6 255.4 L640.7 255.1 L641.7 255.5 L642.0 251.2 L643.1 252.1 L644.2 250.7 L645.3 252.6 L646.4 251.8 L647.5 252.2 L648.0 248.8 L649.0 248.7 L650.0 248.1 L651.0 247.5 L652.0 248.7 L653.0 248.1 L654.0 248.1 L655.0 249.2 L656.0 249.0 L657.0 248.1 L658.0 248.1 L659.0 248.4 L660.0 248.4 L661.0 248.2 L662.0 247.8 L663.0 248.4 L664.0 249.5 L665.0 249.0 L666.0 249.5 L667.0 248.9 L668.0 248.2 L669.0 248.7 L670.0 247.6 L671.0 248.2 L672.0 248.5 L673.0 248.8 L674.0 249.0 L675.0 248.6 L676.0 248.6 L677.0 248.1 L678.0 248.6 L679.0 249.5 L680.0 249.3 L681.0 248.0 L682.0 247.9 L683.0 248.9 L684.0 249.1 L685.0 248.6 L686.0 249.6 L687.0 249.5 L688.0 249.4 L689.0 248.5 L690.0 248.5 L691.0 248.1 L692.0 248.6 L693.0 249.2 L694.0 250.0 L695.0 248.4 L696.0 249.2 L697.0 249.7 L698.0 248.8 L699.0 249.9 L700.0 249.5 L701.0 248.8 L702.0 249.5 L703.0 248.0 L704.0 249.4 L705.0 249.2 L706.0 247.7 L707.0 248.2 L708.0 247.5 L709.0 249.0 L710.0 247.9 L711.0 246.7 L712.0 247.0 L713.0 248.3 L714.0 247.5 L715.0 248.2 L716.0 248.0 L717.0 248.7 L718.0 247.9 L719.0 248.7 L720.0 248.6 L721.0 248.1 L722.0 248.3 L723.0 247.9 L724.0 248.6 L725.0 248.1 L726.0 248.8 L727.0 248.5 L728.0 248.0 L729.0 247.6 L730.0 247.6 L731.0 248.5 L732.0 248.8 L733.0 248.3 L734.0 248.6 L735.0 247.8 L736.0 247.5 L737.0 247.9 L738.0 247.9 L739.0 248.1 L740.0 248.6 L741.0 247.4 L742.0 247.3 L743.0 247.9 L744.0 247.6 L745.0 245.9 L746.0 246.7 L747.0 247.0 L748.0 246.8 L749.0 246.4 L750.0 246.9 L751.0 248.0 L752.0 247.3 L753.0 247.6 L754.0 248.0 L755.0 247.9 L756.0 247.1 L757.0 246.4 L758.0 247.2 L759.0 248.1 L760.0 248.3 L761.0 248.5 L762.0 247.4 L763.0 248.1 L764.0 247.7 L765.0 247.8 L766.1 247.0 L767.1 247.0 L768.1 247.4 L769.1 246.6 L770.1 247.2 L771.1 247.9 L772.1 247.4 L773.1 246.9 L774.1 247.5 L775.1 246.8 L776.1 247.8 L777.2 246.6 L778.2 247.3 L779.2 247.7 L780.2 246.5 L781.2 247.8 L782.2 246.8 L783.2 247.4 L784.2 246.6 L785.2 247.3 L786.2 246.9 L787.2 247.2 L788.3 248.1 L789.3 247.3 L790.3 248.0 L791.3 248.2 L792.3 247.0 L793.3 246.6 L794.6 249.4 L796.0 253.4 L797.0 254.1 L798.0 252.6 L799.0 253.0 L800.0 253.1 L801.0 251.7 L802.0 250.7 L803.0 249.9 L804.0 249.5 L805.0 250.3 L806.0 251.8 L807.0 251.7 L808.0 252.8 L809.0 252.5 L810.0 251.7 L811.0 252.7 L812.0 252.8 L813.0 251.5 L814.0 250.6 L815.0 249.0 L816.0 247.8 L817.0 249.5 L818.0 249.9 L819.0 248.2 L820.0 248.2 L821.0 249.0 L822.0 249.9 L823.0 250.7 L824.0 249.8 L825.0 250.7 L826.0 249.6 L827.0 251.2 L828.0 251.3 L829.0 250.4 L830.0 252.1 L831.0 252.5 L832.0 252.2 L833.0 251.5 L834.0 253.6 L835.0 253.4 L836.0 248.4 L837.0 244.5 L838.0 244.7 L839.0 245.2 L840.0 245.0 L841.0 246.3 L842.0 246.5 L843.0 245.2 L844.0 247.2 L845.0 246.8 L846.0 247.3 L847.0 247.1 L848.0 246.6 L849.0 247.3 L850.0 247.9 L851.0 246.5 L852.0 247.7 L853.0 247.2 L854.0 247.2 L855.0 247.2 L856.0 247.9 L857.0 247.0 L858.0 247.3 L859.0 246.3 L860.0 243.7 L861.0 246.5 L862.0 246.3 L863.0 247.9 L864.0 247.9 L865.0 247.2 L866.0 246.2 L867.0 247.6 L868.0 245.9 L869.0 245.7 L870.0 246.6 L871.0 245.8 L872.0 247.0 L873.0 246.7 L874.0 245.9 L875.0 245.4 L876.0 247.5 L877.0 245.8 L878.0 247.2 L879.0 246.8 L880.0 247.5 L881.0 247.4 L882.0 247.4 L883.0 247.2 L884.0 247.9 L885.0 246.6 L886.0 246.9 L887.0 246.7 L888.0 244.6 L889.0 245.3 L890.0 245.2 L891.0 245.4 L892.0 245.3 L893.0 246.1 L894.0 245.4 L895.0 246.3 L896.0 245.5 L897.0 245.6 L898.0 245.5 L899.0 245.7 L900.0 245.7 L901.0 246.7 L902.0 247.3 L903.0 246.2 L904.0 246.4 L905.0 247.1 L906.0 247.8 L907.0 248.4 L908.0 247.6 L909.0 247.2 L910.0 247.0 L911.0 247.0 L912.0 246.8 L913.0 246.5 L914.0 246.0 L915.0 246.9 L916.0 246.1 L917.0 247.4 L918.0 246.3 L919.0 246.4 L920.0 245.0 L921.0 246.7 L922.0 246.1 L923.0 247.0 L924.0 246.6 L925.0 246.5 L926.0 246.6 L927.0 246.2 L928.0 246.1 L929.0 248.1 L930.0 247.3 L931.1 247.4 L932.2 245.9 L933.4 244.6 L934.5 245.2 L935.6 243.4 L936.7 243.0 L937.7 244.1 L938.8 243.7 L939.8 245.4 L940.9 243.8 L941.9 245.4 L942.9 245.3 L944.0 245.9 L945.0 244.9 L946.0 245.8 L947.0 246.0 L948.0 246.3 L949.0 247.5 L950.0 248.0 L951.0 246.4 L952.0 246.9 L953.0 246.7 L954.0 246.8 L955.0 247.1 L956.0 245.4 L957.1 244.7 L958.3 244.9 L959.4 243.2 L960.6 242.5 L961.7 241.6 L962.8 241.7 L963.8 243.0 L964.9 243.5 L965.9 243.2 L967.0 243.4 L968.0 244.6 L969.0 245.2 L970.0 245.2 L971.0 246.2 L972.0 247.3 L973.0 247.5 L974.0 247.7 L975.0 248.3 L976.0 248.4 L977.0 246.8 L978.0 246.6 L979.0 246.3 L980.0 246.4 L981.0 245.8 L982.0 243.8 L983.0 243.5 L984.0 243.4 L985.0 243.9 L986.0 243.1 L987.0 241.8 L988.0 240.7 L989.0 241.1 L990.0 240.4 L991.2 241.9 L992.5 242.0 L993.0 276.3 L993.7 204.8 L995.2 178.8 L996.6 173.3 L997.5 160.0 L998.3 165.4 L999.4 153.1 L1000.3 162.3 L1001.5 168.2 L1002.6 178.6 L1003.7 188.0 L1004.8 197.4 L1005.8 207.5 L1006.9 215.6 L1008.0 224.1 L1009.2 240.6 L1009.6 196.0 L1010.7 185.2 L1011.8 180.3 L1013.3 196.1 L1014.5 204.2 L1015.8 211.0 L1016.5 247.4 L1017.0 214.0 L1018.0 188.0 L1019.0 168.9 L1019.7 154.0 L1021.0 152.6 L1022.8 146.9 L1023.9 137.1 L1025.0 134.4 L1026.5 130.0 L1027.7 120.8 L1028.8 113.6 L1029.9 106.9 L1031.4 99.0 L1033.0 97.2 L1034.6 92.9 L1036.2 91.7 L1037.8 89.1 L1039.2 81.3 L1040.0 79.3 L1041.0 78.1 L1042.0 80.2 L1043.5 80.3 L1045.2 89.9 L1046.9 104.2 L1048.4 121.4 L1049.5 131.9 L1050.5 143.7 L1051.6 154.2 L1052.7 163.8 L1053.8 174.3 L1054.8 183.4 L1055.8 192.3 L1056.9 200.5 L1058.0 207.8 L1059.1 214.9 L1060.4 221.5 L1061.8 228.2 L1063.1 232.3 L1064.4 235.3 L1065.5 237.8 L1066.5 240.6 L1067.6 241.6 L1068.6 243.0 L1069.7 244.7 L1070.8 245.5 L1071.8 247.0 L1072.9 247.3 L1073.9 248.2 L1075.0 248.4 L1076.1 249.5 L1077.2 250.0 L1078.2 250.8 L1079.3 250.8 L1080.3 250.8 L1081.4 251.8 L1082.6 251.8 L1083.8 252.4 L1084.9 252.0 L1086.1 252.5 L1087.2 258.2 L1087.2 257.9 L1089.5 258.0 L1091.8 257.7 L1094.0 258.1 L1096.3 257.6 L1098.3 257.9 L1100.3 258.1 L1102.3 257.8 L1104.3 258.2 L1106.3 258.1 L1108.3 258.0 L1108.6 256.7 L1111.1 256.7 L1113.5 256.6 L1116.0 257.1 L1116.3 253.9 L1116.6 260.0 L1117.0 257.5 L1119.5 257.3 L1122.0 257.7 L1124.0 257.9 L1126.1 258.1 L1128.2 257.7 L1130.2 258.0 L1132.2 257.8 L1134.3 258.1 L1136.3 258.2 L1138.4 258.1 L1140.5 257.7 L1142.5 258.1 L1143.7 256.0 L1147.0 257.6 L1149.0 257.4 L1151.0 257.7 L1153.0 257.8 L1155.0 257.7 L1157.0 257.7 L1159.0 257.7 L1161.0 257.5 L1163.0 257.3 L1163.3 258.4 L1165.4 258.1 L1167.4 257.8 L1169.5 258.1 L1171.5 258.0 L1173.6 257.9 L1175.7 258.4 L1177.7 257.8 L1179.8 258.4 L1181.9 258.1 L1183.9 257.9 L1186.0 258.0 L1188.0 258.1 L1190.1 257.8 L1192.2 258.3 L1194.2 258.2 L1196.3 258.4 L1198.4 258.3 L1200.4 258.3 L1202.5 258.4 L1204.5 258.4 L1206.6 258.2 L1207.0 261.5 L1209.0 261.5 L1211.0 261.7 L1211.4 260.8 L1213.4 260.7 L1215.4 260.7 L1217.5 260.2 L1219.5 260.5 L1221.5 260.2 L1223.5 260.6 L1225.5 260.6 L1227.5 260.6 L1229.6 260.8 L1231.6 260.3 L1233.6 260.7 L1235.6 260.6 L1237.6 260.3 L1239.6 260.9 L1241.7 260.2 L1243.7 260.5 L1245.7 260.6 L1247.7 260.6 L1249.7 260.9 L1251.8 260.6 L1253.8 260.8 L1255.8 260.4 L1257.8 260.6 L1259.8 260.3 L1261.8 260.7 L1263.9 260.5 L1265.9 260.8 L1267.9 260.3 L1269.9 260.6 L1271.9 260.9 L1273.9 260.3 L1276.0 260.7 L1278.0 260.7 L1280.0 260.7 L1280.4 261.3 L1282.4 261.3 L1284.4 261.6 L1286.5 261.2 L1288.5 261.5 L1290.5 261.4 L1292.5 261.5 L1294.6 261.3 L1296.6 261.0 L1298.6 261.5 L1300.6 261.2 L1302.7 261.6 L1304.7 261.7 L1306.7 261.6 L1308.7 261.3 L1310.7 261.6 L1312.8 261.3 L1314.8 261.3 L1316.8 261.5 L1318.8 261.5 L1320.9 261.6 L1322.9 261.5 L1324.9 261.4 L1326.9 261.6 L1329.0 261.4 L1331.0 261.6 L1333.0 261.2 L1335.0 261.3 L1337.0 261.7 L1339.1 261.3 L1341.1 261.5 L1343.1 261.2 L1345.1 261.7 L1347.2 261.4 L1349.2 261.2 L1351.2 261.4 L1353.2 261.8 L1355.3 261.7 L1357.3 261.2 L1359.3 261.9 L1361.3 261.3 L1363.4 261.6 L1365.4 261.6 L1367.4 261.8 L1369.4 261.4 L1371.4 261.8 L1373.5 261.5 L1375.5 261.8 L1377.5 261.9 L1379.5 261.7 L1381.6 261.3 L1383.6 261.8 L1385.6 261.6 L1387.6 261.8 L1389.7 261.9 L1391.7 261.4 L1393.7 261.8 L1395.7 261.8 L1397.7 262.0 L1399.8 261.8 L1401.8 261.8 L1403.8 261.9 L1405.8 261.5 L1407.9 262.0 L1409.9 261.8 L1411.9 261.9 L1413.9 261.6 L1416.0 261.8 L1418.0 261.7 L1420.0 261.6 L1422.0 262.1 L1424.0 262.0 L1426.0 261.8 L1428.0 261.6 L1430.0 262.2 L1432.0 261.6 L1434.0 261.9 L1436.0 261.9 L1438.0 262.1 L1440.0 262.0 L1442.0 262.0 L1444.0 261.9 L1446.0 262.2 L1448.0 262.1 L1450.0 261.8 L1452.0 262.1 L1454.0 262.2 L1456.0 262.0 L1458.0 261.7 L1460.0 261.7 L1462.0 262.3 L1464.0 261.8 L1466.0 262.2 L1468.0 261.8 L1470.0 261.8 L1472.0 261.8 L1474.0 262.2 L1476.0 261.8 L1478.0 262.0 L1480.0 262.3 L1482.0 262.1 L1484.0 261.8 L1486.0 261.8 L1488.0 262.3 L1490.0 262.0 L1492.0 261.8 L1494.0 262.1 L1496.0 262.3 L1498.0 262.0 L1500.0 261.9 L1502.0 262.0 L1504.0 262.2 L1506.0 262.4 L1508.0 261.9 L1510.0 262.4 L1512.0 262.3 L1514.0 262.3 L1516.0 262.1 L1518.0 261.9 L1520.0 262.2 L1522.0 262.2 L1524.0 262.4 L1526.0 262.0 L1528.0 262.1 L1530.0 262.0 L1532.0 262.3 L1534.0 262.0 L1536.0 262.3 L1538.0 262.3 L1540.0 262.2 L1542.0 262.1 L1544.0 262.6 L1546.0 262.3 L1548.0 262.1 L1550.0 262.4 L1552.0 262.6 L1554.0 262.4 L1556.0 262.7 L1558.0 262.6 L1560.0 262.5 L1562.0 262.1 L1564.0 262.4 L1566.0 262.5 L1568.0 262.2 L1570.0 262.5 L1572.0 262.6 L1574.0 262.7 L1576.0 262.7 L1578.0 262.7 L1580.0 262.4 L1582.0 262.6 L1584.0 262.5 L1586.0 262.7 L1588.0 262.3 L1590.0 262.3 L1592.0 262.7 L1594.0 262.7 L1596.0 262.4 L1598.0 262.8 L1600.0 262.8 L1602.0 262.7 L1604.0 262.6 L1606.0 262.3 L1608.1 262.5 L1610.1 262.8 L1612.1 262.9 L1614.1 262.4 L1616.1 262.4 L1618.1 262.6 L1620.1 263.0 L1622.1 262.5 L1624.2 263.0 L1626.2 262.9 L1628.2 262.9 L1630.2 263.0 L1632.2 262.8 L1634.2 262.5 L1636.2 262.7 L1638.3 262.7 L1640.3 262.9 L1642.3 262.7 L1644.3 262.9 L1646.3 262.5 L1648.3 262.6 L1650.3 262.6 L1652.3 262.6 L1654.4 263.0 L1656.4 263.1 L1658.4 262.6 L1660.4 262.8 L1662.4 262.5 L1664.4 262.7 L1666.4 262.6 L1668.5 263.0 L1670.5 263.1 L1672.5 263.1 L1674.5 262.7 L1676.5 262.8 L1678.5 262.7 L1680.5 263.0 L1682.5 262.7 L1684.6 263.1 L1686.6 262.9 L1688.6 263.0 L1690.6 263.2 L1692.6 263.2 L1694.6 262.8 L1696.6 263.1 L1698.7 262.8 L1700.7 262.7 L1702.7 263.2 L1704.7 262.8 L1706.7 262.9 L1708.7 263.2 L1710.7 263.3 L1712.7 263.0 L1714.8 263.2 L1716.8 263.0 L1718.8 262.8 L1720.8 263.1 L1722.8 262.9 L1724.8 262.9 L1726.8 263.0 L1728.9 263.2 L1730.9 262.9 L1732.9 262.9 L1734.9 263.2 L1736.9 263.0 L1738.9 263.2 L1740.9 263.3 L1742.9 263.0 L1745.0 263.4 L1747.0 263.5 L1749.0 262.9 L1751.0 262.9" stroke="#fdf000" stroke-width="1.1" transform="translate(0 0.6)"/>
</g>
<text x="55.4" y="986.7" font-size="11.75" fill="#b6b6b6" font-family='"DejaVu Sans", "Liberation Sans", sans-serif' text-anchor="middle">0 s</text>
<text x="229.8" y="986.7" font-size="11.75" fill="#b6b6b6" font-family='"DejaVu Sans", "Liberation Sans", sans-serif' text-anchor="middle">5 ms</text>
<text x="404.6" y="986.7" font-size="11.75" fill="#b6b6b6" font-family='"DejaVu Sans", "Liberation Sans", sans-serif' text-anchor="middle">10 ms</text>
<text x="579.4" y="986.7" font-size="11.75" fill="#b6b6b6" font-family='"DejaVu Sans", "Liberation Sans", sans-serif' text-anchor="middle">15 ms</text>
<text x="754.2" y="986.7" font-size="11.75" fill="#b6b6b6" font-family='"DejaVu Sans", "Liberation Sans", sans-serif' text-anchor="middle">20 ms</text>
<text x="929.0" y="986.7" font-size="11.75" fill="#b6b6b6" font-family='"DejaVu Sans", "Liberation Sans", sans-serif' text-anchor="middle">25 ms</text>
<text x="1103.8" y="986.7" font-size="11.75" fill="#b6b6b6" font-family='"DejaVu Sans", "Liberation Sans", sans-serif' text-anchor="middle">30 ms</text>
<text x="1278.6" y="986.7" font-size="11.75" fill="#b6b6b6" font-family='"DejaVu Sans", "Liberation Sans", sans-serif' text-anchor="middle">35 ms</text>
<text x="1453.4" y="986.7" font-size="11.75" fill="#b6b6b6" font-family='"DejaVu Sans", "Liberation Sans", sans-serif' text-anchor="middle">40 ms</text>
<text x="1628.2" y="986.7" font-size="11.75" fill="#b6b6b6" font-family='"DejaVu Sans", "Liberation Sans", sans-serif' text-anchor="middle">45 ms</text>
<path d="M1710 64.7H1742Q1744.2 64.7 1744.2 67V98.9Z" fill="#4f4f4f"/>
<circle cx="1737.2" cy="71.4" r="4.1" fill="#595959" stroke="#9e9e9e" stroke-width="1.2"/>
<path d="M1733.4 75.4L1727.9 80.2" stroke="#a6a6a6" stroke-width="2.7" stroke-linecap="round"/>
<polygon points="45,58 65.2,58 55.4,67.8" fill="#f7931e"/>
<path d="M46.2 69.2H64V87.8H59.3L55.4 94.2L51.5 87.8H46.2Z" fill="#000" stroke="#f7931e" stroke-width="2.3" stroke-linejoin="miter"/>
<text x="55.2" y="84.2" font-size="15.4" fill="#f7931e" font-family='"Liberation Sans", sans-serif' text-anchor="middle" font-weight="bold">T</text>
<path d="M9.5 161.9H78.5L84 174.5L78.5 187.1H9.5Q6.5 187.1 6.5 184.1V164.9Q6.5 161.9 9.5 161.9Z" fill="#1c1a08" stroke="#f3e62c" stroke-width="1.6" stroke-linejoin="round"/>
<path d="M33 161.9V187.1" stroke="#f3e62c" stroke-width="1.6"/>
<path d="M9.5 395.9H78.5L84 408.5L78.5 421.1H9.5Q6.5 421.1 6.5 418.1V398.9Q6.5 395.9 9.5 395.9Z" fill="#141a06" stroke="#8fc62e" stroke-width="1.6" stroke-linejoin="round"/>
<path d="M33 395.9V421.1" stroke="#8fc62e" stroke-width="1.6"/>
<path d="M3 735.3H7M42 735.3H55" stroke="#f7931e" stroke-width="1.1"/>
<path d="M9.5 722.9H29.5L41.8 735.2L29.5 747.5H9.5Q6.5 747.5 6.5 744.5V725.9Q6.5 722.9 9.5 722.9Z" fill="#1a0f05" stroke="#f7931e" stroke-width="1.2" stroke-linejoin="round"/>
<path d="M9.5 952.7H29.5L41.8 965.0L29.5 977.3H9.5Q6.5 977.3 6.5 974.3V955.7Q6.5 952.7 9.5 952.7Z" fill="#722d8e" stroke="#722d8e" stroke-width="1.2" stroke-linejoin="round"/>
<text x="102.0" y="179.0" font-size="18" fill="#f3e62c" font-family='"DejaVu Sans", "Liberation Sans", sans-serif' textLength="96.8" lengthAdjust="spacing">U_loop,coil</text>
<text x="102.0" y="413.0" font-size="18" fill="#8fc62e" font-family='"DejaVu Sans", "Liberation Sans", sans-serif' textLength="85.4" lengthAdjust="spacing">U_Photod</text>
<text x="53.9" y="739.6" font-size="18" fill="#e58c22" font-family='"DejaVu Sans", "Liberation Sans", sans-serif' textLength="27.5" lengthAdjust="spacing">B_t</text>
<text x="53.7" y="970.0" font-size="17.8" fill="#70298c" font-family='"DejaVu Sans", "Liberation Sans", sans-serif' textLength="24.6" lengthAdjust="spacing">I_p</text>
<circle cx="1761.9" cy="503.7" r="2.1" fill="#d2d2d2"/>
<circle cx="1761.9" cy="512.3" r="2.1" fill="#d2d2d2"/>
<circle cx="1761.9" cy="520.9" r="2.1" fill="#d2d2d2"/>
<rect x="1769.5" y="29.5" width="160" height="966" fill="#2e2e2e" stroke="#5c5a58" stroke-width="1"/>
<text x="1802.5" y="43.8" font-size="14" fill="#ececec" font-family='"DejaVu Sans", "Liberation Sans", sans-serif' textLength="84.5" lengthAdjust="spacing" font-weight="bold">Add New...</text>
<rect x="1778.5" y="54.5" width="62.0" height="36.0" rx="5.5" fill="url(#btn)" stroke="#776f69" stroke-width="1"/>
<rect x="1850.5" y="54.5" width="62.0" height="36.0" rx="5.5" fill="url(#btn)" stroke="#776f69" stroke-width="1"/>
<rect x="1778.5" y="100.5" width="62.0" height="36.0" rx="5.5" fill="url(#btn)" stroke="#776f69" stroke-width="1"/>
<rect x="1850.5" y="100.5" width="62.0" height="36.0" rx="5.5" fill="url(#btn)" stroke="#776f69" stroke-width="1"/>
<rect x="1778.5" y="146.5" width="62.0" height="36.0" rx="5.5" fill="url(#btn)" stroke="#776f69" stroke-width="1"/>
<rect x="1850.5" y="146.5" width="62.0" height="36.0" rx="5.5" fill="url(#btn)" stroke="#776f69" stroke-width="1"/>
<rect x="1778.5" y="196.5" width="62.0" height="36.0" rx="5.5" fill="url(#btn)" stroke="#776f69" stroke-width="1"/>
<rect x="1850.5" y="196.5" width="62.0" height="36.0" rx="5.5" fill="url(#btn)" stroke="#776f69" stroke-width="1"/>
<text x="1784.8" y="76.8" font-size="15" fill="#f4f4f4" font-family='"Liberation Sans", sans-serif' textLength="50.6" lengthAdjust="spacing">Cursors</text>
<text x="1856.5" y="76.8" font-size="15" fill="#f4f4f4" font-family='"Liberation Sans", sans-serif' textLength="49.1" lengthAdjust="spacing">Callout</text>
<text x="1780.6" y="122.8" font-size="15" fill="#f4f4f4" font-family='"Liberation Sans", sans-serif' textLength="58.1" lengthAdjust="spacing">Measure</text>
<text x="1858.1" y="122.8" font-size="15" fill="#f4f4f4" font-family='"Liberation Sans", sans-serif' textLength="45.9" lengthAdjust="spacing">Search</text>
<text x="1785.7" y="161.1" font-size="15" fill="#f4f4f4" font-family='"Liberation Sans", sans-serif' textLength="47.6" lengthAdjust="spacing">Results</text>
<text x="1792.2" y="176.9" font-size="15" fill="#f4f4f4" font-family='"Liberation Sans", sans-serif' textLength="35.6" lengthAdjust="spacing">Table</text>
<text x="1867.4" y="168.8" font-size="15" fill="#f4f4f4" font-family='"Liberation Sans", sans-serif' textLength="27.9" lengthAdjust="spacing">Plot</text>
<text x="1856.4" y="219.4" font-size="15" fill="#f4f4f4" font-family='"Liberation Sans", sans-serif' textLength="49.9" lengthAdjust="spacing">More...</text>
<path d="M1773 189.5H1917M1773 241.5H1917" stroke="#776f69" stroke-width="1"/>
<path d="M1797 203H1800.2M1803 203H1807.4M1810.2 203H1814.6M1817.1 203H1821M1797 221.9H1800.2M1803 221.9H1807.2M1810.2 221.9H1814.4M1798.2 201.8V204.6M1798.2 207.8V210.8M1798.2 213.6V217.1M1798.2 220.1V223.1M1819.8 201.8V204.6M1819.8 207.8V210.8M1819.8 213.6V217" fill="none" stroke="#bcbcbc" stroke-width="2.4"/>
<circle cx="1811.1" cy="210.8" r="4.5" fill="none" stroke="#bcbcbc" stroke-width="1.6"/>
<path d="M1807.3 214.3L1803.3 217.5" stroke="#bcbcbc" stroke-width="3" stroke-linecap="round"/>
<path d="M1815 217.1L1823.6 222L1820.4 223L1822.4 226.6L1820.6 227.6L1818.6 224L1816.2 226.4Z" fill="#c6c6c6"/>
<path d="M3.0 1022V1007.0Q3.0 1003.0 7.0 1003.0H89.0Q93.0 1003.0 93.0 1007.0V1022Z" fill="#4d4a23"/>
<path d="M3.0 1022H93.0V1074.0Q93.0 1079.0 88.0 1079.0H8.0Q3.0 1079.0 3.0 1074.0Z" fill="#c9c9c9"/>
<rect x="3" y="1022" width="90" height="1.6" fill="#a6a6a6"/>
<text x="8.1" y="1016.7" font-size="15" fill="#f3e62c" font-family='"Liberation Sans", sans-serif' textLength="28.8" lengthAdjust="spacing" stroke="#f3e62c" stroke-width="0.25">Ch 1</text>
<text x="8.1" y="1036.8" font-size="15" fill="#000000" font-family='"Liberation Sans", sans-serif' textLength="43.8" lengthAdjust="spacing">5 V/div</text>
<text x="9.4" y="1055.6" font-size="15" fill="#000000" font-family='"Liberation Sans", sans-serif' textLength="34.6" lengthAdjust="spacing">1 MΩ</text>
<text x="8.1" y="1074.4" font-size="15" fill="#000000" font-family='"Liberation Sans", sans-serif' textLength="52.9" lengthAdjust="spacing">200 kHz</text>
<text x="74.6" y="1068.9" font-size="8.8" fill="#000000" font-family='"Liberation Sans", sans-serif' font-weight="bold">B</text>
<text x="80.4" y="1071.9" font-size="8.8" fill="#000000" font-family='"Liberation Sans", sans-serif' font-weight="bold">w</text>
<path d="M98.0 1022V1007.0Q98.0 1003.0 102.0 1003.0H184.0Q188.0 1003.0 188.0 1007.0V1022Z" fill="#278281"/>
<path d="M98.0 1022H188.0V1074.0Q188.0 1079.0 183.0 1079.0H103.0Q98.0 1079.0 98.0 1074.0Z" fill="#808080"/>
<rect x="98" y="1022" width="90" height="1.6" fill="#6e6e6e"/>
<text x="103.1" y="1016.7" font-size="15" fill="#1c1c1c" font-family='"Liberation Sans", sans-serif' textLength="29.6" lengthAdjust="spacing" stroke="#1c1c1c" stroke-width="0.25">Ch 2</text>
<text x="103.1" y="1036.8" font-size="15" fill="#262626" font-family='"Liberation Sans", sans-serif' textLength="73.0" lengthAdjust="spacing">250 mV/div</text>
<text x="104.4" y="1055.6" font-size="15" fill="#262626" font-family='"Liberation Sans", sans-serif' textLength="34.6" lengthAdjust="spacing">1 MΩ</text>
<text x="103.1" y="1074.4" font-size="15" fill="#262626" font-family='"Liberation Sans", sans-serif' textLength="52.9" lengthAdjust="spacing">200 kHz</text>
<text x="169.6" y="1068.9" font-size="8.8" fill="#262626" font-family='"Liberation Sans", sans-serif' font-weight="bold">B</text>
<text x="175.4" y="1071.9" font-size="8.8" fill="#262626" font-family='"Liberation Sans", sans-serif' font-weight="bold">w</text>
<path d="M193.0 1022V1007.0Q193.0 1003.0 197.0 1003.0H279.0Q283.0 1003.0 283.0 1007.0V1022Z" fill="#8e3a4a"/>
<path d="M193.0 1022H283.0V1074.0Q283.0 1079.0 278.0 1079.0H198.0Q193.0 1079.0 193.0 1074.0Z" fill="#808080"/>
<rect x="193" y="1022" width="90" height="1.6" fill="#6e6e6e"/>
<text x="198.1" y="1016.7" font-size="15" fill="#a9a9a9" font-family='"Liberation Sans", sans-serif' textLength="29.6" lengthAdjust="spacing" stroke="#a9a9a9" stroke-width="0.25">Ch 3</text>
<text x="198.1" y="1036.8" font-size="15" fill="#262626" font-family='"Liberation Sans", sans-serif' textLength="73.0" lengthAdjust="spacing">450 mV/div</text>
<text x="199.4" y="1055.6" font-size="15" fill="#262626" font-family='"Liberation Sans", sans-serif' textLength="34.6" lengthAdjust="spacing">1 MΩ</text>
<text x="198.1" y="1074.4" font-size="15" fill="#262626" font-family='"Liberation Sans", sans-serif' textLength="52.9" lengthAdjust="spacing">200 kHz</text>
<text x="264.6" y="1068.9" font-size="8.8" fill="#262626" font-family='"Liberation Sans", sans-serif' font-weight="bold">B</text>
<text x="270.4" y="1071.9" font-size="8.8" fill="#262626" font-family='"Liberation Sans", sans-serif' font-weight="bold">w</text>
<path d="M288.0 1022V1007.0Q288.0 1003.0 292.0 1003.0H374.0Q378.0 1003.0 378.0 1007.0V1022Z" fill="#3b4626"/>
<path d="M288.0 1022H378.0V1074.0Q378.0 1079.0 373.0 1079.0H293.0Q288.0 1079.0 288.0 1074.0Z" fill="#c9c9c9"/>
<rect x="288" y="1022" width="90" height="1.6" fill="#a6a6a6"/>
<text x="293.1" y="1016.7" font-size="15" fill="#8fd020" font-family='"Liberation Sans", sans-serif' textLength="29.6" lengthAdjust="spacing" stroke="#8fd020" stroke-width="0.25">Ch 4</text>
<text x="293.1" y="1036.8" font-size="15" fill="#000000" font-family='"Liberation Sans", sans-serif' textLength="73.0" lengthAdjust="spacing">200 mV/div</text>
<text x="294.4" y="1055.6" font-size="15" fill="#000000" font-family='"Liberation Sans", sans-serif' textLength="34.6" lengthAdjust="spacing">1 MΩ</text>
<text x="293.1" y="1074.4" font-size="15" fill="#000000" font-family='"Liberation Sans", sans-serif' textLength="52.9" lengthAdjust="spacing">200 kHz</text>
<text x="359.6" y="1068.9" font-size="8.8" fill="#000000" font-family='"Liberation Sans", sans-serif' font-weight="bold">B</text>
<text x="365.4" y="1071.9" font-size="8.8" fill="#000000" font-family='"Liberation Sans", sans-serif' font-weight="bold">w</text>
<path d="M383.0 1022V1007.0Q383.0 1003.0 387.0 1003.0H469.0Q473.0 1003.0 473.0 1007.0V1022Z" fill="#46311f"/>
<path d="M383.0 1022H473.0V1074.0Q473.0 1079.0 468.0 1079.0H388.0Q383.0 1079.0 383.0 1074.0Z" fill="#c9c9c9"/>
<rect x="383" y="1022" width="90" height="1.6" fill="#a6a6a6"/>
<text x="388.1" y="1016.7" font-size="15" fill="#ff9a1e" font-family='"Liberation Sans", sans-serif' textLength="47.0" lengthAdjust="spacing" stroke="#ff9a1e" stroke-width="0.25">Math 1</text>
<text x="388.1" y="1036.8" font-size="15" fill="#000000" font-family='"Liberation Sans", sans-serif' textLength="75.0" lengthAdjust="spacing">73.9 mT/div</text>
<text x="388.1" y="1055.6" font-size="15" fill="#000000" font-family='"Liberation Sans", sans-serif' textLength="73.0" lengthAdjust="spacing">Intg(Ch2)…</text>
<path d="M478.0 1022V1007.0Q478.0 1003.0 482.0 1003.0H564.0Q568.0 1003.0 568.0 1007.0V1022Z" fill="#6f2a8c"/>
<path d="M478.0 1022H568.0V1074.0Q568.0 1079.0 563.0 1079.0H483.0Q478.0 1079.0 478.0 1074.0Z" fill="#c9c9c9"/>
<rect x="478" y="1022" width="90" height="1.6" fill="#a6a6a6"/>
<text x="483.1" y="1016.7" font-size="15" fill="#ffffff" font-family='"Liberation Sans", sans-serif' textLength="48.0" lengthAdjust="spacing" stroke="#ffffff" stroke-width="0.25">Math 2</text>
<text x="483.1" y="1036.8" font-size="15" fill="#000000" font-family='"Liberation Sans", sans-serif' textLength="80.6" lengthAdjust="spacing">1.277 kA/div</text>
<text x="483.1" y="1055.6" font-size="15" fill="#000000" font-family='"Liberation Sans", sans-serif' textLength="73.5" lengthAdjust="spacing">-Intg(Ch3…</text>
<rect x="1023.5" y="999.5" width="39.0" height="79.0" rx="5.5" fill="url(#tall)" stroke="#776f69" stroke-width="1"/>
<rect x="1027.2" y="1006.8" width="32" height="2.3" fill="#ff9922"/>
<text x="1043.0" y="1050.0" font-size="19.5" fill="#f4f4f4" font-family='"Liberation Sans", sans-serif' text-anchor="middle">5</text>
<rect x="1068.5" y="999.5" width="39.0" height="79.0" rx="5.5" fill="url(#tall)" stroke="#776f69" stroke-width="1"/>
<rect x="1072.2" y="1006.8" width="32" height="2.3" fill="#2222d8"/>
<text x="1087.9" y="1050.0" font-size="19.5" fill="#f4f4f4" font-family='"Liberation Sans", sans-serif' text-anchor="middle">6</text>
<path d="M1118.5 1000V1078M1269.5 1000V1078M1811.5 1000V1078" stroke="#776f69" stroke-width="1"/>
<rect x="1129.5" y="999.5" width="39.0" height="79.0" rx="5.5" fill="url(#tall)" stroke="#776f69" stroke-width="1"/>
<rect x="1133.2" y="1006.8" width="32" height="2.3" fill="#b82025"/>
<text x="1135.7" y="1032.8" font-size="15" fill="#f4f4f4" font-family='"Liberation Sans", sans-serif' textLength="26.7" lengthAdjust="spacing">Add</text>
<text x="1134.4" y="1048.9" font-size="15" fill="#f4f4f4" font-family='"Liberation Sans", sans-serif' textLength="29.1" lengthAdjust="spacing">New</text>
<text x="1132.5" y="1064.8" font-size="15" fill="#f4f4f4" font-family='"Liberation Sans", sans-serif' textLength="33.1" lengthAdjust="spacing">Math</text>
<rect x="1174.5" y="999.5" width="39.0" height="79.0" rx="5.5" fill="url(#tall)" stroke="#776f69" stroke-width="1"/>
<rect x="1178.2" y="1006.8" width="32" height="2.3" fill="#c5c9e0"/>
<text x="1180.7" y="1032.8" font-size="15" fill="#f4f4f4" font-family='"Liberation Sans", sans-serif' textLength="26.7" lengthAdjust="spacing">Add</text>
<text x="1179.4" y="1048.9" font-size="15" fill="#f4f4f4" font-family='"Liberation Sans", sans-serif' textLength="29.1" lengthAdjust="spacing">New</text>
<text x="1184.0" y="1064.8" font-size="15" fill="#f4f4f4" font-family='"Liberation Sans", sans-serif' textLength="20.1" lengthAdjust="spacing">Ref</text>
<rect x="1219.5" y="999.5" width="39.0" height="79.0" rx="5.5" fill="url(#tall)" stroke="#776f69" stroke-width="1"/>
<rect x="1223.2" y="1006.8" width="32" height="2.3" fill="#c65cff"/>
<text x="1225.7" y="1032.8" font-size="15" fill="#f4f4f4" font-family='"Liberation Sans", sans-serif' textLength="26.7" lengthAdjust="spacing">Add</text>
<text x="1224.4" y="1048.9" font-size="15" fill="#f4f4f4" font-family='"Liberation Sans", sans-serif' textLength="29.1" lengthAdjust="spacing">New</text>
<text x="1228.0" y="1064.8" font-size="15" fill="#f4f4f4" font-family='"Liberation Sans", sans-serif' textLength="21.9" lengthAdjust="spacing">Bus</text>
<rect x="1280.5" y="1003.4" width="198.8" height="75.3" rx="4" fill="#c9c9c9" stroke="#1a1a1a" stroke-width="1.2"/>
<path d="M1281.1 1023V1007.8Q1281.1 1004.0 1284.9 1004.0H1474.9Q1478.7 1004.0 1478.7 1007.8V1023Z" fill="#58595b"/>
<rect x="1281.1" y="1023" width="197.60000000000002" height="1.4" fill="#b2b2b2"/>
<text x="1286.1" y="1017.9" font-size="15.2" fill="#ffffff" font-family='"Liberation Sans", sans-serif' textLength="73.2" lengthAdjust="spacing">Horizontal</text>
<text x="1285.3" y="1037.0" font-size="15" fill="#000000" font-family='"Liberation Sans", sans-serif' textLength="52.5" lengthAdjust="spacing">5 ms/div</text>
<text x="1391.5" y="1037.0" font-size="15" fill="#000000" font-family='"Liberation Sans", sans-serif' textLength="38.2" lengthAdjust="spacing">50 ms</text>
<text x="1285.3" y="1055.6" font-size="15" fill="#000000" font-family='"Liberation Sans", sans-serif' textLength="67.1" lengthAdjust="spacing">SR: 1 MS/s</text>
<text x="1392.5" y="1055.6" font-size="15" fill="#000000" font-family='"Liberation Sans", sans-serif' textLength="42.3" lengthAdjust="spacing">1 µs/pt</text>
<text x="1285.3" y="1074.7" font-size="15" fill="#000000" font-family='"Liberation Sans", sans-serif' textLength="70.0" lengthAdjust="spacing">RL: 50 kpts</text>
<text x="1405.6" y="1074.7" font-size="15" fill="#000000" font-family='"Liberation Sans", sans-serif' textLength="21.2" lengthAdjust="spacing">3%</text>
<path d="M1391.5 1063.4H1399.4V1071.3H1397.3L1395.45 1074L1393.6 1071.3H1391.5Z" fill="#000" stroke="#f7931e" stroke-width="1.2"/>
<text x="1395.5" y="1070.1" font-size="7.6" fill="#ffffff" font-family='"Liberation Sans", sans-serif' text-anchor="middle" font-weight="bold">T</text>
<rect x="1485.8" y="1003.4" width="158.5" height="75.3" rx="4" fill="#c9c9c9" stroke="#1a1a1a" stroke-width="1.2"/>
<path d="M1486.4 1023V1007.8Q1486.4 1004.0 1490.2 1004.0H1639.9Q1643.7 1004.0 1643.7 1007.8V1023Z" fill="#58595b"/>
<rect x="1486.3999999999999" y="1023" width="157.3" height="1.4" fill="#b2b2b2"/>
<text x="1491.4" y="1017.9" font-size="15.2" fill="#ffffff" font-family='"Liberation Sans", sans-serif' textLength="48.7" lengthAdjust="spacing">Trigger</text>
<rect x="1490.2" y="1025.6" width="29.4" height="15" rx="5" fill="#2323c3" stroke="#111" stroke-width="1"/>
<text x="1504.9" y="1037.5" font-size="15.5" fill="#ffffff" font-family='"Liberation Sans", sans-serif' text-anchor="middle">6</text>
<path d="M1530.3 1037H1534L1542.4 1027.4H1545.8" fill="none" stroke="#2c2c88" stroke-width="1.3"/>
<text x="1556.3" y="1037.0" font-size="15" fill="#000000" font-family='"Liberation Sans", sans-serif' textLength="20.9" lengthAdjust="spacing">3 V</text>
<rect x="1650.6" y="1003.4" width="148.8" height="75.3" rx="4" fill="#c9c9c9" stroke="#1a1a1a" stroke-width="1.2"/>
<path d="M1651.2 1023V1007.8Q1651.2 1004.0 1655.0 1004.0H1795.0Q1798.8 1004.0 1798.8 1007.8V1023Z" fill="#58595b"/>
<rect x="1651.1999999999998" y="1023" width="147.60000000000002" height="1.4" fill="#b2b2b2"/>
<text x="1656.2" y="1017.9" font-size="15.2" fill="#ffffff" font-family='"Liberation Sans", sans-serif' textLength="77.0" lengthAdjust="spacing">Acquisition</text>
<text x="1655.3" y="1037.0" font-size="15" fill="#000000" font-family='"Liberation Sans", sans-serif' textLength="51.3" lengthAdjust="spacing">Manual,</text>
<text x="1736.2" y="1037.0" font-size="15" fill="#000000" font-family='"Liberation Sans", sans-serif' textLength="49.1" lengthAdjust="spacing">Analyze</text>
<text x="1655.3" y="1055.6" font-size="15" fill="#000000" font-family='"Liberation Sans", sans-serif' textLength="106.9" lengthAdjust="spacing">High Res: 16 bits</text>
<text x="1655.3" y="1074.7" font-size="15" fill="#000000" font-family='"Liberation Sans", sans-serif' textLength="69.7" lengthAdjust="spacing">Single: 0 /1</text>
<rect x="1822.5" y="999.7" width="89" height="34.8" rx="6" fill="#ff1d25" stroke="#776f69" stroke-width="1"/>
<text x="1840.3" y="1019.9" font-size="11.7" fill="#ffffff" font-family='"DejaVu Sans", "Liberation Sans", sans-serif' textLength="53.0" lengthAdjust="spacing" font-weight="bold">Preview</text>
<rect x="1822.5" y="1040.3" width="89" height="38" rx="5" fill="#c9c9c9"/>
<text x="1827.3" y="1054.7" font-size="15" fill="#000000" font-family='"Liberation Sans", sans-serif' textLength="79.5" lengthAdjust="spacing">15 Apr 2025</text>
<text x="1829.7" y="1071.5" font-size="15" fill="#000000" font-family='"Liberation Sans", sans-serif' textLength="74.2" lengthAdjust="spacing">4:40:20 PM</text>
</g>
<text x="20.5" y="19.4" font-size="16" fill="#f2f2f2" font-family='"Liberation Sans", sans-serif' textLength="24.8" lengthAdjust="spacing">File</text>
<text x="86.6" y="19.4" font-size="16" fill="#f2f2f2" font-family='"Liberation Sans", sans-serif' textLength="28.4" lengthAdjust="spacing">Edit</text>
<text x="155.6" y="19.4" font-size="16" fill="#f2f2f2" font-family='"Liberation Sans", sans-serif' textLength="44.4" lengthAdjust="spacing">Utility</text>
<text x="240.7" y="19.4" font-size="16" fill="#f2f2f2" font-family='"Liberation Sans", sans-serif' textLength="34.3" lengthAdjust="spacing">Help</text>
<text x="10.9" y="178.1" font-size="11.5" fill="#f3e62c" font-family='"Liberation Sans", sans-serif' textLength="16.1" lengthAdjust="spacing">C 1</text>
<text x="45.8" y="178.1" font-size="12" fill="#f3e62c" font-family='"Liberation Sans", sans-serif' textLength="24.1" lengthAdjust="spacing">20 V</text>
<text x="10.9" y="412.1" font-size="11.5" fill="#8fc62e" font-family='"Liberation Sans", sans-serif' textLength="17.1" lengthAdjust="spacing">C 4</text>
<text x="36.1" y="412.1" font-size="12" fill="#8fc62e" font-family='"Liberation Sans", sans-serif' textLength="41.8" lengthAdjust="spacing">200 mV</text>
<text x="13.6" y="738.7" font-size="12" fill="#f7931e" font-family='"Liberation Sans", sans-serif' textLength="19.6" lengthAdjust="spacing">M 1</text>
<text x="13.6" y="968.5" font-size="12" fill="#ffffff" font-family='"Liberation Sans", sans-serif' textLength="19.6" lengthAdjust="spacing">M 2</text>
</svg>
</body></html>
